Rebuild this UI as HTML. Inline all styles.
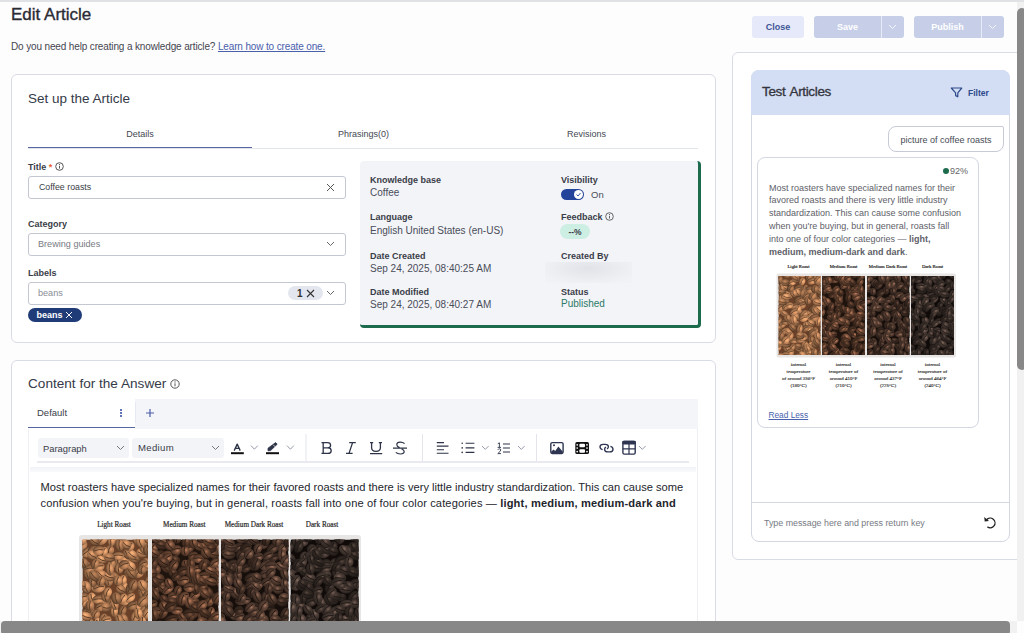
<!DOCTYPE html>
<html><head><meta charset="utf-8">
<style>
html,body{margin:0;padding:0;}
body{width:1024px;height:633px;overflow:hidden;position:relative;background:#fdfdfe;font-family:"Liberation Sans",sans-serif;color:#333;}
.a{position:absolute;}
.t{position:absolute;line-height:1;white-space:nowrap;}
.b{font-weight:bold;}
.lbl{font-size:9px;font-weight:bold;color:#3a3d48;}
.val{font-size:10px;color:#4a4d58;}
.rc{font-size:9px;color:#5e6068;}
.box{position:absolute;border:1px solid #c3c7d1;border-radius:3px;background:#fff;box-sizing:border-box;}
svg{position:absolute;overflow:visible;}
</style></head><body>
<svg width="0" height="0" style="position:absolute"><defs><clipPath id="cl100"><rect x="82.4" y="539.5" width="65.6" height="84.0"/></clipPath><radialGradient id="g100_0" cx="40%" cy="35%" r="70%"><stop offset="0" stop-color="#c3875b"/><stop offset="0.3" stop-color="#a6734e"/><stop offset="0.75" stop-color="#735036"/><stop offset="1" stop-color="#412d1e"/></radialGradient><radialGradient id="g100_1" cx="40%" cy="35%" r="70%"><stop offset="0" stop-color="#da9766"/><stop offset="0.3" stop-color="#b98057"/><stop offset="0.75" stop-color="#81593c"/><stop offset="1" stop-color="#483222"/></radialGradient><radialGradient id="g100_2" cx="40%" cy="35%" r="70%"><stop offset="0" stop-color="#f0a771"/><stop offset="0.3" stop-color="#cd8e60"/><stop offset="0.75" stop-color="#8e6343"/><stop offset="1" stop-color="#503725"/></radialGradient><radialGradient id="g100_3" cx="40%" cy="35%" r="70%"><stop offset="0" stop-color="#ffb77c"/><stop offset="0.3" stop-color="#e09c69"/><stop offset="0.75" stop-color="#9c6c49"/><stop offset="1" stop-color="#573d29"/></radialGradient><clipPath id="cl101"><rect x="152.0" y="539.5" width="66.5" height="84.0"/></clipPath><radialGradient id="g101_0" cx="40%" cy="35%" r="70%"><stop offset="0" stop-color="#81563f"/><stop offset="0.3" stop-color="#523728"/><stop offset="0.75" stop-color="#39261c"/><stop offset="1" stop-color="#20150f"/></radialGradient><radialGradient id="g101_1" cx="40%" cy="35%" r="70%"><stop offset="0" stop-color="#976449"/><stop offset="0.3" stop-color="#60402f"/><stop offset="0.75" stop-color="#432c20"/><stop offset="1" stop-color="#251912"/></radialGradient><radialGradient id="g101_2" cx="40%" cy="35%" r="70%"><stop offset="0" stop-color="#ac7354"/><stop offset="0.3" stop-color="#6e4935"/><stop offset="0.75" stop-color="#4c3325"/><stop offset="1" stop-color="#2b1c15"/></radialGradient><radialGradient id="g101_3" cx="40%" cy="35%" r="70%"><stop offset="0" stop-color="#c2815f"/><stop offset="0.3" stop-color="#7c523c"/><stop offset="0.75" stop-color="#56392a"/><stop offset="1" stop-color="#302017"/></radialGradient><clipPath id="cl102"><rect x="221.0" y="539.5" width="67.5" height="84.0"/></clipPath><radialGradient id="g102_0" cx="40%" cy="35%" r="70%"><stop offset="0" stop-color="#6d4f3f"/><stop offset="0.3" stop-color="#422f26"/><stop offset="0.75" stop-color="#2e211a"/><stop offset="1" stop-color="#19120f"/></radialGradient><radialGradient id="g102_1" cx="40%" cy="35%" r="70%"><stop offset="0" stop-color="#7f5c4a"/><stop offset="0.3" stop-color="#4d372d"/><stop offset="0.75" stop-color="#35261f"/><stop offset="1" stop-color="#1e1511"/></radialGradient><radialGradient id="g102_2" cx="40%" cy="35%" r="70%"><stop offset="0" stop-color="#916955"/><stop offset="0.3" stop-color="#583f33"/><stop offset="0.75" stop-color="#3d2c23"/><stop offset="1" stop-color="#221814"/></radialGradient><radialGradient id="g102_3" cx="40%" cy="35%" r="70%"><stop offset="0" stop-color="#a4765f"/><stop offset="0.3" stop-color="#634739"/><stop offset="0.75" stop-color="#453128"/><stop offset="1" stop-color="#261c16"/></radialGradient><clipPath id="cl103"><rect x="290.5" y="539.5" width="68.0" height="84.0"/></clipPath><radialGradient id="g103_0" cx="40%" cy="35%" r="70%"><stop offset="0" stop-color="#58473f"/><stop offset="0.3" stop-color="#352b26"/><stop offset="0.75" stop-color="#251e1a"/><stop offset="1" stop-color="#14100f"/></radialGradient><radialGradient id="g103_1" cx="40%" cy="35%" r="70%"><stop offset="0" stop-color="#66534a"/><stop offset="0.3" stop-color="#3e322d"/><stop offset="0.75" stop-color="#2b231f"/><stop offset="1" stop-color="#181311"/></radialGradient><radialGradient id="g103_2" cx="40%" cy="35%" r="70%"><stop offset="0" stop-color="#755f55"/><stop offset="0.3" stop-color="#473933"/><stop offset="0.75" stop-color="#312823"/><stop offset="1" stop-color="#1b1614"/></radialGradient><radialGradient id="g103_3" cx="40%" cy="35%" r="70%"><stop offset="0" stop-color="#846b5f"/><stop offset="0.3" stop-color="#504039"/><stop offset="0.75" stop-color="#372d28"/><stop offset="1" stop-color="#1f1916"/></radialGradient><clipPath id="cl200"><rect x="778.5" y="276.0" width="42.0" height="79.0"/></clipPath><radialGradient id="g200_0" cx="40%" cy="35%" r="70%"><stop offset="0" stop-color="#c3875b"/><stop offset="0.3" stop-color="#a6734e"/><stop offset="0.75" stop-color="#735036"/><stop offset="1" stop-color="#412d1e"/></radialGradient><radialGradient id="g200_1" cx="40%" cy="35%" r="70%"><stop offset="0" stop-color="#da9766"/><stop offset="0.3" stop-color="#b98057"/><stop offset="0.75" stop-color="#81593c"/><stop offset="1" stop-color="#483222"/></radialGradient><radialGradient id="g200_2" cx="40%" cy="35%" r="70%"><stop offset="0" stop-color="#f0a771"/><stop offset="0.3" stop-color="#cd8e60"/><stop offset="0.75" stop-color="#8e6343"/><stop offset="1" stop-color="#503725"/></radialGradient><radialGradient id="g200_3" cx="40%" cy="35%" r="70%"><stop offset="0" stop-color="#ffb77c"/><stop offset="0.3" stop-color="#e09c69"/><stop offset="0.75" stop-color="#9c6c49"/><stop offset="1" stop-color="#573d29"/></radialGradient><clipPath id="cl201"><rect x="822.0" y="276.0" width="43.0" height="79.0"/></clipPath><radialGradient id="g201_0" cx="40%" cy="35%" r="70%"><stop offset="0" stop-color="#81563f"/><stop offset="0.3" stop-color="#523728"/><stop offset="0.75" stop-color="#39261c"/><stop offset="1" stop-color="#20150f"/></radialGradient><radialGradient id="g201_1" cx="40%" cy="35%" r="70%"><stop offset="0" stop-color="#976449"/><stop offset="0.3" stop-color="#60402f"/><stop offset="0.75" stop-color="#432c20"/><stop offset="1" stop-color="#251912"/></radialGradient><radialGradient id="g201_2" cx="40%" cy="35%" r="70%"><stop offset="0" stop-color="#ac7354"/><stop offset="0.3" stop-color="#6e4935"/><stop offset="0.75" stop-color="#4c3325"/><stop offset="1" stop-color="#2b1c15"/></radialGradient><radialGradient id="g201_3" cx="40%" cy="35%" r="70%"><stop offset="0" stop-color="#c2815f"/><stop offset="0.3" stop-color="#7c523c"/><stop offset="0.75" stop-color="#56392a"/><stop offset="1" stop-color="#302017"/></radialGradient><clipPath id="cl202"><rect x="867.0" y="276.0" width="42.5" height="79.0"/></clipPath><radialGradient id="g202_0" cx="40%" cy="35%" r="70%"><stop offset="0" stop-color="#6d4f3f"/><stop offset="0.3" stop-color="#422f26"/><stop offset="0.75" stop-color="#2e211a"/><stop offset="1" stop-color="#19120f"/></radialGradient><radialGradient id="g202_1" cx="40%" cy="35%" r="70%"><stop offset="0" stop-color="#7f5c4a"/><stop offset="0.3" stop-color="#4d372d"/><stop offset="0.75" stop-color="#35261f"/><stop offset="1" stop-color="#1e1511"/></radialGradient><radialGradient id="g202_2" cx="40%" cy="35%" r="70%"><stop offset="0" stop-color="#916955"/><stop offset="0.3" stop-color="#583f33"/><stop offset="0.75" stop-color="#3d2c23"/><stop offset="1" stop-color="#221814"/></radialGradient><radialGradient id="g202_3" cx="40%" cy="35%" r="70%"><stop offset="0" stop-color="#a4765f"/><stop offset="0.3" stop-color="#634739"/><stop offset="0.75" stop-color="#453128"/><stop offset="1" stop-color="#261c16"/></radialGradient><clipPath id="cl203"><rect x="911.0" y="276.0" width="43.0" height="79.0"/></clipPath><radialGradient id="g203_0" cx="40%" cy="35%" r="70%"><stop offset="0" stop-color="#58473f"/><stop offset="0.3" stop-color="#352b26"/><stop offset="0.75" stop-color="#251e1a"/><stop offset="1" stop-color="#14100f"/></radialGradient><radialGradient id="g203_1" cx="40%" cy="35%" r="70%"><stop offset="0" stop-color="#66534a"/><stop offset="0.3" stop-color="#3e322d"/><stop offset="0.75" stop-color="#2b231f"/><stop offset="1" stop-color="#181311"/></radialGradient><radialGradient id="g203_2" cx="40%" cy="35%" r="70%"><stop offset="0" stop-color="#755f55"/><stop offset="0.3" stop-color="#473933"/><stop offset="0.75" stop-color="#312823"/><stop offset="1" stop-color="#1b1614"/></radialGradient><radialGradient id="g203_3" cx="40%" cy="35%" r="70%"><stop offset="0" stop-color="#846b5f"/><stop offset="0.3" stop-color="#504039"/><stop offset="0.75" stop-color="#372d28"/><stop offset="1" stop-color="#1f1916"/></radialGradient></defs></svg>
<!-- top bar -->
<div class="a" style="left:0;top:0;width:1024px;height:2px;background:#e1e2e6"></div>

<div class="t" style="left:11px;top:5.6px;font-size:17px;color:#2b2b35;-webkit-text-stroke:0.35px #2b2b35">Edit Article</div>
<div class="t" style="left:11px;top:41.5px;font-size:10px;letter-spacing:-0.14px;color:#46464f">Do you need help creating a knowledge article? <span style="color:#4a60ab;text-decoration:underline">Learn how to create one.</span></div>

<!-- buttons -->
<div class="a" style="left:752px;top:16px;width:52px;height:22px;background:#e5e9f9;border-radius:3px"></div>
<div class="t b" style="left:752px;top:22.8px;width:52px;text-align:center;font-size:9px;color:#3d5596">Close</div>
<div class="a" style="left:814px;top:16px;width:90px;height:22px;background:#c6cee8;border-radius:3px"></div>
<div class="a" style="left:881px;top:16px;width:1px;height:22px;background:#e8ecf8"></div>
<div class="t b" style="left:814px;top:22.8px;width:67px;text-align:center;font-size:9px;color:#fff">Save</div>
<svg style="left:888px;top:24px" width="9" height="6" viewBox="0 0 9 6"><path d="M1 1 L4.5 4.5 L8 1" fill="none" stroke="#f4f6fc" stroke-width="1"/></svg>
<div class="a" style="left:914px;top:16px;width:90px;height:22px;background:#c6cee8;border-radius:3px"></div>
<div class="a" style="left:981px;top:16px;width:1px;height:22px;background:#e8ecf8"></div>
<div class="t b" style="left:914px;top:22.8px;width:67px;text-align:center;font-size:9px;color:#fff">Publish</div>
<svg style="left:988px;top:24px" width="9" height="6" viewBox="0 0 9 6"><path d="M1 1 L4.5 4.5 L8 1" fill="none" stroke="#f4f6fc" stroke-width="1"/></svg>

<!-- CARD 1 -->
<div class="a" style="left:11px;top:74px;width:705px;height:269px;border:1px solid #d9dce5;border-radius:6px;box-sizing:border-box;background:#fff"></div>
<div class="t" style="left:28px;top:91.6px;font-size:13.5px;color:#353a48">Set up the Article</div>
<div class="t" style="left:28px;top:130px;width:224px;text-align:center;font-size:9px;color:#444851">Details</div>
<div class="t" style="left:252px;top:130px;width:223px;text-align:center;font-size:9px;color:#444851">Phrasings(0)</div>
<div class="t" style="left:475px;top:130px;width:223px;text-align:center;font-size:9px;color:#444851">Revisions</div>
<div class="a" style="left:28px;top:148px;width:670px;height:1px;background:#e3e5ec"></div>
<div class="a" style="left:28px;top:147px;width:224px;height:1.4px;background:#5566a0"></div>

<!-- form -->
<div class="t lbl" style="left:28px;top:163.4px">Title <span style="color:#e8622d">*</span></div>
<svg style="left:55px;top:162px" width="9" height="9" viewBox="0 0 9 9"><circle cx="4.5" cy="4.5" r="3.8" fill="none" stroke="#444" stroke-width="0.9"/><path d="M4.5 3.9V6.6" stroke="#444" stroke-width="0.9"/><circle cx="4.5" cy="2.6" r="0.55" fill="#444"/></svg>
<div class="box" style="left:28px;top:176px;width:318px;height:23px"></div>
<div class="t" style="left:39px;top:182.8px;font-size:8.8px;color:#3a3d46">Coffee roasts</div>
<svg style="left:326px;top:183px" width="9" height="9" viewBox="0 0 9 9"><path d="M1 1L8 8M8 1L1 8" stroke="#555" stroke-width="1"/></svg>

<div class="t lbl" style="left:28px;top:220.4px">Category</div>
<div class="box" style="left:28px;top:233px;width:318px;height:23px"></div>
<div class="t" style="left:38px;top:239.8px;font-size:9.1px;color:#777a84">Brewing guides</div>
<svg style="left:326px;top:241px" width="9" height="6" viewBox="0 0 9 6"><path d="M1 1 L4.5 4.5 L8 1" fill="none" stroke="#666" stroke-width="1"/></svg>

<div class="t lbl" style="left:28px;top:269.4px">Labels</div>
<div class="box" style="left:28px;top:282px;width:318px;height:23px"></div>
<div class="t" style="left:38px;top:288.8px;font-size:9.1px;color:#8a8d96">beans</div>
<div class="a" style="left:288px;top:286px;width:35px;height:14px;border-radius:7px;background:#e3e6ee"></div>
<div class="t b" style="left:297px;top:288.5px;font-size:10px;color:#333">1</div>
<svg style="left:306px;top:289px" width="9" height="9" viewBox="0 0 9 9"><path d="M1 1L8 8M8 1L1 8" stroke="#333" stroke-width="1.1"/></svg>
<svg style="left:326px;top:290px" width="9" height="6" viewBox="0 0 9 6"><path d="M1 1 L4.5 4.5 L8 1" fill="none" stroke="#666" stroke-width="1"/></svg>
<div class="a" style="left:28px;top:308px;width:54px;height:14px;border-radius:7px;background:#1f3b78"></div>
<div class="t b" style="left:36.5px;top:311.4px;font-size:9px;color:#fff">beans</div>
<svg style="left:65px;top:311px" width="8" height="8" viewBox="0 0 8 8"><path d="M1 1L7 7M7 1L1 7" stroke="#f4f6fc" stroke-width="1"/></svg>

<!-- info panel -->
<div class="a" style="left:360px;top:161px;width:341px;height:167px;background:#f3f4f8;border-right:3px solid #1d6b4d;border-bottom:3px solid #1d6b4d;border-radius:4px;box-sizing:border-box"></div>
<div class="t lbl" style="left:370px;top:176.1px">Knowledge base</div>
<div class="t val" style="left:370px;top:188.2px">Coffee</div>
<div class="t lbl" style="left:370px;top:213.1px">Language</div>
<div class="t val" style="left:370px;top:225.6px">English United States (en-US)</div>
<div class="t lbl" style="left:370px;top:252.1px">Date Created</div>
<div class="t val" style="left:370px;top:263.8px">Sep 24, 2025, 08:40:25 AM</div>
<div class="t lbl" style="left:370px;top:287.5px">Date Modified</div>
<div class="t val" style="left:370px;top:299.6px">Sep 24, 2025, 08:40:27 AM</div>

<div class="t lbl" style="left:561px;top:175.5px">Visibility</div>
<div class="a" style="left:561px;top:189px;width:23px;height:11px;border-radius:6px;background:#24439a"></div>
<div class="a" style="left:574px;top:190px;width:9px;height:9px;border-radius:5px;background:#fff"></div>
<svg style="left:575px;top:192px" width="7" height="5" viewBox="0 0 7 5"><path d="M1.5 2.5L3 4L5.5 1" fill="none" stroke="#24439a" stroke-width="0.9"/></svg>
<div class="t" style="left:591px;top:190px;font-size:9.5px;color:#4a4d58">On</div>
<div class="t lbl" style="left:561px;top:213.1px">Feedback</div>
<svg style="left:605px;top:212px" width="9" height="9" viewBox="0 0 9 9"><circle cx="4.5" cy="4.5" r="3.8" fill="none" stroke="#555" stroke-width="0.9"/><path d="M4.5 3.9V6.6" stroke="#555" stroke-width="0.9"/><circle cx="4.5" cy="2.6" r="0.55" fill="#555"/></svg>
<div class="a" style="left:560px;top:224px;width:30px;height:15px;border-radius:8px;background:#cdeee3"></div>
<div class="t b" style="left:560px;top:227.5px;width:30px;text-align:center;font-size:8.5px;color:#3a3d48">--%</div>
<div class="t lbl" style="left:561px;top:252.1px">Created By</div>
<div class="a" style="left:545px;top:261.5px;width:87px;height:21px;background:radial-gradient(ellipse 60% 80% at 50% 30%,#e1e3e8,#eceef2 70%,#f1f2f5)"></div>
<div class="t lbl" style="left:561px;top:287.5px">Status</div>
<div class="t val" style="left:561px;top:299.4px;color:#2a7a66">Published</div>

<!-- CARD 2 -->
<div class="a" style="left:11px;top:360px;width:705px;height:300px;border:1px solid #d9dce5;border-radius:6px;box-sizing:border-box;background:#fff"></div>
<div class="t" style="left:28px;top:377.4px;font-size:13.6px;color:#353a48">Content for the Answer</div>
<svg style="left:170px;top:379px" width="10" height="10" viewBox="0 0 10 10"><circle cx="5" cy="5" r="4.2" fill="none" stroke="#444" stroke-width="0.9"/><path d="M5 4.3V7.3" stroke="#444" stroke-width="0.9"/><circle cx="5" cy="2.9" r="0.6" fill="#444"/></svg>

<div class="a" style="left:28px;top:399px;width:670px;height:29.5px;background:#f4f5f9"></div>
<div class="a" style="left:28px;top:399px;width:107px;height:30px;background:#fff"></div>
<div class="a" style="left:28px;top:427px;width:107px;height:1.3px;background:#5566a0"></div>
<div class="t" style="left:37px;top:408px;font-size:9.5px;color:#3a3d48">Default</div>
<div class="a" style="left:119.8px;top:408.8px;width:1.8px;height:1.8px;background:#2f47a0;border-radius:1px"></div>
<div class="a" style="left:119.8px;top:412px;width:1.8px;height:1.8px;background:#2f47a0;border-radius:1px"></div>
<div class="a" style="left:119.8px;top:415.2px;width:1.8px;height:1.8px;background:#2f47a0;border-radius:1px"></div>
<div class="a" style="left:135px;top:402px;width:1px;height:21px;background:#e6e9f3"></div>
<svg style="left:145.7px;top:409px" width="8" height="8" viewBox="0 0 8 8"><path d="M4 0V8M0 4H8" stroke="#4b5ea8" stroke-width="1.2"/></svg>

<!-- editor -->
<div class="a" style="left:28px;top:429px;width:670px;height:260px;border-left:1px solid #eeeff2;border-right:1px solid #eeeff2;box-sizing:border-box"></div>
<div class="a" style="left:37px;top:461px;width:652px;height:1.6px;background:#e9eaef"></div>
<div class="a" style="left:30px;top:467px;width:666px;height:5px;background:linear-gradient(#f1f2f6,#f9fafc)"></div>

<div class="a" style="left:38px;top:438px;width:91px;height:20px;background:#f3f4f8;border-radius:3px"></div>
<div class="t" style="left:43px;top:443.6px;font-size:9.4px;color:#3a3d48">Paragraph</div>
<svg style="left:116px;top:445px" width="9" height="6" viewBox="0 0 9 6"><path d="M1 1 L4.5 4.5 L8 1" fill="none" stroke="#777" stroke-width="1"/></svg>
<div class="a" style="left:132px;top:438px;width:92px;height:20px;background:#f3f4f8;border-radius:3px"></div>
<div class="t" style="left:138px;top:443.4px;font-size:9.6px;letter-spacing:0.3px;color:#3a3d48">Medium</div>
<svg style="left:211px;top:445px" width="9" height="6" viewBox="0 0 9 6"><path d="M1 1 L4.5 4.5 L8 1" fill="none" stroke="#777" stroke-width="1"/></svg>
<svg style="left:0;top:0" width="1024" height="633">
<g fill="none" stroke-linecap="butt">
<!-- A -->
<path d="M234.2 450.6 L237.2 444.1 L240.2 450.6 M235.3 448.3 H239.1" stroke="#2e3447" stroke-width="1.35" stroke-linejoin="round"/>
<rect x="231" y="452.2" width="12.8" height="2" fill="#111" stroke="none"/>
<path d="M251 445.6 L254.4 449.2 L257.8 445.6" stroke="#8a90a0" stroke-width="0.9"/>
<!-- highlighter -->
<path d="M275.6 442.6 L277.2 444.2 L270.6 450.6 L268 450.8 L268 448.2 Z" fill="#2e3447" stroke="#2e3447" stroke-width="0.8" stroke-linejoin="round"/>
<path d="M273.2 444.8 L275.2 446.8" stroke="#fff" stroke-width="0.7"/>
<rect x="266" y="452.2" width="13" height="2" fill="#111" stroke="none"/>
<path d="M287 445.6 L290.4 449.2 L293.8 445.6" stroke="#8a90a0" stroke-width="0.9"/>
<!-- B -->
<path d="M321.5 442.6 H327.6 Q330.6 442.6 330.6 445.3 Q330.6 447.9 327.6 447.9 H323.2 M323.2 447.9 H328 Q331.2 447.9 331.2 450.7 Q331.2 453.4 328 453.4 H321.5 M323.2 442.6 V453.4" stroke="#2e3447" stroke-width="1.3"/>
<!-- I -->
<path d="M349.2 442.6 H355.8 M346 453.4 H352.6 M352.6 442.6 L349 453.4" stroke="#2e3447" stroke-width="1.3"/>
<!-- U -->
<path d="M370 442.6 H373.2 M378.8 442.6 H382 M371.6 442.6 V447.8 Q371.6 451.3 376 451.3 Q380.4 451.3 380.4 447.8 V442.6 M370 453.7 H382.2" stroke="#2e3447" stroke-width="1.3"/>
<!-- S -->
<path d="M404.6 443.6 Q403 442.2 400.2 442.2 Q396.8 442.2 396.8 444.8 Q396.8 446.6 399.6 447.6 M401.6 449 Q404.2 450 404.2 451.6 Q404.2 454 400.4 454 Q397.4 454 395.8 452.4 M393 448.2 H407" stroke="#2e3447" stroke-width="1.2"/>
<!-- separators -->
<rect x="305.5" y="434" width="1" height="27" fill="#e3e5eb" stroke="none"/>
<rect x="422" y="434" width="1" height="27" fill="#e3e5eb" stroke="none"/>
<rect x="536" y="434" width="1" height="27" fill="#e3e5eb" stroke="none"/>
<!-- align left -->
<path d="M436.8 442.6 H444 M436.8 446.1 H448.5 M436.8 449.7 H444 M436.8 453.3 H448.5" stroke="#2e3447" stroke-width="1.1"/>
<!-- bullets -->
<path d="M465.6 443.3 H474.4 M465.6 447.9 H474.4 M465.6 452.4 H474.4" stroke="#2e3447" stroke-width="1.1"/>
<circle cx="462.2" cy="443.3" r="0.8" fill="#2e3447" stroke="none"/><circle cx="462.2" cy="447.9" r="0.8" fill="#2e3447" stroke="none"/><circle cx="462.2" cy="452.4" r="0.8" fill="#2e3447" stroke="none"/>
<path d="M482 446 L485.3 449.4 L488.6 446" stroke="#8a90a0" stroke-width="0.9"/>
<!-- numbered -->
<path d="M503 444 H510 M503 448 H510 M503 452 H510" stroke="#2e3447" stroke-width="1.1"/>
<path d="M497.8 443.8 L499.4 442.8 V447.4 M497.6 447.4 H501 M497.8 449.8 Q498.4 448.8 499.4 448.8 Q500.8 448.8 500.8 450 Q500.8 451 497.8 453.6 H501" stroke="#2e3447" stroke-width="0.9"/>
<path d="M518 446 L521.3 449.4 L524.6 446" stroke="#8a90a0" stroke-width="0.9"/>
<!-- image -->
<rect x="550.8" y="442.6" width="12.3" height="10.9" rx="1.4" stroke="#2e3550" stroke-width="1.4"/>
<path d="M551.2 453.2 V451.8 L553.5 449.6 L555.2 451 L558.4 446.6 L563 452 V453.2 Z" fill="#2e3550" stroke="none"/>
<circle cx="554" cy="445.3" r="1" fill="#2e3550" stroke="none"/>
<!-- film -->
<rect x="575.3" y="442.1" width="13.7" height="11.9" rx="1.6" fill="#111" stroke="none"/>
<rect x="579.4" y="443.8" width="5.6" height="3.4" rx="1" fill="#fff" stroke="none"/>
<rect x="579.4" y="449.2" width="5.6" height="3.6" rx="1" fill="#fff" stroke="none"/>
<circle cx="577.2" cy="444.8" r="0.85" fill="#fff" stroke="none"/><circle cx="577.2" cy="448" r="0.85" fill="#fff" stroke="none"/><circle cx="577.2" cy="451.6" r="0.85" fill="#fff" stroke="none"/>
<circle cx="587" cy="444.8" r="0.85" fill="#fff" stroke="none"/><circle cx="587" cy="448" r="0.85" fill="#fff" stroke="none"/><circle cx="587" cy="451.6" r="0.85" fill="#fff" stroke="none"/>
<!-- link -->
<path d="M602.6 449.6 Q600 449.2 600 446.8 Q600 444.4 603.2 444.4 H605.2 Q608.4 444.4 608.4 446.8 Q608.4 448.2 607 449" stroke="#2e3550" stroke-width="1.35"/><path d="M610.4 446.4 Q613 446.9 613 449.2 Q613 451.9 609.8 451.9 H607.8 Q604.6 451.9 604.6 449.2 Q604.6 447.9 606 447.2" stroke="#2e3550" stroke-width="1.35"/>
<!-- table -->
<rect x="622.9" y="441.5" width="12.3" height="12.6" rx="1.4" stroke="#2e3550" stroke-width="1.4"/>
<rect x="622.2" y="440.8" width="13.7" height="3.6" rx="1.4" fill="#2e3550" stroke="none"/>
<path d="M629 444 V454 M622.9 448.8 H635.2" stroke="#2e3550" stroke-width="1.2"/>
<path d="M639 446 L642.3 449.4 L645.6 446" stroke="#8a90a0" stroke-width="0.9"/>
</g>
</svg>


<div class="t" style="left:40.6px;top:481.9px;font-size:11.12px;color:#23252c">Most roasters have specialized names for their favored roasts and there is very little industry standardization. This can cause some</div>
<div class="t" style="left:40.6px;top:497.8px;font-size:11.12px;letter-spacing:0.11px;color:#23252c">confusion when you're buying, but in general, roasts fall into one of four color categories — <b style="letter-spacing:0.16px">light, medium, medium-dark and</b></div>
<svg style="left:0;top:0" width="1024" height="633"><defs><clipPath id="c1"><rect x="79" y="535" width="282" height="86"/></clipPath></defs><g clip-path="url(#c1)"><rect x="79" y="535" width="282" height="120" fill="#e8e6e4" rx="3"/><g clip-path="url(#cl100)"><rect x="82.4" y="539.5" width="65.6" height="84.0" fill="#6a4028"/><g transform="translate(147.6 563.0) rotate(44)"><ellipse rx="5.8" ry="4.0" fill="url(#g100_0)"/><path d="M-4.6 0Q0 1.4 4.6 0" fill="none" stroke="#4c3524" stroke-width="0.81"/></g><g transform="translate(142.9 590.1) rotate(150)"><ellipse rx="5.9" ry="4.8" fill="url(#g100_1)"/><path d="M-4.8 0Q0 1.7 4.8 0" fill="none" stroke="#4c3524" stroke-width="0.81"/></g><g transform="translate(118.8 563.1) rotate(73)"><ellipse rx="6.5" ry="4.9" fill="url(#g100_0)"/><path d="M-5.2 0Q0 1.7 5.2 0" fill="none" stroke="#4c3524" stroke-width="0.81"/></g><g transform="translate(151.1 572.6) rotate(124)"><ellipse rx="5.9" ry="4.4" fill="url(#g100_0)"/><path d="M-4.7 0Q0 1.5 4.7 0" fill="none" stroke="#4c3524" stroke-width="0.81"/></g><g transform="translate(138.9 572.7) rotate(134)"><ellipse rx="5.8" ry="4.8" fill="url(#g100_2)"/><path d="M-4.6 0Q0 1.7 4.6 0" fill="none" stroke="#4c3524" stroke-width="0.81"/></g><g transform="translate(87.7 574.5) rotate(78)"><ellipse rx="5.4" ry="4.1" fill="url(#g100_0)"/><path d="M-4.3 0Q0 1.4 4.3 0" fill="none" stroke="#4c3524" stroke-width="0.81"/></g><g transform="translate(114.2 539.9) rotate(96)"><ellipse rx="6.5" ry="4.9" fill="url(#g100_0)"/><path d="M-5.2 0Q0 1.7 5.2 0" fill="none" stroke="#4c3524" stroke-width="0.81"/></g><g transform="translate(136.9 539.0) rotate(76)"><ellipse rx="6.3" ry="4.1" fill="url(#g100_3)"/><path d="M-5.0 0Q0 1.4 5.0 0" fill="none" stroke="#4c3524" stroke-width="0.81"/></g><g transform="translate(110.0 604.1) rotate(113)"><ellipse rx="5.8" ry="4.7" fill="url(#g100_0)"/><path d="M-4.6 0Q0 1.6 4.6 0" fill="none" stroke="#4c3524" stroke-width="0.81"/></g><g transform="translate(86.0 565.5) rotate(56)"><ellipse rx="5.7" ry="4.5" fill="url(#g100_0)"/><path d="M-4.6 0Q0 1.6 4.6 0" fill="none" stroke="#4c3524" stroke-width="0.81"/></g><g transform="translate(95.5 614.4) rotate(118)"><ellipse rx="5.0" ry="4.4" fill="url(#g100_1)"/><path d="M-4.0 0Q0 1.5 4.0 0" fill="none" stroke="#4c3524" stroke-width="0.81"/></g><g transform="translate(81.7 625.1) rotate(128)"><ellipse rx="5.8" ry="4.2" fill="url(#g100_3)"/><path d="M-4.6 0Q0 1.5 4.6 0" fill="none" stroke="#4c3524" stroke-width="0.81"/></g><g transform="translate(89.3 568.9) rotate(174)"><ellipse rx="5.8" ry="4.3" fill="url(#g100_1)"/><path d="M-4.6 0Q0 1.5 4.6 0" fill="none" stroke="#4c3524" stroke-width="0.81"/></g><g transform="translate(114.7 577.3) rotate(45)"><ellipse rx="6.3" ry="4.3" fill="url(#g100_0)"/><path d="M-5.0 0Q0 1.5 5.0 0" fill="none" stroke="#4c3524" stroke-width="0.81"/></g><g transform="translate(152.7 591.4) rotate(0)"><ellipse rx="5.7" ry="4.9" fill="url(#g100_3)"/><path d="M-4.5 0Q0 1.7 4.5 0" fill="none" stroke="#4c3524" stroke-width="0.81"/></g><g transform="translate(109.5 550.0) rotate(108)"><ellipse rx="4.9" ry="4.7" fill="url(#g100_1)"/><path d="M-3.9 0Q0 1.7 3.9 0" fill="none" stroke="#4c3524" stroke-width="0.81"/></g><g transform="translate(82.2 546.1) rotate(129)"><ellipse rx="6.3" ry="4.4" fill="url(#g100_1)"/><path d="M-5.0 0Q0 1.5 5.0 0" fill="none" stroke="#4c3524" stroke-width="0.81"/></g><g transform="translate(84.1 601.2) rotate(116)"><ellipse rx="5.7" ry="4.1" fill="url(#g100_3)"/><path d="M-4.6 0Q0 1.4 4.6 0" fill="none" stroke="#4c3524" stroke-width="0.81"/></g><g transform="translate(83.4 597.4) rotate(160)"><ellipse rx="4.9" ry="4.9" fill="url(#g100_1)"/><path d="M-3.9 0Q0 1.7 3.9 0" fill="none" stroke="#4c3524" stroke-width="0.81"/></g><g transform="translate(149.3 580.5) rotate(137)"><ellipse rx="5.1" ry="4.8" fill="url(#g100_1)"/><path d="M-4.1 0Q0 1.7 4.1 0" fill="none" stroke="#4c3524" stroke-width="0.81"/></g><g transform="translate(137.1 607.7) rotate(74)"><ellipse rx="6.3" ry="4.8" fill="url(#g100_2)"/><path d="M-5.1 0Q0 1.7 5.1 0" fill="none" stroke="#4c3524" stroke-width="0.81"/></g><g transform="translate(123.5 585.8) rotate(70)"><ellipse rx="5.8" ry="4.3" fill="url(#g100_3)"/><path d="M-4.6 0Q0 1.5 4.6 0" fill="none" stroke="#4c3524" stroke-width="0.81"/></g><g transform="translate(128.2 572.0) rotate(140)"><ellipse rx="5.1" ry="4.5" fill="url(#g100_0)"/><path d="M-4.1 0Q0 1.6 4.1 0" fill="none" stroke="#4c3524" stroke-width="0.81"/></g><g transform="translate(114.2 611.1) rotate(92)"><ellipse rx="5.8" ry="3.9" fill="url(#g100_3)"/><path d="M-4.6 0Q0 1.4 4.6 0" fill="none" stroke="#4c3524" stroke-width="0.81"/></g><g transform="translate(122.0 624.4) rotate(13)"><ellipse rx="5.5" ry="3.8" fill="url(#g100_3)"/><path d="M-4.4 0Q0 1.3 4.4 0" fill="none" stroke="#4c3524" stroke-width="0.81"/></g><g transform="translate(96.3 588.4) rotate(29)"><ellipse rx="5.3" ry="4.4" fill="url(#g100_3)"/><path d="M-4.3 0Q0 1.5 4.3 0" fill="none" stroke="#4c3524" stroke-width="0.81"/></g><g transform="translate(101.2 601.6) rotate(66)"><ellipse rx="6.5" ry="4.7" fill="url(#g100_2)"/><path d="M-5.2 0Q0 1.6 5.2 0" fill="none" stroke="#4c3524" stroke-width="0.81"/></g><g transform="translate(147.9 537.9) rotate(76)"><ellipse rx="5.5" ry="4.1" fill="url(#g100_3)"/><path d="M-4.4 0Q0 1.4 4.4 0" fill="none" stroke="#4c3524" stroke-width="0.81"/></g><g transform="translate(125.6 561.2) rotate(6)"><ellipse rx="4.9" ry="4.9" fill="url(#g100_2)"/><path d="M-3.9 0Q0 1.7 3.9 0" fill="none" stroke="#4c3524" stroke-width="0.81"/></g><g transform="translate(135.7 616.1) rotate(121)"><ellipse rx="6.2" ry="4.6" fill="url(#g100_3)"/><path d="M-5.0 0Q0 1.6 5.0 0" fill="none" stroke="#4c3524" stroke-width="0.81"/></g><g transform="translate(143.8 610.8) rotate(127)"><ellipse rx="5.3" ry="4.0" fill="url(#g100_2)"/><path d="M-4.3 0Q0 1.4 4.3 0" fill="none" stroke="#4c3524" stroke-width="0.81"/></g><g transform="translate(102.0 559.5) rotate(22)"><ellipse rx="5.4" ry="3.9" fill="url(#g100_3)"/><path d="M-4.3 0Q0 1.4 4.3 0" fill="none" stroke="#4c3524" stroke-width="0.81"/></g><g transform="translate(131.4 573.4) rotate(49)"><ellipse rx="6.4" ry="4.6" fill="url(#g100_0)"/><path d="M-5.1 0Q0 1.6 5.1 0" fill="none" stroke="#4c3524" stroke-width="0.81"/></g><g transform="translate(126.1 600.5) rotate(147)"><ellipse rx="6.1" ry="4.4" fill="url(#g100_3)"/><path d="M-4.9 0Q0 1.5 4.9 0" fill="none" stroke="#4c3524" stroke-width="0.81"/></g><g transform="translate(99.2 587.6) rotate(165)"><ellipse rx="6.3" ry="4.8" fill="url(#g100_2)"/><path d="M-5.0 0Q0 1.7 5.0 0" fill="none" stroke="#4c3524" stroke-width="0.81"/></g><g transform="translate(102.0 575.0) rotate(36)"><ellipse rx="5.9" ry="4.6" fill="url(#g100_2)"/><path d="M-4.7 0Q0 1.6 4.7 0" fill="none" stroke="#4c3524" stroke-width="0.81"/></g><g transform="translate(108.7 580.1) rotate(93)"><ellipse rx="6.2" ry="4.5" fill="url(#g100_2)"/><path d="M-4.9 0Q0 1.6 4.9 0" fill="none" stroke="#4c3524" stroke-width="0.81"/></g><g transform="translate(127.5 554.2) rotate(56)"><ellipse rx="5.4" ry="4.2" fill="url(#g100_0)"/><path d="M-4.3 0Q0 1.5 4.3 0" fill="none" stroke="#4c3524" stroke-width="0.81"/></g><g transform="translate(111.6 564.1) rotate(80)"><ellipse rx="5.2" ry="4.2" fill="url(#g100_1)"/><path d="M-4.1 0Q0 1.5 4.1 0" fill="none" stroke="#4c3524" stroke-width="0.81"/></g><g transform="translate(92.2 597.8) rotate(71)"><ellipse rx="5.3" ry="4.2" fill="url(#g100_3)"/><path d="M-4.2 0Q0 1.5 4.2 0" fill="none" stroke="#4c3524" stroke-width="0.81"/></g><g transform="translate(120.9 589.6) rotate(31)"><ellipse rx="5.1" ry="4.2" fill="url(#g100_1)"/><path d="M-4.1 0Q0 1.5 4.1 0" fill="none" stroke="#4c3524" stroke-width="0.81"/></g><g transform="translate(118.1 555.7) rotate(180)"><ellipse rx="6.0" ry="4.1" fill="url(#g100_2)"/><path d="M-4.8 0Q0 1.4 4.8 0" fill="none" stroke="#4c3524" stroke-width="0.81"/></g><g transform="translate(98.5 599.5) rotate(177)"><ellipse rx="6.3" ry="4.4" fill="url(#g100_2)"/><path d="M-5.1 0Q0 1.5 5.1 0" fill="none" stroke="#4c3524" stroke-width="0.81"/></g><g transform="translate(130.0 597.8) rotate(142)"><ellipse rx="5.9" ry="4.2" fill="url(#g100_3)"/><path d="M-4.7 0Q0 1.5 4.7 0" fill="none" stroke="#4c3524" stroke-width="0.81"/></g><g transform="translate(130.8 566.0) rotate(51)"><ellipse rx="5.9" ry="4.4" fill="url(#g100_3)"/><path d="M-4.7 0Q0 1.5 4.7 0" fill="none" stroke="#4c3524" stroke-width="0.81"/></g><g transform="translate(111.3 540.4) rotate(95)"><ellipse rx="6.1" ry="3.9" fill="url(#g100_3)"/><path d="M-4.9 0Q0 1.3 4.9 0" fill="none" stroke="#4c3524" stroke-width="0.81"/></g><g transform="translate(142.6 585.6) rotate(59)"><ellipse rx="6.1" ry="4.9" fill="url(#g100_2)"/><path d="M-4.9 0Q0 1.7 4.9 0" fill="none" stroke="#4c3524" stroke-width="0.81"/></g><g transform="translate(134.3 558.7) rotate(21)"><ellipse rx="5.5" ry="4.2" fill="url(#g100_1)"/><path d="M-4.4 0Q0 1.5 4.4 0" fill="none" stroke="#4c3524" stroke-width="0.81"/></g><g transform="translate(100.9 622.1) rotate(21)"><ellipse rx="6.4" ry="4.0" fill="url(#g100_3)"/><path d="M-5.1 0Q0 1.4 5.1 0" fill="none" stroke="#4c3524" stroke-width="0.81"/></g><g transform="translate(122.8 580.2) rotate(101)"><ellipse rx="5.2" ry="4.0" fill="url(#g100_3)"/><path d="M-4.1 0Q0 1.4 4.1 0" fill="none" stroke="#4c3524" stroke-width="0.81"/></g><g transform="translate(119.9 624.8) rotate(55)"><ellipse rx="5.7" ry="4.5" fill="url(#g100_3)"/><path d="M-4.5 0Q0 1.6 4.5 0" fill="none" stroke="#4c3524" stroke-width="0.81"/></g><g transform="translate(143.2 621.0) rotate(80)"><ellipse rx="5.1" ry="4.4" fill="url(#g100_2)"/><path d="M-4.0 0Q0 1.5 4.0 0" fill="none" stroke="#4c3524" stroke-width="0.81"/></g><g transform="translate(109.4 557.5) rotate(8)"><ellipse rx="5.8" ry="4.5" fill="url(#g100_1)"/><path d="M-4.7 0Q0 1.6 4.7 0" fill="none" stroke="#4c3524" stroke-width="0.81"/></g><g transform="translate(117.8 580.5) rotate(103)"><ellipse rx="5.0" ry="4.7" fill="url(#g100_2)"/><path d="M-4.0 0Q0 1.6 4.0 0" fill="none" stroke="#4c3524" stroke-width="0.81"/></g><g transform="translate(91.9 582.5) rotate(98)"><ellipse rx="4.9" ry="3.9" fill="url(#g100_0)"/><path d="M-3.9 0Q0 1.4 3.9 0" fill="none" stroke="#4c3524" stroke-width="0.81"/></g><g transform="translate(142.1 553.1) rotate(17)"><ellipse rx="5.8" ry="4.9" fill="url(#g100_2)"/><path d="M-4.6 0Q0 1.7 4.6 0" fill="none" stroke="#4c3524" stroke-width="0.81"/></g><g transform="translate(87.5 552.4) rotate(154)"><ellipse rx="6.3" ry="4.6" fill="url(#g100_2)"/><path d="M-5.0 0Q0 1.6 5.0 0" fill="none" stroke="#4c3524" stroke-width="0.81"/></g><g transform="translate(105.5 597.0) rotate(82)"><ellipse rx="4.9" ry="4.2" fill="url(#g100_1)"/><path d="M-3.9 0Q0 1.5 3.9 0" fill="none" stroke="#4c3524" stroke-width="0.81"/></g><g transform="translate(143.9 547.7) rotate(75)"><ellipse rx="6.1" ry="4.6" fill="url(#g100_2)"/><path d="M-4.9 0Q0 1.6 4.9 0" fill="none" stroke="#4c3524" stroke-width="0.81"/></g><g transform="translate(147.8 549.6) rotate(90)"><ellipse rx="6.2" ry="4.7" fill="url(#g100_0)"/><path d="M-5.0 0Q0 1.6 5.0 0" fill="none" stroke="#4c3524" stroke-width="0.81"/></g><g transform="translate(150.1 617.5) rotate(82)"><ellipse rx="6.4" ry="4.8" fill="url(#g100_2)"/><path d="M-5.1 0Q0 1.7 5.1 0" fill="none" stroke="#4c3524" stroke-width="0.81"/></g><g transform="translate(150.6 622.3) rotate(100)"><ellipse rx="6.1" ry="4.3" fill="url(#g100_0)"/><path d="M-4.9 0Q0 1.5 4.9 0" fill="none" stroke="#4c3524" stroke-width="0.81"/></g><g transform="translate(84.3 563.0) rotate(70)"><ellipse rx="5.1" ry="4.0" fill="url(#g100_0)"/><path d="M-4.1 0Q0 1.4 4.1 0" fill="none" stroke="#4c3524" stroke-width="0.81"/></g><g transform="translate(100.4 606.8) rotate(162)"><ellipse rx="5.2" ry="4.3" fill="url(#g100_1)"/><path d="M-4.2 0Q0 1.5 4.2 0" fill="none" stroke="#4c3524" stroke-width="0.81"/></g><g transform="translate(122.5 610.7) rotate(113)"><ellipse rx="5.4" ry="3.9" fill="url(#g100_0)"/><path d="M-4.3 0Q0 1.4 4.3 0" fill="none" stroke="#4c3524" stroke-width="0.81"/></g><g transform="translate(109.4 576.6) rotate(18)"><ellipse rx="5.8" ry="4.7" fill="url(#g100_2)"/><path d="M-4.7 0Q0 1.6 4.7 0" fill="none" stroke="#4c3524" stroke-width="0.81"/></g><g transform="translate(86.0 612.7) rotate(158)"><ellipse rx="6.0" ry="4.7" fill="url(#g100_0)"/><path d="M-4.8 0Q0 1.6 4.8 0" fill="none" stroke="#4c3524" stroke-width="0.81"/></g><g transform="translate(140.4 542.1) rotate(72)"><ellipse rx="6.4" ry="4.6" fill="url(#g100_2)"/><path d="M-5.1 0Q0 1.6 5.1 0" fill="none" stroke="#4c3524" stroke-width="0.81"/></g><g transform="translate(86.0 587.0) rotate(72)"><ellipse rx="6.2" ry="4.8" fill="url(#g100_2)"/><path d="M-5.0 0Q0 1.7 5.0 0" fill="none" stroke="#4c3524" stroke-width="0.81"/></g><g transform="translate(123.8 618.9) rotate(54)"><ellipse rx="5.3" ry="4.2" fill="url(#g100_1)"/><path d="M-4.2 0Q0 1.5 4.2 0" fill="none" stroke="#4c3524" stroke-width="0.81"/></g><g transform="translate(81.8 539.9) rotate(99)"><ellipse rx="5.0" ry="4.8" fill="url(#g100_3)"/><path d="M-4.0 0Q0 1.7 4.0 0" fill="none" stroke="#4c3524" stroke-width="0.81"/></g><g transform="translate(147.9 567.4) rotate(1)"><ellipse rx="6.5" ry="4.2" fill="url(#g100_2)"/><path d="M-5.2 0Q0 1.5 5.2 0" fill="none" stroke="#4c3524" stroke-width="0.81"/></g><g transform="translate(89.3 624.0) rotate(95)"><ellipse rx="6.0" ry="4.6" fill="url(#g100_1)"/><path d="M-4.8 0Q0 1.6 4.8 0" fill="none" stroke="#4c3524" stroke-width="0.81"/></g><g transform="translate(130.6 587.8) rotate(121)"><ellipse rx="6.3" ry="4.3" fill="url(#g100_0)"/><path d="M-5.0 0Q0 1.5 5.0 0" fill="none" stroke="#4c3524" stroke-width="0.81"/></g><g transform="translate(122.1 543.2) rotate(160)"><ellipse rx="5.9" ry="4.2" fill="url(#g100_2)"/><path d="M-4.7 0Q0 1.5 4.7 0" fill="none" stroke="#4c3524" stroke-width="0.81"/></g><g transform="translate(133.0 585.2) rotate(113)"><ellipse rx="5.8" ry="4.6" fill="url(#g100_0)"/><path d="M-4.6 0Q0 1.6 4.6 0" fill="none" stroke="#4c3524" stroke-width="0.81"/></g><g transform="translate(147.6 613.3) rotate(132)"><ellipse rx="5.5" ry="4.6" fill="url(#g100_3)"/><path d="M-4.4 0Q0 1.6 4.4 0" fill="none" stroke="#4c3524" stroke-width="0.81"/></g><g transform="translate(107.6 592.3) rotate(113)"><ellipse rx="5.1" ry="4.3" fill="url(#g100_3)"/><path d="M-4.1 0Q0 1.5 4.1 0" fill="none" stroke="#4c3524" stroke-width="0.81"/></g><g transform="translate(114.6 603.8) rotate(77)"><ellipse rx="6.3" ry="4.0" fill="url(#g100_3)"/><path d="M-5.0 0Q0 1.4 5.0 0" fill="none" stroke="#4c3524" stroke-width="0.81"/></g><g transform="translate(102.6 539.7) rotate(136)"><ellipse rx="6.1" ry="4.4" fill="url(#g100_2)"/><path d="M-4.9 0Q0 1.5 4.9 0" fill="none" stroke="#4c3524" stroke-width="0.81"/></g><g transform="translate(119.3 620.1) rotate(67)"><ellipse rx="6.1" ry="3.9" fill="url(#g100_1)"/><path d="M-4.8 0Q0 1.4 4.8 0" fill="none" stroke="#4c3524" stroke-width="0.81"/></g><g transform="translate(137.1 626.1) rotate(171)"><ellipse rx="6.5" ry="3.9" fill="url(#g100_1)"/><path d="M-5.2 0Q0 1.4 5.2 0" fill="none" stroke="#4c3524" stroke-width="0.81"/></g><g transform="translate(106.5 607.4) rotate(5)"><ellipse rx="5.0" ry="4.8" fill="url(#g100_1)"/><path d="M-4.0 0Q0 1.7 4.0 0" fill="none" stroke="#4c3524" stroke-width="0.81"/></g><g transform="translate(143.1 563.7) rotate(153)"><ellipse rx="5.0" ry="4.3" fill="url(#g100_0)"/><path d="M-4.0 0Q0 1.5 4.0 0" fill="none" stroke="#4c3524" stroke-width="0.81"/></g><g transform="translate(132.2 605.7) rotate(159)"><ellipse rx="5.3" ry="4.2" fill="url(#g100_0)"/><path d="M-4.3 0Q0 1.5 4.3 0" fill="none" stroke="#4c3524" stroke-width="0.81"/></g><g transform="translate(152.7 553.2) rotate(31)"><ellipse rx="5.0" ry="4.2" fill="url(#g100_0)"/><path d="M-4.0 0Q0 1.5 4.0 0" fill="none" stroke="#4c3524" stroke-width="0.81"/></g><g transform="translate(122.8 598.9) rotate(119)"><ellipse rx="5.9" ry="4.1" fill="url(#g100_3)"/><path d="M-4.7 0Q0 1.4 4.7 0" fill="none" stroke="#4c3524" stroke-width="0.81"/></g><g transform="translate(119.1 568.7) rotate(96)"><ellipse rx="4.9" ry="4.3" fill="url(#g100_2)"/><path d="M-3.9 0Q0 1.5 3.9 0" fill="none" stroke="#4c3524" stroke-width="0.81"/></g><g transform="translate(86.2 616.4) rotate(19)"><ellipse rx="6.3" ry="4.0" fill="url(#g100_3)"/><path d="M-5.1 0Q0 1.4 5.1 0" fill="none" stroke="#4c3524" stroke-width="0.81"/></g><g transform="translate(93.6 550.4) rotate(153)"><ellipse rx="6.3" ry="4.9" fill="url(#g100_1)"/><path d="M-5.0 0Q0 1.7 5.0 0" fill="none" stroke="#4c3524" stroke-width="0.81"/></g><g transform="translate(81.3 585.3) rotate(17)"><ellipse rx="4.9" ry="4.5" fill="url(#g100_2)"/><path d="M-3.9 0Q0 1.6 3.9 0" fill="none" stroke="#4c3524" stroke-width="0.81"/></g><g transform="translate(89.6 607.0) rotate(79)"><ellipse rx="6.3" ry="4.5" fill="url(#g100_2)"/><path d="M-5.0 0Q0 1.6 5.0 0" fill="none" stroke="#4c3524" stroke-width="0.81"/></g><g transform="translate(103.3 619.6) rotate(106)"><ellipse rx="6.2" ry="4.1" fill="url(#g100_2)"/><path d="M-5.0 0Q0 1.4 5.0 0" fill="none" stroke="#4c3524" stroke-width="0.81"/></g><g transform="translate(92.3 555.2) rotate(32)"><ellipse rx="5.6" ry="4.7" fill="url(#g100_2)"/><path d="M-4.4 0Q0 1.7 4.4 0" fill="none" stroke="#4c3524" stroke-width="0.81"/></g><g transform="translate(106.2 620.1) rotate(163)"><ellipse rx="5.4" ry="4.6" fill="url(#g100_3)"/><path d="M-4.3 0Q0 1.6 4.3 0" fill="none" stroke="#4c3524" stroke-width="0.81"/></g><g transform="translate(90.1 605.6) rotate(92)"><ellipse rx="5.6" ry="4.2" fill="url(#g100_1)"/><path d="M-4.5 0Q0 1.5 4.5 0" fill="none" stroke="#4c3524" stroke-width="0.81"/></g><g transform="translate(116.2 598.3) rotate(76)"><ellipse rx="6.1" ry="4.9" fill="url(#g100_0)"/><path d="M-4.9 0Q0 1.7 4.9 0" fill="none" stroke="#4c3524" stroke-width="0.81"/></g><g transform="translate(142.0 569.7) rotate(98)"><ellipse rx="4.9" ry="4.5" fill="url(#g100_0)"/><path d="M-3.9 0Q0 1.6 3.9 0" fill="none" stroke="#4c3524" stroke-width="0.81"/></g><g transform="translate(103.8 551.6) rotate(112)"><ellipse rx="5.0" ry="3.9" fill="url(#g100_3)"/><path d="M-4.0 0Q0 1.4 4.0 0" fill="none" stroke="#4c3524" stroke-width="0.81"/></g><g transform="translate(98.7 550.4) rotate(172)"><ellipse rx="5.8" ry="4.7" fill="url(#g100_2)"/><path d="M-4.6 0Q0 1.6 4.6 0" fill="none" stroke="#4c3524" stroke-width="0.81"/></g><g transform="translate(105.7 627.0) rotate(117)"><ellipse rx="6.0" ry="4.4" fill="url(#g100_3)"/><path d="M-4.8 0Q0 1.5 4.8 0" fill="none" stroke="#4c3524" stroke-width="0.81"/></g><g transform="translate(132.1 554.8) rotate(37)"><ellipse rx="5.8" ry="4.5" fill="url(#g100_3)"/><path d="M-4.6 0Q0 1.6 4.6 0" fill="none" stroke="#4c3524" stroke-width="0.81"/></g><g transform="translate(143.4 596.3) rotate(69)"><ellipse rx="6.3" ry="3.9" fill="url(#g100_1)"/><path d="M-5.1 0Q0 1.4 5.1 0" fill="none" stroke="#4c3524" stroke-width="0.81"/></g><g transform="translate(100.7 581.1) rotate(108)"><ellipse rx="5.3" ry="4.2" fill="url(#g100_1)"/><path d="M-4.2 0Q0 1.5 4.2 0" fill="none" stroke="#4c3524" stroke-width="0.81"/></g><g transform="translate(149.3 602.9) rotate(113)"><ellipse rx="6.3" ry="4.8" fill="url(#g100_1)"/><path d="M-5.1 0Q0 1.7 5.1 0" fill="none" stroke="#4c3524" stroke-width="0.81"/></g><g transform="translate(138.4 613.8) rotate(81)"><ellipse rx="5.4" ry="4.3" fill="url(#g100_3)"/><path d="M-4.4 0Q0 1.5 4.4 0" fill="none" stroke="#4c3524" stroke-width="0.81"/></g><g transform="translate(109.9 569.3) rotate(85)"><ellipse rx="6.4" ry="4.0" fill="url(#g100_2)"/><path d="M-5.1 0Q0 1.4 5.1 0" fill="none" stroke="#4c3524" stroke-width="0.81"/></g><g transform="translate(119.6 544.8) rotate(87)"><ellipse rx="6.3" ry="4.7" fill="url(#g100_1)"/><path d="M-5.1 0Q0 1.6 5.1 0" fill="none" stroke="#4c3524" stroke-width="0.81"/></g><g transform="translate(98.8 566.9) rotate(163)"><ellipse rx="5.9" ry="4.4" fill="url(#g100_2)"/><path d="M-4.7 0Q0 1.6 4.7 0" fill="none" stroke="#4c3524" stroke-width="0.81"/></g><g transform="translate(147.6 595.4) rotate(119)"><ellipse rx="5.8" ry="4.6" fill="url(#g100_0)"/><path d="M-4.6 0Q0 1.6 4.6 0" fill="none" stroke="#4c3524" stroke-width="0.81"/></g><g transform="translate(130.0 546.5) rotate(121)"><ellipse rx="5.1" ry="4.3" fill="url(#g100_2)"/><path d="M-4.1 0Q0 1.5 4.1 0" fill="none" stroke="#4c3524" stroke-width="0.81"/></g><g transform="translate(124.2 564.8) rotate(159)"><ellipse rx="5.7" ry="4.5" fill="url(#g100_1)"/><path d="M-4.5 0Q0 1.6 4.5 0" fill="none" stroke="#4c3524" stroke-width="0.81"/></g><g transform="translate(94.2 576.0) rotate(47)"><ellipse rx="6.5" ry="4.5" fill="url(#g100_0)"/><path d="M-5.2 0Q0 1.6 5.2 0" fill="none" stroke="#4c3524" stroke-width="0.81"/></g><g transform="translate(95.0 563.9) rotate(107)"><ellipse rx="5.3" ry="3.9" fill="url(#g100_1)"/><path d="M-4.2 0Q0 1.4 4.2 0" fill="none" stroke="#4c3524" stroke-width="0.81"/></g><g transform="translate(126.5 544.6) rotate(32)"><ellipse rx="5.1" ry="4.4" fill="url(#g100_2)"/><path d="M-4.1 0Q0 1.6 4.1 0" fill="none" stroke="#4c3524" stroke-width="0.81"/></g><g transform="translate(94.6 541.6) rotate(32)"><ellipse rx="5.1" ry="4.1" fill="url(#g100_0)"/><path d="M-4.1 0Q0 1.5 4.1 0" fill="none" stroke="#4c3524" stroke-width="0.81"/></g><g transform="translate(142.4 601.3) rotate(133)"><ellipse rx="6.4" ry="4.8" fill="url(#g100_1)"/><path d="M-5.1 0Q0 1.7 5.1 0" fill="none" stroke="#4c3524" stroke-width="0.81"/></g></g><g clip-path="url(#cl101)"><rect x="152.0" y="539.5" width="66.5" height="84.0" fill="#1e130d"/><g transform="translate(156.3 569.9) rotate(95)"><ellipse rx="5.3" ry="4.6" fill="url(#g101_2)"/><path d="M-4.3 0Q0 1.6 4.3 0" fill="none" stroke="#281b13" stroke-width="0.81"/></g><g transform="translate(218.6 618.8) rotate(122)"><ellipse rx="5.8" ry="4.5" fill="url(#g101_1)"/><path d="M-4.6 0Q0 1.6 4.6 0" fill="none" stroke="#281b13" stroke-width="0.81"/></g><g transform="translate(218.3 600.8) rotate(16)"><ellipse rx="5.8" ry="4.6" fill="url(#g101_1)"/><path d="M-4.7 0Q0 1.6 4.7 0" fill="none" stroke="#281b13" stroke-width="0.81"/></g><g transform="translate(161.2 585.3) rotate(86)"><ellipse rx="5.0" ry="4.0" fill="url(#g101_1)"/><path d="M-4.0 0Q0 1.4 4.0 0" fill="none" stroke="#281b13" stroke-width="0.81"/></g><g transform="translate(214.1 598.7) rotate(33)"><ellipse rx="5.7" ry="4.9" fill="url(#g101_1)"/><path d="M-4.6 0Q0 1.7 4.6 0" fill="none" stroke="#281b13" stroke-width="0.81"/></g><g transform="translate(222.4 588.8) rotate(143)"><ellipse rx="5.2" ry="4.3" fill="url(#g101_1)"/><path d="M-4.1 0Q0 1.5 4.1 0" fill="none" stroke="#281b13" stroke-width="0.81"/></g><g transform="translate(155.5 588.3) rotate(103)"><ellipse rx="5.5" ry="4.8" fill="url(#g101_1)"/><path d="M-4.4 0Q0 1.7 4.4 0" fill="none" stroke="#281b13" stroke-width="0.81"/></g><g transform="translate(155.3 594.6) rotate(58)"><ellipse rx="6.0" ry="3.8" fill="url(#g101_1)"/><path d="M-4.8 0Q0 1.3 4.8 0" fill="none" stroke="#281b13" stroke-width="0.81"/></g><g transform="translate(152.8 548.2) rotate(114)"><ellipse rx="5.3" ry="4.9" fill="url(#g101_3)"/><path d="M-4.3 0Q0 1.7 4.3 0" fill="none" stroke="#281b13" stroke-width="0.81"/></g><g transform="translate(217.5 571.3) rotate(58)"><ellipse rx="5.3" ry="4.8" fill="url(#g101_2)"/><path d="M-4.2 0Q0 1.7 4.2 0" fill="none" stroke="#281b13" stroke-width="0.81"/></g><g transform="translate(209.2 601.3) rotate(125)"><ellipse rx="5.5" ry="4.8" fill="url(#g101_2)"/><path d="M-4.4 0Q0 1.7 4.4 0" fill="none" stroke="#281b13" stroke-width="0.81"/></g><g transform="translate(167.0 554.7) rotate(172)"><ellipse rx="5.3" ry="4.2" fill="url(#g101_3)"/><path d="M-4.2 0Q0 1.5 4.2 0" fill="none" stroke="#281b13" stroke-width="0.81"/></g><g transform="translate(171.5 618.7) rotate(165)"><ellipse rx="6.6" ry="4.0" fill="url(#g101_0)"/><path d="M-5.3 0Q0 1.4 5.3 0" fill="none" stroke="#281b13" stroke-width="0.81"/></g><g transform="translate(152.3 604.2) rotate(148)"><ellipse rx="5.5" ry="4.4" fill="url(#g101_1)"/><path d="M-4.4 0Q0 1.5 4.4 0" fill="none" stroke="#281b13" stroke-width="0.81"/></g><g transform="translate(202.4 586.0) rotate(167)"><ellipse rx="5.3" ry="4.3" fill="url(#g101_1)"/><path d="M-4.3 0Q0 1.5 4.3 0" fill="none" stroke="#281b13" stroke-width="0.81"/></g><g transform="translate(184.0 595.6) rotate(162)"><ellipse rx="5.1" ry="3.9" fill="url(#g101_3)"/><path d="M-4.1 0Q0 1.4 4.1 0" fill="none" stroke="#281b13" stroke-width="0.81"/></g><g transform="translate(163.6 589.5) rotate(32)"><ellipse rx="6.4" ry="3.8" fill="url(#g101_1)"/><path d="M-5.1 0Q0 1.3 5.1 0" fill="none" stroke="#281b13" stroke-width="0.81"/></g><g transform="translate(223.6 610.7) rotate(11)"><ellipse rx="5.8" ry="4.7" fill="url(#g101_2)"/><path d="M-4.6 0Q0 1.6 4.6 0" fill="none" stroke="#281b13" stroke-width="0.81"/></g><g transform="translate(217.9 559.0) rotate(37)"><ellipse rx="5.9" ry="4.6" fill="url(#g101_2)"/><path d="M-4.8 0Q0 1.6 4.8 0" fill="none" stroke="#281b13" stroke-width="0.81"/></g><g transform="translate(193.9 601.4) rotate(10)"><ellipse rx="6.2" ry="4.0" fill="url(#g101_2)"/><path d="M-5.0 0Q0 1.4 5.0 0" fill="none" stroke="#281b13" stroke-width="0.81"/></g><g transform="translate(195.3 594.6) rotate(143)"><ellipse rx="6.6" ry="4.4" fill="url(#g101_3)"/><path d="M-5.3 0Q0 1.5 5.3 0" fill="none" stroke="#281b13" stroke-width="0.81"/></g><g transform="translate(208.9 592.6) rotate(65)"><ellipse rx="6.1" ry="4.1" fill="url(#g101_0)"/><path d="M-4.9 0Q0 1.4 4.9 0" fill="none" stroke="#281b13" stroke-width="0.81"/></g><g transform="translate(176.4 550.9) rotate(114)"><ellipse rx="5.7" ry="4.7" fill="url(#g101_1)"/><path d="M-4.6 0Q0 1.6 4.6 0" fill="none" stroke="#281b13" stroke-width="0.81"/></g><g transform="translate(165.9 543.2) rotate(12)"><ellipse rx="5.4" ry="4.3" fill="url(#g101_3)"/><path d="M-4.3 0Q0 1.5 4.3 0" fill="none" stroke="#281b13" stroke-width="0.81"/></g><g transform="translate(216.9 546.9) rotate(125)"><ellipse rx="5.5" ry="4.9" fill="url(#g101_2)"/><path d="M-4.4 0Q0 1.7 4.4 0" fill="none" stroke="#281b13" stroke-width="0.81"/></g><g transform="translate(186.1 565.2) rotate(66)"><ellipse rx="5.7" ry="4.7" fill="url(#g101_2)"/><path d="M-4.6 0Q0 1.7 4.6 0" fill="none" stroke="#281b13" stroke-width="0.81"/></g><g transform="translate(167.9 589.5) rotate(143)"><ellipse rx="6.6" ry="3.9" fill="url(#g101_3)"/><path d="M-5.2 0Q0 1.4 5.2 0" fill="none" stroke="#281b13" stroke-width="0.81"/></g><g transform="translate(198.6 624.0) rotate(144)"><ellipse rx="5.5" ry="4.1" fill="url(#g101_1)"/><path d="M-4.4 0Q0 1.4 4.4 0" fill="none" stroke="#281b13" stroke-width="0.81"/></g><g transform="translate(203.6 575.7) rotate(173)"><ellipse rx="6.3" ry="4.1" fill="url(#g101_2)"/><path d="M-5.1 0Q0 1.4 5.1 0" fill="none" stroke="#281b13" stroke-width="0.81"/></g><g transform="translate(159.5 578.6) rotate(18)"><ellipse rx="5.3" ry="4.8" fill="url(#g101_1)"/><path d="M-4.3 0Q0 1.7 4.3 0" fill="none" stroke="#281b13" stroke-width="0.81"/></g><g transform="translate(176.1 549.5) rotate(168)"><ellipse rx="5.5" ry="4.5" fill="url(#g101_3)"/><path d="M-4.4 0Q0 1.6 4.4 0" fill="none" stroke="#281b13" stroke-width="0.81"/></g><g transform="translate(202.4 617.4) rotate(67)"><ellipse rx="6.0" ry="4.5" fill="url(#g101_2)"/><path d="M-4.8 0Q0 1.6 4.8 0" fill="none" stroke="#281b13" stroke-width="0.81"/></g><g transform="translate(159.8 626.7) rotate(92)"><ellipse rx="6.2" ry="4.3" fill="url(#g101_1)"/><path d="M-4.9 0Q0 1.5 4.9 0" fill="none" stroke="#281b13" stroke-width="0.81"/></g><g transform="translate(165.3 567.8) rotate(56)"><ellipse rx="5.6" ry="3.9" fill="url(#g101_1)"/><path d="M-4.5 0Q0 1.4 4.5 0" fill="none" stroke="#281b13" stroke-width="0.81"/></g><g transform="translate(203.0 546.7) rotate(31)"><ellipse rx="5.3" ry="4.2" fill="url(#g101_2)"/><path d="M-4.2 0Q0 1.5 4.2 0" fill="none" stroke="#281b13" stroke-width="0.81"/></g><g transform="translate(175.5 560.1) rotate(27)"><ellipse rx="5.0" ry="4.4" fill="url(#g101_0)"/><path d="M-4.0 0Q0 1.6 4.0 0" fill="none" stroke="#281b13" stroke-width="0.81"/></g><g transform="translate(153.2 624.6) rotate(6)"><ellipse rx="6.2" ry="4.1" fill="url(#g101_0)"/><path d="M-4.9 0Q0 1.4 4.9 0" fill="none" stroke="#281b13" stroke-width="0.81"/></g><g transform="translate(182.0 581.5) rotate(15)"><ellipse rx="5.4" ry="4.5" fill="url(#g101_2)"/><path d="M-4.3 0Q0 1.6 4.3 0" fill="none" stroke="#281b13" stroke-width="0.81"/></g><g transform="translate(196.0 569.5) rotate(161)"><ellipse rx="6.2" ry="4.3" fill="url(#g101_3)"/><path d="M-5.0 0Q0 1.5 5.0 0" fill="none" stroke="#281b13" stroke-width="0.81"/></g><g transform="translate(195.2 588.9) rotate(75)"><ellipse rx="6.1" ry="4.2" fill="url(#g101_0)"/><path d="M-4.9 0Q0 1.5 4.9 0" fill="none" stroke="#281b13" stroke-width="0.81"/></g><g transform="translate(159.5 614.0) rotate(139)"><ellipse rx="5.3" ry="4.4" fill="url(#g101_0)"/><path d="M-4.3 0Q0 1.6 4.3 0" fill="none" stroke="#281b13" stroke-width="0.81"/></g><g transform="translate(201.1 581.1) rotate(41)"><ellipse rx="5.6" ry="4.0" fill="url(#g101_1)"/><path d="M-4.5 0Q0 1.4 4.5 0" fill="none" stroke="#281b13" stroke-width="0.81"/></g><g transform="translate(214.5 573.4) rotate(29)"><ellipse rx="5.1" ry="4.4" fill="url(#g101_2)"/><path d="M-4.1 0Q0 1.5 4.1 0" fill="none" stroke="#281b13" stroke-width="0.81"/></g><g transform="translate(172.7 596.0) rotate(164)"><ellipse rx="5.2" ry="4.3" fill="url(#g101_3)"/><path d="M-4.2 0Q0 1.5 4.2 0" fill="none" stroke="#281b13" stroke-width="0.81"/></g><g transform="translate(200.7 538.1) rotate(51)"><ellipse rx="5.0" ry="4.0" fill="url(#g101_1)"/><path d="M-4.0 0Q0 1.4 4.0 0" fill="none" stroke="#281b13" stroke-width="0.81"/></g><g transform="translate(177.7 590.4) rotate(115)"><ellipse rx="5.0" ry="4.0" fill="url(#g101_2)"/><path d="M-4.0 0Q0 1.4 4.0 0" fill="none" stroke="#281b13" stroke-width="0.81"/></g><g transform="translate(209.8 623.8) rotate(127)"><ellipse rx="5.0" ry="4.9" fill="url(#g101_2)"/><path d="M-4.0 0Q0 1.7 4.0 0" fill="none" stroke="#281b13" stroke-width="0.81"/></g><g transform="translate(172.9 602.1) rotate(10)"><ellipse rx="6.6" ry="4.6" fill="url(#g101_0)"/><path d="M-5.2 0Q0 1.6 5.2 0" fill="none" stroke="#281b13" stroke-width="0.81"/></g><g transform="translate(192.4 579.7) rotate(95)"><ellipse rx="6.0" ry="4.3" fill="url(#g101_0)"/><path d="M-4.8 0Q0 1.5 4.8 0" fill="none" stroke="#281b13" stroke-width="0.81"/></g><g transform="translate(220.6 556.8) rotate(35)"><ellipse rx="6.4" ry="4.1" fill="url(#g101_0)"/><path d="M-5.1 0Q0 1.4 5.1 0" fill="none" stroke="#281b13" stroke-width="0.81"/></g><g transform="translate(198.5 546.5) rotate(32)"><ellipse rx="6.1" ry="4.0" fill="url(#g101_2)"/><path d="M-4.9 0Q0 1.4 4.9 0" fill="none" stroke="#281b13" stroke-width="0.81"/></g><g transform="translate(158.8 555.6) rotate(138)"><ellipse rx="6.3" ry="4.8" fill="url(#g101_0)"/><path d="M-5.0 0Q0 1.7 5.0 0" fill="none" stroke="#281b13" stroke-width="0.81"/></g><g transform="translate(190.7 563.8) rotate(83)"><ellipse rx="5.6" ry="4.4" fill="url(#g101_1)"/><path d="M-4.5 0Q0 1.5 4.5 0" fill="none" stroke="#281b13" stroke-width="0.81"/></g><g transform="translate(183.8 622.8) rotate(102)"><ellipse rx="6.1" ry="4.1" fill="url(#g101_3)"/><path d="M-4.8 0Q0 1.4 4.8 0" fill="none" stroke="#281b13" stroke-width="0.81"/></g><g transform="translate(163.6 613.0) rotate(121)"><ellipse rx="6.1" ry="4.0" fill="url(#g101_1)"/><path d="M-4.9 0Q0 1.4 4.9 0" fill="none" stroke="#281b13" stroke-width="0.81"/></g><g transform="translate(161.7 545.2) rotate(10)"><ellipse rx="6.5" ry="4.6" fill="url(#g101_0)"/><path d="M-5.2 0Q0 1.6 5.2 0" fill="none" stroke="#281b13" stroke-width="0.81"/></g><g transform="translate(164.0 599.4) rotate(43)"><ellipse rx="5.1" ry="4.1" fill="url(#g101_0)"/><path d="M-4.1 0Q0 1.4 4.1 0" fill="none" stroke="#281b13" stroke-width="0.81"/></g><g transform="translate(219.6 540.0) rotate(110)"><ellipse rx="5.1" ry="4.5" fill="url(#g101_1)"/><path d="M-4.1 0Q0 1.6 4.1 0" fill="none" stroke="#281b13" stroke-width="0.81"/></g><g transform="translate(213.4 554.0) rotate(20)"><ellipse rx="5.7" ry="4.5" fill="url(#g101_2)"/><path d="M-4.6 0Q0 1.6 4.6 0" fill="none" stroke="#281b13" stroke-width="0.81"/></g><g transform="translate(154.5 582.4) rotate(53)"><ellipse rx="6.2" ry="4.1" fill="url(#g101_0)"/><path d="M-5.0 0Q0 1.4 5.0 0" fill="none" stroke="#281b13" stroke-width="0.81"/></g><g transform="translate(154.3 553.1) rotate(33)"><ellipse rx="5.9" ry="4.3" fill="url(#g101_2)"/><path d="M-4.7 0Q0 1.5 4.7 0" fill="none" stroke="#281b13" stroke-width="0.81"/></g><g transform="translate(192.9 614.1) rotate(152)"><ellipse rx="5.9" ry="4.7" fill="url(#g101_0)"/><path d="M-4.7 0Q0 1.7 4.7 0" fill="none" stroke="#281b13" stroke-width="0.81"/></g><g transform="translate(210.6 570.5) rotate(25)"><ellipse rx="6.1" ry="3.9" fill="url(#g101_3)"/><path d="M-4.9 0Q0 1.4 4.9 0" fill="none" stroke="#281b13" stroke-width="0.81"/></g><g transform="translate(152.7 563.8) rotate(114)"><ellipse rx="6.5" ry="4.8" fill="url(#g101_0)"/><path d="M-5.2 0Q0 1.7 5.2 0" fill="none" stroke="#281b13" stroke-width="0.81"/></g><g transform="translate(211.0 613.2) rotate(100)"><ellipse rx="6.4" ry="4.0" fill="url(#g101_3)"/><path d="M-5.1 0Q0 1.4 5.1 0" fill="none" stroke="#281b13" stroke-width="0.81"/></g><g transform="translate(214.6 563.2) rotate(145)"><ellipse rx="5.6" ry="4.1" fill="url(#g101_3)"/><path d="M-4.5 0Q0 1.4 4.5 0" fill="none" stroke="#281b13" stroke-width="0.81"/></g><g transform="translate(169.1 583.5) rotate(62)"><ellipse rx="5.5" ry="4.0" fill="url(#g101_3)"/><path d="M-4.4 0Q0 1.4 4.4 0" fill="none" stroke="#281b13" stroke-width="0.81"/></g><g transform="translate(218.9 576.3) rotate(43)"><ellipse rx="5.9" ry="4.6" fill="url(#g101_1)"/><path d="M-4.7 0Q0 1.6 4.7 0" fill="none" stroke="#281b13" stroke-width="0.81"/></g><g transform="translate(193.0 555.5) rotate(170)"><ellipse rx="5.2" ry="4.3" fill="url(#g101_2)"/><path d="M-4.2 0Q0 1.5 4.2 0" fill="none" stroke="#281b13" stroke-width="0.81"/></g><g transform="translate(188.7 548.4) rotate(147)"><ellipse rx="6.0" ry="4.4" fill="url(#g101_1)"/><path d="M-4.8 0Q0 1.6 4.8 0" fill="none" stroke="#281b13" stroke-width="0.81"/></g><g transform="translate(196.6 577.7) rotate(80)"><ellipse rx="6.3" ry="3.9" fill="url(#g101_2)"/><path d="M-5.0 0Q0 1.4 5.0 0" fill="none" stroke="#281b13" stroke-width="0.81"/></g><g transform="translate(221.8 583.4) rotate(20)"><ellipse rx="5.8" ry="4.4" fill="url(#g101_3)"/><path d="M-4.7 0Q0 1.6 4.7 0" fill="none" stroke="#281b13" stroke-width="0.81"/></g><g transform="translate(182.7 617.9) rotate(46)"><ellipse rx="6.6" ry="4.2" fill="url(#g101_1)"/><path d="M-5.2 0Q0 1.5 5.2 0" fill="none" stroke="#281b13" stroke-width="0.81"/></g><g transform="translate(191.0 616.5) rotate(123)"><ellipse rx="5.6" ry="4.1" fill="url(#g101_0)"/><path d="M-4.5 0Q0 1.4 4.5 0" fill="none" stroke="#281b13" stroke-width="0.81"/></g><g transform="translate(154.7 538.1) rotate(42)"><ellipse rx="6.5" ry="4.0" fill="url(#g101_3)"/><path d="M-5.2 0Q0 1.4 5.2 0" fill="none" stroke="#281b13" stroke-width="0.81"/></g><g transform="translate(167.0 558.3) rotate(140)"><ellipse rx="6.2" ry="4.4" fill="url(#g101_3)"/><path d="M-5.0 0Q0 1.5 5.0 0" fill="none" stroke="#281b13" stroke-width="0.81"/></g><g transform="translate(155.8 610.8) rotate(178)"><ellipse rx="5.2" ry="4.6" fill="url(#g101_2)"/><path d="M-4.2 0Q0 1.6 4.2 0" fill="none" stroke="#281b13" stroke-width="0.81"/></g><g transform="translate(152.2 573.1) rotate(6)"><ellipse rx="5.3" ry="4.7" fill="url(#g101_2)"/><path d="M-4.3 0Q0 1.6 4.3 0" fill="none" stroke="#281b13" stroke-width="0.81"/></g><g transform="translate(217.3 597.5) rotate(128)"><ellipse rx="6.5" ry="4.3" fill="url(#g101_2)"/><path d="M-5.2 0Q0 1.5 5.2 0" fill="none" stroke="#281b13" stroke-width="0.81"/></g><g transform="translate(190.2 571.8) rotate(83)"><ellipse rx="6.6" ry="4.8" fill="url(#g101_2)"/><path d="M-5.3 0Q0 1.7 5.3 0" fill="none" stroke="#281b13" stroke-width="0.81"/></g><g transform="translate(193.5 543.5) rotate(71)"><ellipse rx="5.1" ry="4.7" fill="url(#g101_2)"/><path d="M-4.1 0Q0 1.7 4.1 0" fill="none" stroke="#281b13" stroke-width="0.81"/></g><g transform="translate(211.3 581.8) rotate(19)"><ellipse rx="6.5" ry="3.9" fill="url(#g101_2)"/><path d="M-5.2 0Q0 1.4 5.2 0" fill="none" stroke="#281b13" stroke-width="0.81"/></g><g transform="translate(188.9 613.1) rotate(176)"><ellipse rx="6.1" ry="4.5" fill="url(#g101_0)"/><path d="M-4.9 0Q0 1.6 4.9 0" fill="none" stroke="#281b13" stroke-width="0.81"/></g><g transform="translate(170.5 541.3) rotate(44)"><ellipse rx="5.2" ry="4.4" fill="url(#g101_0)"/><path d="M-4.2 0Q0 1.5 4.2 0" fill="none" stroke="#281b13" stroke-width="0.81"/></g><g transform="translate(182.3 623.0) rotate(142)"><ellipse rx="5.5" ry="4.7" fill="url(#g101_3)"/><path d="M-4.4 0Q0 1.6 4.4 0" fill="none" stroke="#281b13" stroke-width="0.81"/></g><g transform="translate(184.9 551.2) rotate(84)"><ellipse rx="5.0" ry="4.4" fill="url(#g101_3)"/><path d="M-4.0 0Q0 1.5 4.0 0" fill="none" stroke="#281b13" stroke-width="0.81"/></g><g transform="translate(170.2 545.8) rotate(50)"><ellipse rx="5.1" ry="4.9" fill="url(#g101_3)"/><path d="M-4.1 0Q0 1.7 4.1 0" fill="none" stroke="#281b13" stroke-width="0.81"/></g><g transform="translate(173.6 565.7) rotate(125)"><ellipse rx="6.0" ry="4.5" fill="url(#g101_2)"/><path d="M-4.8 0Q0 1.6 4.8 0" fill="none" stroke="#281b13" stroke-width="0.81"/></g><g transform="translate(188.9 602.6) rotate(74)"><ellipse rx="6.1" ry="4.9" fill="url(#g101_3)"/><path d="M-4.9 0Q0 1.7 4.9 0" fill="none" stroke="#281b13" stroke-width="0.81"/></g><g transform="translate(176.7 610.3) rotate(177)"><ellipse rx="6.0" ry="4.1" fill="url(#g101_3)"/><path d="M-4.8 0Q0 1.4 4.8 0" fill="none" stroke="#281b13" stroke-width="0.81"/></g><g transform="translate(209.2 542.1) rotate(17)"><ellipse rx="5.8" ry="4.7" fill="url(#g101_2)"/><path d="M-4.6 0Q0 1.7 4.6 0" fill="none" stroke="#281b13" stroke-width="0.81"/></g><g transform="translate(215.9 615.8) rotate(156)"><ellipse rx="5.6" ry="4.2" fill="url(#g101_3)"/><path d="M-4.5 0Q0 1.5 4.5 0" fill="none" stroke="#281b13" stroke-width="0.81"/></g><g transform="translate(195.7 608.3) rotate(24)"><ellipse rx="6.1" ry="4.7" fill="url(#g101_0)"/><path d="M-4.9 0Q0 1.6 4.9 0" fill="none" stroke="#281b13" stroke-width="0.81"/></g><g transform="translate(184.0 580.2) rotate(171)"><ellipse rx="5.4" ry="4.5" fill="url(#g101_3)"/><path d="M-4.3 0Q0 1.6 4.3 0" fill="none" stroke="#281b13" stroke-width="0.81"/></g><g transform="translate(173.7 573.9) rotate(45)"><ellipse rx="6.2" ry="4.4" fill="url(#g101_0)"/><path d="M-4.9 0Q0 1.5 4.9 0" fill="none" stroke="#281b13" stroke-width="0.81"/></g><g transform="translate(204.8 593.7) rotate(42)"><ellipse rx="5.8" ry="4.4" fill="url(#g101_2)"/><path d="M-4.7 0Q0 1.5 4.7 0" fill="none" stroke="#281b13" stroke-width="0.81"/></g><g transform="translate(201.8 605.3) rotate(135)"><ellipse rx="6.0" ry="4.8" fill="url(#g101_3)"/><path d="M-4.8 0Q0 1.7 4.8 0" fill="none" stroke="#281b13" stroke-width="0.81"/></g><g transform="translate(163.8 606.5) rotate(58)"><ellipse rx="5.3" ry="4.8" fill="url(#g101_2)"/><path d="M-4.3 0Q0 1.7 4.3 0" fill="none" stroke="#281b13" stroke-width="0.81"/></g><g transform="translate(170.3 607.0) rotate(150)"><ellipse rx="6.1" ry="4.9" fill="url(#g101_0)"/><path d="M-4.9 0Q0 1.7 4.9 0" fill="none" stroke="#281b13" stroke-width="0.81"/></g><g transform="translate(180.7 600.7) rotate(68)"><ellipse rx="5.8" ry="4.4" fill="url(#g101_1)"/><path d="M-4.6 0Q0 1.5 4.6 0" fill="none" stroke="#281b13" stroke-width="0.81"/></g><g transform="translate(182.6 599.2) rotate(105)"><ellipse rx="5.6" ry="4.2" fill="url(#g101_3)"/><path d="M-4.5 0Q0 1.5 4.5 0" fill="none" stroke="#281b13" stroke-width="0.81"/></g><g transform="translate(198.2 558.5) rotate(180)"><ellipse rx="5.7" ry="4.4" fill="url(#g101_3)"/><path d="M-4.6 0Q0 1.5 4.6 0" fill="none" stroke="#281b13" stroke-width="0.81"/></g><g transform="translate(211.6 548.4) rotate(1)"><ellipse rx="5.0" ry="4.6" fill="url(#g101_0)"/><path d="M-4.0 0Q0 1.6 4.0 0" fill="none" stroke="#281b13" stroke-width="0.81"/></g><g transform="translate(176.0 576.3) rotate(141)"><ellipse rx="5.3" ry="4.1" fill="url(#g101_0)"/><path d="M-4.2 0Q0 1.4 4.2 0" fill="none" stroke="#281b13" stroke-width="0.81"/></g><g transform="translate(201.7 621.8) rotate(10)"><ellipse rx="4.9" ry="4.7" fill="url(#g101_2)"/><path d="M-3.9 0Q0 1.6 3.9 0" fill="none" stroke="#281b13" stroke-width="0.81"/></g><g transform="translate(173.8 626.0) rotate(106)"><ellipse rx="6.6" ry="4.1" fill="url(#g101_3)"/><path d="M-5.2 0Q0 1.4 5.2 0" fill="none" stroke="#281b13" stroke-width="0.81"/></g><g transform="translate(205.5 563.1) rotate(25)"><ellipse rx="5.0" ry="4.2" fill="url(#g101_0)"/><path d="M-4.0 0Q0 1.5 4.0 0" fill="none" stroke="#281b13" stroke-width="0.81"/></g><g transform="translate(189.1 587.4) rotate(177)"><ellipse rx="5.7" ry="4.8" fill="url(#g101_3)"/><path d="M-4.6 0Q0 1.7 4.6 0" fill="none" stroke="#281b13" stroke-width="0.81"/></g><g transform="translate(182.4 570.9) rotate(157)"><ellipse rx="5.7" ry="4.6" fill="url(#g101_0)"/><path d="M-4.6 0Q0 1.6 4.6 0" fill="none" stroke="#281b13" stroke-width="0.81"/></g><g transform="translate(163.8 562.5) rotate(31)"><ellipse rx="6.2" ry="4.9" fill="url(#g101_1)"/><path d="M-4.9 0Q0 1.7 4.9 0" fill="none" stroke="#281b13" stroke-width="0.81"/></g><g transform="translate(185.7 541.5) rotate(99)"><ellipse rx="5.8" ry="4.2" fill="url(#g101_1)"/><path d="M-4.7 0Q0 1.5 4.7 0" fill="none" stroke="#281b13" stroke-width="0.81"/></g><g transform="translate(153.9 614.6) rotate(76)"><ellipse rx="6.3" ry="4.7" fill="url(#g101_1)"/><path d="M-5.1 0Q0 1.6 5.1 0" fill="none" stroke="#281b13" stroke-width="0.81"/></g><g transform="translate(202.8 565.1) rotate(110)"><ellipse rx="5.2" ry="4.3" fill="url(#g101_1)"/><path d="M-4.2 0Q0 1.5 4.2 0" fill="none" stroke="#281b13" stroke-width="0.81"/></g><g transform="translate(205.7 553.2) rotate(57)"><ellipse rx="5.7" ry="4.8" fill="url(#g101_2)"/><path d="M-4.6 0Q0 1.7 4.6 0" fill="none" stroke="#281b13" stroke-width="0.81"/></g><g transform="translate(223.8 626.9) rotate(131)"><ellipse rx="5.8" ry="4.0" fill="url(#g101_2)"/><path d="M-4.7 0Q0 1.4 4.7 0" fill="none" stroke="#281b13" stroke-width="0.81"/></g><g transform="translate(176.9 538.3) rotate(93)"><ellipse rx="5.5" ry="4.5" fill="url(#g101_1)"/><path d="M-4.4 0Q0 1.6 4.4 0" fill="none" stroke="#281b13" stroke-width="0.81"/></g><g transform="translate(204.6 613.2) rotate(35)"><ellipse rx="6.5" ry="4.4" fill="url(#g101_0)"/><path d="M-5.2 0Q0 1.5 5.2 0" fill="none" stroke="#281b13" stroke-width="0.81"/></g></g><g clip-path="url(#cl102)"><rect x="221.0" y="539.5" width="67.5" height="84.0" fill="#150e0a"/><g transform="translate(249.3 540.7) rotate(150)"><ellipse rx="5.6" ry="4.9" fill="url(#g102_1)"/><path d="M-4.5 0Q0 1.7 4.5 0" fill="none" stroke="#201712" stroke-width="0.81"/></g><g transform="translate(263.9 619.3) rotate(26)"><ellipse rx="5.1" ry="4.4" fill="url(#g102_3)"/><path d="M-4.1 0Q0 1.6 4.1 0" fill="none" stroke="#201712" stroke-width="0.81"/></g><g transform="translate(232.3 564.1) rotate(161)"><ellipse rx="6.2" ry="4.4" fill="url(#g102_1)"/><path d="M-5.0 0Q0 1.5 5.0 0" fill="none" stroke="#201712" stroke-width="0.81"/></g><g transform="translate(294.2 627.5) rotate(147)"><ellipse rx="5.2" ry="4.6" fill="url(#g102_3)"/><path d="M-4.2 0Q0 1.6 4.2 0" fill="none" stroke="#201712" stroke-width="0.81"/></g><g transform="translate(253.4 540.4) rotate(36)"><ellipse rx="6.5" ry="4.0" fill="url(#g102_1)"/><path d="M-5.2 0Q0 1.4 5.2 0" fill="none" stroke="#201712" stroke-width="0.81"/></g><g transform="translate(254.8 565.3) rotate(135)"><ellipse rx="5.7" ry="4.2" fill="url(#g102_2)"/><path d="M-4.5 0Q0 1.5 4.5 0" fill="none" stroke="#201712" stroke-width="0.81"/></g><g transform="translate(269.0 606.8) rotate(13)"><ellipse rx="5.7" ry="4.0" fill="url(#g102_0)"/><path d="M-4.6 0Q0 1.4 4.6 0" fill="none" stroke="#201712" stroke-width="0.81"/></g><g transform="translate(282.2 548.9) rotate(122)"><ellipse rx="5.0" ry="4.9" fill="url(#g102_3)"/><path d="M-4.0 0Q0 1.7 4.0 0" fill="none" stroke="#201712" stroke-width="0.81"/></g><g transform="translate(250.0 585.2) rotate(149)"><ellipse rx="5.4" ry="4.5" fill="url(#g102_1)"/><path d="M-4.3 0Q0 1.6 4.3 0" fill="none" stroke="#201712" stroke-width="0.81"/></g><g transform="translate(266.0 596.0) rotate(115)"><ellipse rx="5.3" ry="4.5" fill="url(#g102_2)"/><path d="M-4.2 0Q0 1.6 4.2 0" fill="none" stroke="#201712" stroke-width="0.81"/></g><g transform="translate(293.2 618.1) rotate(119)"><ellipse rx="5.3" ry="4.4" fill="url(#g102_1)"/><path d="M-4.2 0Q0 1.5 4.2 0" fill="none" stroke="#201712" stroke-width="0.81"/></g><g transform="translate(220.4 541.0) rotate(17)"><ellipse rx="6.0" ry="4.5" fill="url(#g102_3)"/><path d="M-4.8 0Q0 1.6 4.8 0" fill="none" stroke="#201712" stroke-width="0.81"/></g><g transform="translate(273.4 613.7) rotate(124)"><ellipse rx="5.5" ry="4.5" fill="url(#g102_2)"/><path d="M-4.4 0Q0 1.6 4.4 0" fill="none" stroke="#201712" stroke-width="0.81"/></g><g transform="translate(266.4 573.3) rotate(167)"><ellipse rx="6.4" ry="4.8" fill="url(#g102_3)"/><path d="M-5.1 0Q0 1.7 5.1 0" fill="none" stroke="#201712" stroke-width="0.81"/></g><g transform="translate(292.3 567.6) rotate(19)"><ellipse rx="6.1" ry="4.3" fill="url(#g102_3)"/><path d="M-4.9 0Q0 1.5 4.9 0" fill="none" stroke="#201712" stroke-width="0.81"/></g><g transform="translate(288.7 562.5) rotate(150)"><ellipse rx="6.6" ry="4.4" fill="url(#g102_0)"/><path d="M-5.3 0Q0 1.5 5.3 0" fill="none" stroke="#201712" stroke-width="0.81"/></g><g transform="translate(263.4 544.3) rotate(169)"><ellipse rx="5.1" ry="4.7" fill="url(#g102_1)"/><path d="M-4.1 0Q0 1.6 4.1 0" fill="none" stroke="#201712" stroke-width="0.81"/></g><g transform="translate(250.8 577.5) rotate(160)"><ellipse rx="6.5" ry="4.5" fill="url(#g102_1)"/><path d="M-5.2 0Q0 1.6 5.2 0" fill="none" stroke="#201712" stroke-width="0.81"/></g><g transform="translate(258.4 585.4) rotate(135)"><ellipse rx="5.5" ry="4.0" fill="url(#g102_3)"/><path d="M-4.4 0Q0 1.4 4.4 0" fill="none" stroke="#201712" stroke-width="0.81"/></g><g transform="translate(285.0 597.6) rotate(8)"><ellipse rx="6.3" ry="4.7" fill="url(#g102_2)"/><path d="M-5.0 0Q0 1.6 5.0 0" fill="none" stroke="#201712" stroke-width="0.81"/></g><g transform="translate(284.3 583.8) rotate(82)"><ellipse rx="5.6" ry="4.1" fill="url(#g102_3)"/><path d="M-4.5 0Q0 1.4 4.5 0" fill="none" stroke="#201712" stroke-width="0.81"/></g><g transform="translate(288.9 589.6) rotate(51)"><ellipse rx="5.7" ry="4.3" fill="url(#g102_2)"/><path d="M-4.5 0Q0 1.5 4.5 0" fill="none" stroke="#201712" stroke-width="0.81"/></g><g transform="translate(223.0 608.1) rotate(34)"><ellipse rx="6.2" ry="4.7" fill="url(#g102_3)"/><path d="M-4.9 0Q0 1.6 4.9 0" fill="none" stroke="#201712" stroke-width="0.81"/></g><g transform="translate(257.8 548.4) rotate(116)"><ellipse rx="5.2" ry="4.3" fill="url(#g102_3)"/><path d="M-4.1 0Q0 1.5 4.1 0" fill="none" stroke="#201712" stroke-width="0.81"/></g><g transform="translate(281.2 538.3) rotate(54)"><ellipse rx="6.0" ry="4.7" fill="url(#g102_3)"/><path d="M-4.8 0Q0 1.6 4.8 0" fill="none" stroke="#201712" stroke-width="0.81"/></g><g transform="translate(281.8 555.1) rotate(90)"><ellipse rx="5.9" ry="4.6" fill="url(#g102_3)"/><path d="M-4.7 0Q0 1.6 4.7 0" fill="none" stroke="#201712" stroke-width="0.81"/></g><g transform="translate(271.0 602.1) rotate(38)"><ellipse rx="5.2" ry="4.9" fill="url(#g102_0)"/><path d="M-4.2 0Q0 1.7 4.2 0" fill="none" stroke="#201712" stroke-width="0.81"/></g><g transform="translate(237.9 547.4) rotate(149)"><ellipse rx="6.2" ry="4.4" fill="url(#g102_1)"/><path d="M-5.0 0Q0 1.5 5.0 0" fill="none" stroke="#201712" stroke-width="0.81"/></g><g transform="translate(241.1 601.1) rotate(176)"><ellipse rx="6.3" ry="4.1" fill="url(#g102_1)"/><path d="M-5.0 0Q0 1.4 5.0 0" fill="none" stroke="#201712" stroke-width="0.81"/></g><g transform="translate(241.0 553.7) rotate(129)"><ellipse rx="6.0" ry="4.6" fill="url(#g102_1)"/><path d="M-4.8 0Q0 1.6 4.8 0" fill="none" stroke="#201712" stroke-width="0.81"/></g><g transform="translate(290.8 613.5) rotate(113)"><ellipse rx="5.8" ry="4.3" fill="url(#g102_2)"/><path d="M-4.6 0Q0 1.5 4.6 0" fill="none" stroke="#201712" stroke-width="0.81"/></g><g transform="translate(234.3 626.7) rotate(148)"><ellipse rx="6.0" ry="4.4" fill="url(#g102_0)"/><path d="M-4.8 0Q0 1.5 4.8 0" fill="none" stroke="#201712" stroke-width="0.81"/></g><g transform="translate(262.8 622.2) rotate(1)"><ellipse rx="5.3" ry="4.0" fill="url(#g102_3)"/><path d="M-4.3 0Q0 1.4 4.3 0" fill="none" stroke="#201712" stroke-width="0.81"/></g><g transform="translate(224.6 548.0) rotate(95)"><ellipse rx="5.3" ry="4.5" fill="url(#g102_0)"/><path d="M-4.2 0Q0 1.6 4.2 0" fill="none" stroke="#201712" stroke-width="0.81"/></g><g transform="translate(281.5 566.9) rotate(31)"><ellipse rx="6.5" ry="4.6" fill="url(#g102_3)"/><path d="M-5.2 0Q0 1.6 5.2 0" fill="none" stroke="#201712" stroke-width="0.81"/></g><g transform="translate(243.0 622.6) rotate(151)"><ellipse rx="6.0" ry="4.1" fill="url(#g102_1)"/><path d="M-4.8 0Q0 1.4 4.8 0" fill="none" stroke="#201712" stroke-width="0.81"/></g><g transform="translate(294.1 596.6) rotate(180)"><ellipse rx="6.0" ry="4.8" fill="url(#g102_2)"/><path d="M-4.8 0Q0 1.7 4.8 0" fill="none" stroke="#201712" stroke-width="0.81"/></g><g transform="translate(228.5 605.0) rotate(27)"><ellipse rx="5.1" ry="4.2" fill="url(#g102_1)"/><path d="M-4.1 0Q0 1.5 4.1 0" fill="none" stroke="#201712" stroke-width="0.81"/></g><g transform="translate(255.7 586.6) rotate(41)"><ellipse rx="5.6" ry="4.6" fill="url(#g102_3)"/><path d="M-4.5 0Q0 1.6 4.5 0" fill="none" stroke="#201712" stroke-width="0.81"/></g><g transform="translate(272.5 548.5) rotate(145)"><ellipse rx="6.4" ry="4.7" fill="url(#g102_1)"/><path d="M-5.1 0Q0 1.6 5.1 0" fill="none" stroke="#201712" stroke-width="0.81"/></g><g transform="translate(276.6 541.8) rotate(104)"><ellipse rx="5.0" ry="4.6" fill="url(#g102_2)"/><path d="M-4.0 0Q0 1.6 4.0 0" fill="none" stroke="#201712" stroke-width="0.81"/></g><g transform="translate(245.8 600.2) rotate(172)"><ellipse rx="5.1" ry="4.0" fill="url(#g102_2)"/><path d="M-4.1 0Q0 1.4 4.1 0" fill="none" stroke="#201712" stroke-width="0.81"/></g><g transform="translate(290.1 546.5) rotate(40)"><ellipse rx="5.5" ry="4.7" fill="url(#g102_3)"/><path d="M-4.4 0Q0 1.6 4.4 0" fill="none" stroke="#201712" stroke-width="0.81"/></g><g transform="translate(266.3 582.0) rotate(150)"><ellipse rx="5.2" ry="4.5" fill="url(#g102_2)"/><path d="M-4.2 0Q0 1.6 4.2 0" fill="none" stroke="#201712" stroke-width="0.81"/></g><g transform="translate(285.1 560.4) rotate(127)"><ellipse rx="5.8" ry="4.3" fill="url(#g102_3)"/><path d="M-4.7 0Q0 1.5 4.7 0" fill="none" stroke="#201712" stroke-width="0.81"/></g><g transform="translate(245.7 568.1) rotate(158)"><ellipse rx="5.7" ry="4.3" fill="url(#g102_0)"/><path d="M-4.5 0Q0 1.5 4.5 0" fill="none" stroke="#201712" stroke-width="0.81"/></g><g transform="translate(258.1 556.9) rotate(162)"><ellipse rx="5.3" ry="4.3" fill="url(#g102_3)"/><path d="M-4.2 0Q0 1.5 4.2 0" fill="none" stroke="#201712" stroke-width="0.81"/></g><g transform="translate(271.8 586.7) rotate(36)"><ellipse rx="5.9" ry="4.5" fill="url(#g102_2)"/><path d="M-4.7 0Q0 1.6 4.7 0" fill="none" stroke="#201712" stroke-width="0.81"/></g><g transform="translate(237.7 575.0) rotate(74)"><ellipse rx="6.2" ry="4.3" fill="url(#g102_3)"/><path d="M-4.9 0Q0 1.5 4.9 0" fill="none" stroke="#201712" stroke-width="0.81"/></g><g transform="translate(251.9 592.9) rotate(67)"><ellipse rx="5.3" ry="4.3" fill="url(#g102_0)"/><path d="M-4.2 0Q0 1.5 4.2 0" fill="none" stroke="#201712" stroke-width="0.81"/></g><g transform="translate(219.7 617.0) rotate(172)"><ellipse rx="5.5" ry="4.4" fill="url(#g102_2)"/><path d="M-4.4 0Q0 1.6 4.4 0" fill="none" stroke="#201712" stroke-width="0.81"/></g><g transform="translate(222.3 562.9) rotate(23)"><ellipse rx="4.9" ry="4.3" fill="url(#g102_2)"/><path d="M-3.9 0Q0 1.5 3.9 0" fill="none" stroke="#201712" stroke-width="0.81"/></g><g transform="translate(235.0 593.2) rotate(57)"><ellipse rx="6.2" ry="4.9" fill="url(#g102_2)"/><path d="M-4.9 0Q0 1.7 4.9 0" fill="none" stroke="#201712" stroke-width="0.81"/></g><g transform="translate(226.3 596.1) rotate(105)"><ellipse rx="5.4" ry="4.1" fill="url(#g102_2)"/><path d="M-4.3 0Q0 1.4 4.3 0" fill="none" stroke="#201712" stroke-width="0.81"/></g><g transform="translate(250.2 627.2) rotate(115)"><ellipse rx="5.9" ry="4.3" fill="url(#g102_3)"/><path d="M-4.7 0Q0 1.5 4.7 0" fill="none" stroke="#201712" stroke-width="0.81"/></g><g transform="translate(234.2 616.4) rotate(21)"><ellipse rx="5.0" ry="3.8" fill="url(#g102_3)"/><path d="M-4.0 0Q0 1.3 4.0 0" fill="none" stroke="#201712" stroke-width="0.81"/></g><g transform="translate(239.5 616.8) rotate(164)"><ellipse rx="5.3" ry="4.8" fill="url(#g102_3)"/><path d="M-4.2 0Q0 1.7 4.2 0" fill="none" stroke="#201712" stroke-width="0.81"/></g><g transform="translate(221.2 573.0) rotate(166)"><ellipse rx="5.4" ry="4.9" fill="url(#g102_3)"/><path d="M-4.3 0Q0 1.7 4.3 0" fill="none" stroke="#201712" stroke-width="0.81"/></g><g transform="translate(237.9 567.6) rotate(90)"><ellipse rx="6.6" ry="4.4" fill="url(#g102_3)"/><path d="M-5.3 0Q0 1.5 5.3 0" fill="none" stroke="#201712" stroke-width="0.81"/></g><g transform="translate(284.4 574.4) rotate(71)"><ellipse rx="6.2" ry="3.9" fill="url(#g102_2)"/><path d="M-4.9 0Q0 1.4 4.9 0" fill="none" stroke="#201712" stroke-width="0.81"/></g><g transform="translate(226.2 551.9) rotate(160)"><ellipse rx="5.3" ry="4.3" fill="url(#g102_2)"/><path d="M-4.2 0Q0 1.5 4.2 0" fill="none" stroke="#201712" stroke-width="0.81"/></g><g transform="translate(270.5 563.7) rotate(112)"><ellipse rx="6.5" ry="4.2" fill="url(#g102_3)"/><path d="M-5.2 0Q0 1.5 5.2 0" fill="none" stroke="#201712" stroke-width="0.81"/></g><g transform="translate(268.7 558.9) rotate(146)"><ellipse rx="6.2" ry="4.8" fill="url(#g102_1)"/><path d="M-4.9 0Q0 1.7 4.9 0" fill="none" stroke="#201712" stroke-width="0.81"/></g><g transform="translate(221.5 621.3) rotate(55)"><ellipse rx="5.5" ry="4.7" fill="url(#g102_3)"/><path d="M-4.4 0Q0 1.7 4.4 0" fill="none" stroke="#201712" stroke-width="0.81"/></g><g transform="translate(254.6 620.9) rotate(166)"><ellipse rx="5.1" ry="4.7" fill="url(#g102_3)"/><path d="M-4.1 0Q0 1.6 4.1 0" fill="none" stroke="#201712" stroke-width="0.81"/></g><g transform="translate(284.7 613.6) rotate(117)"><ellipse rx="6.5" ry="4.0" fill="url(#g102_1)"/><path d="M-5.2 0Q0 1.4 5.2 0" fill="none" stroke="#201712" stroke-width="0.81"/></g><g transform="translate(229.3 554.8) rotate(2)"><ellipse rx="6.3" ry="4.7" fill="url(#g102_2)"/><path d="M-5.0 0Q0 1.6 5.0 0" fill="none" stroke="#201712" stroke-width="0.81"/></g><g transform="translate(283.6 620.1) rotate(146)"><ellipse rx="6.0" ry="4.2" fill="url(#g102_0)"/><path d="M-4.8 0Q0 1.5 4.8 0" fill="none" stroke="#201712" stroke-width="0.81"/></g><g transform="translate(278.4 589.8) rotate(2)"><ellipse rx="5.0" ry="4.3" fill="url(#g102_2)"/><path d="M-4.0 0Q0 1.5 4.0 0" fill="none" stroke="#201712" stroke-width="0.81"/></g><g transform="translate(253.5 611.5) rotate(153)"><ellipse rx="5.9" ry="4.7" fill="url(#g102_2)"/><path d="M-4.7 0Q0 1.6 4.7 0" fill="none" stroke="#201712" stroke-width="0.81"/></g><g transform="translate(256.6 577.6) rotate(34)"><ellipse rx="5.2" ry="4.9" fill="url(#g102_2)"/><path d="M-4.2 0Q0 1.7 4.2 0" fill="none" stroke="#201712" stroke-width="0.81"/></g><g transform="translate(293.4 555.5) rotate(176)"><ellipse rx="5.3" ry="4.4" fill="url(#g102_1)"/><path d="M-4.2 0Q0 1.6 4.2 0" fill="none" stroke="#201712" stroke-width="0.81"/></g><g transform="translate(273.5 557.3) rotate(159)"><ellipse rx="5.7" ry="4.1" fill="url(#g102_0)"/><path d="M-4.5 0Q0 1.4 4.5 0" fill="none" stroke="#201712" stroke-width="0.81"/></g><g transform="translate(267.8 555.2) rotate(154)"><ellipse rx="5.7" ry="3.8" fill="url(#g102_2)"/><path d="M-4.5 0Q0 1.3 4.5 0" fill="none" stroke="#201712" stroke-width="0.81"/></g><g transform="translate(266.2 540.3) rotate(105)"><ellipse rx="6.2" ry="4.1" fill="url(#g102_0)"/><path d="M-5.0 0Q0 1.4 5.0 0" fill="none" stroke="#201712" stroke-width="0.81"/></g><g transform="translate(260.4 615.3) rotate(124)"><ellipse rx="5.2" ry="4.3" fill="url(#g102_3)"/><path d="M-4.1 0Q0 1.5 4.1 0" fill="none" stroke="#201712" stroke-width="0.81"/></g><g transform="translate(254.4 606.5) rotate(178)"><ellipse rx="5.2" ry="4.8" fill="url(#g102_0)"/><path d="M-4.1 0Q0 1.7 4.1 0" fill="none" stroke="#201712" stroke-width="0.81"/></g><g transform="translate(264.5 565.8) rotate(147)"><ellipse rx="5.1" ry="4.5" fill="url(#g102_3)"/><path d="M-4.1 0Q0 1.6 4.1 0" fill="none" stroke="#201712" stroke-width="0.81"/></g><g transform="translate(219.9 604.6) rotate(102)"><ellipse rx="6.4" ry="4.6" fill="url(#g102_0)"/><path d="M-5.1 0Q0 1.6 5.1 0" fill="none" stroke="#201712" stroke-width="0.81"/></g><g transform="translate(231.2 569.3) rotate(38)"><ellipse rx="5.5" ry="4.5" fill="url(#g102_0)"/><path d="M-4.4 0Q0 1.6 4.4 0" fill="none" stroke="#201712" stroke-width="0.81"/></g><g transform="translate(228.6 611.5) rotate(53)"><ellipse rx="6.3" ry="4.9" fill="url(#g102_1)"/><path d="M-5.1 0Q0 1.7 5.1 0" fill="none" stroke="#201712" stroke-width="0.81"/></g><g transform="translate(247.5 619.4) rotate(134)"><ellipse rx="5.9" ry="4.5" fill="url(#g102_1)"/><path d="M-4.7 0Q0 1.6 4.7 0" fill="none" stroke="#201712" stroke-width="0.81"/></g><g transform="translate(230.0 576.9) rotate(49)"><ellipse rx="5.8" ry="4.0" fill="url(#g102_0)"/><path d="M-4.7 0Q0 1.4 4.7 0" fill="none" stroke="#201712" stroke-width="0.81"/></g><g transform="translate(240.9 561.4) rotate(132)"><ellipse rx="5.6" ry="4.2" fill="url(#g102_2)"/><path d="M-4.5 0Q0 1.5 4.5 0" fill="none" stroke="#201712" stroke-width="0.81"/></g><g transform="translate(276.3 580.6) rotate(28)"><ellipse rx="5.5" ry="4.8" fill="url(#g102_3)"/><path d="M-4.4 0Q0 1.7 4.4 0" fill="none" stroke="#201712" stroke-width="0.81"/></g><g transform="translate(220.7 592.3) rotate(139)"><ellipse rx="5.6" ry="4.2" fill="url(#g102_0)"/><path d="M-4.5 0Q0 1.5 4.5 0" fill="none" stroke="#201712" stroke-width="0.81"/></g><g transform="translate(282.0 602.2) rotate(10)"><ellipse rx="5.8" ry="4.5" fill="url(#g102_0)"/><path d="M-4.6 0Q0 1.6 4.6 0" fill="none" stroke="#201712" stroke-width="0.81"/></g><g transform="translate(226.3 582.0) rotate(58)"><ellipse rx="6.5" ry="4.5" fill="url(#g102_2)"/><path d="M-5.2 0Q0 1.6 5.2 0" fill="none" stroke="#201712" stroke-width="0.81"/></g><g transform="translate(231.1 547.2) rotate(7)"><ellipse rx="5.9" ry="4.8" fill="url(#g102_3)"/><path d="M-4.7 0Q0 1.7 4.7 0" fill="none" stroke="#201712" stroke-width="0.81"/></g><g transform="translate(263.2 605.9) rotate(124)"><ellipse rx="6.1" ry="4.9" fill="url(#g102_3)"/><path d="M-4.9 0Q0 1.7 4.9 0" fill="none" stroke="#201712" stroke-width="0.81"/></g><g transform="translate(275.6 619.4) rotate(8)"><ellipse rx="5.7" ry="4.1" fill="url(#g102_2)"/><path d="M-4.5 0Q0 1.4 4.5 0" fill="none" stroke="#201712" stroke-width="0.81"/></g><g transform="translate(245.7 548.0) rotate(157)"><ellipse rx="6.2" ry="4.6" fill="url(#g102_0)"/><path d="M-4.9 0Q0 1.6 4.9 0" fill="none" stroke="#201712" stroke-width="0.81"/></g><g transform="translate(293.2 578.5) rotate(167)"><ellipse rx="5.6" ry="4.7" fill="url(#g102_2)"/><path d="M-4.5 0Q0 1.6 4.5 0" fill="none" stroke="#201712" stroke-width="0.81"/></g><g transform="translate(270.8 565.8) rotate(174)"><ellipse rx="6.4" ry="4.7" fill="url(#g102_3)"/><path d="M-5.1 0Q0 1.6 5.1 0" fill="none" stroke="#201712" stroke-width="0.81"/></g><g transform="translate(252.0 561.4) rotate(125)"><ellipse rx="6.0" ry="4.3" fill="url(#g102_0)"/><path d="M-4.8 0Q0 1.5 4.8 0" fill="none" stroke="#201712" stroke-width="0.81"/></g><g transform="translate(251.3 592.4) rotate(106)"><ellipse rx="5.7" ry="4.8" fill="url(#g102_0)"/><path d="M-4.5 0Q0 1.7 4.5 0" fill="none" stroke="#201712" stroke-width="0.81"/></g><g transform="translate(287.8 542.4) rotate(104)"><ellipse rx="5.2" ry="3.9" fill="url(#g102_0)"/><path d="M-4.2 0Q0 1.4 4.2 0" fill="none" stroke="#201712" stroke-width="0.81"/></g><g transform="translate(228.8 588.9) rotate(24)"><ellipse rx="5.7" ry="3.9" fill="url(#g102_3)"/><path d="M-4.6 0Q0 1.3 4.6 0" fill="none" stroke="#201712" stroke-width="0.81"/></g><g transform="translate(226.5 566.2) rotate(62)"><ellipse rx="5.0" ry="3.9" fill="url(#g102_0)"/><path d="M-4.0 0Q0 1.4 4.0 0" fill="none" stroke="#201712" stroke-width="0.81"/></g><g transform="translate(227.8 580.6) rotate(68)"><ellipse rx="6.0" ry="4.8" fill="url(#g102_3)"/><path d="M-4.8 0Q0 1.7 4.8 0" fill="none" stroke="#201712" stroke-width="0.81"/></g><g transform="translate(240.8 539.4) rotate(23)"><ellipse rx="5.0" ry="4.0" fill="url(#g102_3)"/><path d="M-4.0 0Q0 1.4 4.0 0" fill="none" stroke="#201712" stroke-width="0.81"/></g><g transform="translate(268.4 588.9) rotate(97)"><ellipse rx="5.9" ry="4.2" fill="url(#g102_1)"/><path d="M-4.7 0Q0 1.5 4.7 0" fill="none" stroke="#201712" stroke-width="0.81"/></g><g transform="translate(229.0 541.7) rotate(30)"><ellipse rx="6.5" ry="3.9" fill="url(#g102_3)"/><path d="M-5.2 0Q0 1.4 5.2 0" fill="none" stroke="#201712" stroke-width="0.81"/></g><g transform="translate(240.8 589.1) rotate(114)"><ellipse rx="5.9" ry="4.7" fill="url(#g102_0)"/><path d="M-4.8 0Q0 1.6 4.8 0" fill="none" stroke="#201712" stroke-width="0.81"/></g><g transform="translate(293.4 579.1) rotate(122)"><ellipse rx="5.8" ry="4.1" fill="url(#g102_1)"/><path d="M-4.6 0Q0 1.4 4.6 0" fill="none" stroke="#201712" stroke-width="0.81"/></g><g transform="translate(275.1 626.4) rotate(68)"><ellipse rx="6.3" ry="4.2" fill="url(#g102_0)"/><path d="M-5.1 0Q0 1.5 5.1 0" fill="none" stroke="#201712" stroke-width="0.81"/></g><g transform="translate(249.9 607.3) rotate(137)"><ellipse rx="5.9" ry="4.1" fill="url(#g102_3)"/><path d="M-4.7 0Q0 1.4 4.7 0" fill="none" stroke="#201712" stroke-width="0.81"/></g><g transform="translate(248.9 553.8) rotate(128)"><ellipse rx="5.4" ry="4.7" fill="url(#g102_3)"/><path d="M-4.3 0Q0 1.6 4.3 0" fill="none" stroke="#201712" stroke-width="0.81"/></g><g transform="translate(294.1 601.4) rotate(88)"><ellipse rx="5.8" ry="4.3" fill="url(#g102_2)"/><path d="M-4.7 0Q0 1.5 4.7 0" fill="none" stroke="#201712" stroke-width="0.81"/></g><g transform="translate(241.9 598.0) rotate(122)"><ellipse rx="4.9" ry="4.1" fill="url(#g102_2)"/><path d="M-4.0 0Q0 1.4 4.0 0" fill="none" stroke="#201712" stroke-width="0.81"/></g><g transform="translate(284.6 625.5) rotate(88)"><ellipse rx="6.3" ry="4.8" fill="url(#g102_2)"/><path d="M-5.1 0Q0 1.7 5.1 0" fill="none" stroke="#201712" stroke-width="0.81"/></g><g transform="translate(256.1 564.3) rotate(107)"><ellipse rx="6.5" ry="4.6" fill="url(#g102_1)"/><path d="M-5.2 0Q0 1.6 5.2 0" fill="none" stroke="#201712" stroke-width="0.81"/></g><g transform="translate(272.0 599.0) rotate(58)"><ellipse rx="6.2" ry="4.4" fill="url(#g102_2)"/><path d="M-5.0 0Q0 1.5 5.0 0" fill="none" stroke="#201712" stroke-width="0.81"/></g><g transform="translate(238.8 610.1) rotate(165)"><ellipse rx="4.9" ry="4.5" fill="url(#g102_0)"/><path d="M-3.9 0Q0 1.6 3.9 0" fill="none" stroke="#201712" stroke-width="0.81"/></g><g transform="translate(270.6 572.9) rotate(136)"><ellipse rx="6.0" ry="4.3" fill="url(#g102_2)"/><path d="M-4.8 0Q0 1.5 4.8 0" fill="none" stroke="#201712" stroke-width="0.81"/></g><g transform="translate(256.9 596.6) rotate(66)"><ellipse rx="6.6" ry="4.4" fill="url(#g102_2)"/><path d="M-5.3 0Q0 1.6 5.3 0" fill="none" stroke="#201712" stroke-width="0.81"/></g><g transform="translate(237.8 583.2) rotate(64)"><ellipse rx="5.4" ry="4.4" fill="url(#g102_3)"/><path d="M-4.3 0Q0 1.5 4.3 0" fill="none" stroke="#201712" stroke-width="0.81"/></g></g><g clip-path="url(#cl103)"><rect x="290.5" y="539.5" width="68.0" height="84.0" fill="#100b09"/><g transform="translate(329.4 587.5) rotate(121)"><ellipse rx="5.9" ry="4.7" fill="url(#g103_0)"/><path d="M-4.7 0Q0 1.6 4.7 0" fill="none" stroke="#1a1512" stroke-width="0.81"/></g><g transform="translate(323.9 553.6) rotate(170)"><ellipse rx="6.3" ry="4.7" fill="url(#g103_1)"/><path d="M-5.1 0Q0 1.6 5.1 0" fill="none" stroke="#1a1512" stroke-width="0.81"/></g><g transform="translate(336.1 572.2) rotate(88)"><ellipse rx="6.3" ry="4.3" fill="url(#g103_1)"/><path d="M-5.1 0Q0 1.5 5.1 0" fill="none" stroke="#1a1512" stroke-width="0.81"/></g><g transform="translate(355.7 618.3) rotate(73)"><ellipse rx="5.0" ry="4.7" fill="url(#g103_1)"/><path d="M-4.0 0Q0 1.6 4.0 0" fill="none" stroke="#1a1512" stroke-width="0.81"/></g><g transform="translate(311.2 618.2) rotate(7)"><ellipse rx="5.3" ry="4.8" fill="url(#g103_0)"/><path d="M-4.2 0Q0 1.7 4.2 0" fill="none" stroke="#1a1512" stroke-width="0.81"/></g><g transform="translate(355.1 583.5) rotate(163)"><ellipse rx="6.0" ry="4.8" fill="url(#g103_1)"/><path d="M-4.8 0Q0 1.7 4.8 0" fill="none" stroke="#1a1512" stroke-width="0.81"/></g><g transform="translate(301.3 619.4) rotate(77)"><ellipse rx="5.7" ry="4.9" fill="url(#g103_3)"/><path d="M-4.5 0Q0 1.7 4.5 0" fill="none" stroke="#1a1512" stroke-width="0.81"/></g><g transform="translate(358.7 545.7) rotate(78)"><ellipse rx="6.1" ry="4.9" fill="url(#g103_0)"/><path d="M-4.8 0Q0 1.7 4.8 0" fill="none" stroke="#1a1512" stroke-width="0.81"/></g><g transform="translate(357.5 554.1) rotate(107)"><ellipse rx="5.9" ry="4.4" fill="url(#g103_0)"/><path d="M-4.7 0Q0 1.5 4.7 0" fill="none" stroke="#1a1512" stroke-width="0.81"/></g><g transform="translate(293.1 569.1) rotate(162)"><ellipse rx="5.9" ry="4.8" fill="url(#g103_1)"/><path d="M-4.7 0Q0 1.7 4.7 0" fill="none" stroke="#1a1512" stroke-width="0.81"/></g><g transform="translate(304.1 557.0) rotate(109)"><ellipse rx="5.5" ry="4.5" fill="url(#g103_3)"/><path d="M-4.4 0Q0 1.6 4.4 0" fill="none" stroke="#1a1512" stroke-width="0.81"/></g><g transform="translate(354.5 555.6) rotate(29)"><ellipse rx="5.8" ry="4.8" fill="url(#g103_0)"/><path d="M-4.7 0Q0 1.7 4.7 0" fill="none" stroke="#1a1512" stroke-width="0.81"/></g><g transform="translate(317.8 590.4) rotate(164)"><ellipse rx="5.1" ry="4.6" fill="url(#g103_2)"/><path d="M-4.1 0Q0 1.6 4.1 0" fill="none" stroke="#1a1512" stroke-width="0.81"/></g><g transform="translate(353.0 547.0) rotate(63)"><ellipse rx="5.0" ry="4.5" fill="url(#g103_0)"/><path d="M-4.0 0Q0 1.6 4.0 0" fill="none" stroke="#1a1512" stroke-width="0.81"/></g><g transform="translate(295.9 585.8) rotate(166)"><ellipse rx="5.5" ry="4.9" fill="url(#g103_2)"/><path d="M-4.4 0Q0 1.7 4.4 0" fill="none" stroke="#1a1512" stroke-width="0.81"/></g><g transform="translate(301.0 585.8) rotate(32)"><ellipse rx="6.4" ry="4.9" fill="url(#g103_0)"/><path d="M-5.1 0Q0 1.7 5.1 0" fill="none" stroke="#1a1512" stroke-width="0.81"/></g><g transform="translate(348.6 562.2) rotate(92)"><ellipse rx="5.3" ry="4.9" fill="url(#g103_3)"/><path d="M-4.3 0Q0 1.7 4.3 0" fill="none" stroke="#1a1512" stroke-width="0.81"/></g><g transform="translate(345.0 570.6) rotate(19)"><ellipse rx="6.1" ry="4.8" fill="url(#g103_1)"/><path d="M-4.9 0Q0 1.7 4.9 0" fill="none" stroke="#1a1512" stroke-width="0.81"/></g><g transform="translate(289.8 547.4) rotate(107)"><ellipse rx="5.9" ry="4.0" fill="url(#g103_0)"/><path d="M-4.7 0Q0 1.4 4.7 0" fill="none" stroke="#1a1512" stroke-width="0.81"/></g><g transform="translate(314.5 614.7) rotate(67)"><ellipse rx="5.8" ry="4.5" fill="url(#g103_3)"/><path d="M-4.7 0Q0 1.6 4.7 0" fill="none" stroke="#1a1512" stroke-width="0.81"/></g><g transform="translate(354.6 536.9) rotate(46)"><ellipse rx="5.1" ry="4.9" fill="url(#g103_0)"/><path d="M-4.1 0Q0 1.7 4.1 0" fill="none" stroke="#1a1512" stroke-width="0.81"/></g><g transform="translate(314.5 623.9) rotate(108)"><ellipse rx="6.2" ry="4.5" fill="url(#g103_0)"/><path d="M-5.0 0Q0 1.6 5.0 0" fill="none" stroke="#1a1512" stroke-width="0.81"/></g><g transform="translate(333.2 546.3) rotate(98)"><ellipse rx="5.1" ry="4.4" fill="url(#g103_0)"/><path d="M-4.1 0Q0 1.5 4.1 0" fill="none" stroke="#1a1512" stroke-width="0.81"/></g><g transform="translate(328.9 598.0) rotate(170)"><ellipse rx="5.2" ry="4.9" fill="url(#g103_3)"/><path d="M-4.2 0Q0 1.7 4.2 0" fill="none" stroke="#1a1512" stroke-width="0.81"/></g><g transform="translate(353.3 596.3) rotate(131)"><ellipse rx="6.3" ry="4.4" fill="url(#g103_0)"/><path d="M-5.0 0Q0 1.5 5.0 0" fill="none" stroke="#1a1512" stroke-width="0.81"/></g><g transform="translate(325.4 574.0) rotate(16)"><ellipse rx="6.4" ry="4.4" fill="url(#g103_3)"/><path d="M-5.1 0Q0 1.5 5.1 0" fill="none" stroke="#1a1512" stroke-width="0.81"/></g><g transform="translate(299.5 604.0) rotate(168)"><ellipse rx="5.3" ry="4.5" fill="url(#g103_3)"/><path d="M-4.2 0Q0 1.6 4.2 0" fill="none" stroke="#1a1512" stroke-width="0.81"/></g><g transform="translate(334.7 562.9) rotate(174)"><ellipse rx="5.0" ry="4.8" fill="url(#g103_3)"/><path d="M-4.0 0Q0 1.7 4.0 0" fill="none" stroke="#1a1512" stroke-width="0.81"/></g><g transform="translate(361.0 584.8) rotate(133)"><ellipse rx="6.3" ry="4.7" fill="url(#g103_3)"/><path d="M-5.1 0Q0 1.6 5.1 0" fill="none" stroke="#1a1512" stroke-width="0.81"/></g><g transform="translate(309.8 555.7) rotate(116)"><ellipse rx="5.0" ry="4.8" fill="url(#g103_3)"/><path d="M-4.0 0Q0 1.7 4.0 0" fill="none" stroke="#1a1512" stroke-width="0.81"/></g><g transform="translate(327.2 549.5) rotate(27)"><ellipse rx="6.5" ry="4.6" fill="url(#g103_1)"/><path d="M-5.2 0Q0 1.6 5.2 0" fill="none" stroke="#1a1512" stroke-width="0.81"/></g><g transform="translate(308.2 580.5) rotate(20)"><ellipse rx="6.4" ry="4.4" fill="url(#g103_3)"/><path d="M-5.1 0Q0 1.5 5.1 0" fill="none" stroke="#1a1512" stroke-width="0.81"/></g><g transform="translate(325.7 542.9) rotate(38)"><ellipse rx="5.6" ry="4.8" fill="url(#g103_2)"/><path d="M-4.5 0Q0 1.7 4.5 0" fill="none" stroke="#1a1512" stroke-width="0.81"/></g><g transform="translate(359.3 602.2) rotate(105)"><ellipse rx="5.6" ry="4.2" fill="url(#g103_1)"/><path d="M-4.5 0Q0 1.5 4.5 0" fill="none" stroke="#1a1512" stroke-width="0.81"/></g><g transform="translate(318.9 537.6) rotate(103)"><ellipse rx="6.4" ry="4.3" fill="url(#g103_1)"/><path d="M-5.1 0Q0 1.5 5.1 0" fill="none" stroke="#1a1512" stroke-width="0.81"/></g><g transform="translate(321.5 576.5) rotate(161)"><ellipse rx="5.8" ry="4.8" fill="url(#g103_3)"/><path d="M-4.6 0Q0 1.7 4.6 0" fill="none" stroke="#1a1512" stroke-width="0.81"/></g><g transform="translate(302.8 541.8) rotate(173)"><ellipse rx="5.8" ry="4.8" fill="url(#g103_2)"/><path d="M-4.6 0Q0 1.7 4.6 0" fill="none" stroke="#1a1512" stroke-width="0.81"/></g><g transform="translate(295.5 580.7) rotate(120)"><ellipse rx="6.3" ry="4.7" fill="url(#g103_3)"/><path d="M-5.1 0Q0 1.6 5.1 0" fill="none" stroke="#1a1512" stroke-width="0.81"/></g><g transform="translate(290.8 621.5) rotate(162)"><ellipse rx="5.4" ry="4.9" fill="url(#g103_0)"/><path d="M-4.3 0Q0 1.7 4.3 0" fill="none" stroke="#1a1512" stroke-width="0.81"/></g><g transform="translate(333.8 611.4) rotate(136)"><ellipse rx="6.2" ry="4.2" fill="url(#g103_3)"/><path d="M-5.0 0Q0 1.5 5.0 0" fill="none" stroke="#1a1512" stroke-width="0.81"/></g><g transform="translate(355.6 603.9) rotate(2)"><ellipse rx="5.2" ry="4.6" fill="url(#g103_2)"/><path d="M-4.1 0Q0 1.6 4.1 0" fill="none" stroke="#1a1512" stroke-width="0.81"/></g><g transform="translate(308.2 609.9) rotate(49)"><ellipse rx="6.3" ry="4.0" fill="url(#g103_2)"/><path d="M-5.0 0Q0 1.4 5.0 0" fill="none" stroke="#1a1512" stroke-width="0.81"/></g><g transform="translate(363.9 589.4) rotate(145)"><ellipse rx="5.8" ry="4.1" fill="url(#g103_1)"/><path d="M-4.6 0Q0 1.4 4.6 0" fill="none" stroke="#1a1512" stroke-width="0.81"/></g><g transform="translate(333.4 599.9) rotate(37)"><ellipse rx="5.1" ry="4.8" fill="url(#g103_1)"/><path d="M-4.0 0Q0 1.7 4.0 0" fill="none" stroke="#1a1512" stroke-width="0.81"/></g><g transform="translate(290.2 574.2) rotate(52)"><ellipse rx="6.4" ry="3.9" fill="url(#g103_3)"/><path d="M-5.1 0Q0 1.4 5.1 0" fill="none" stroke="#1a1512" stroke-width="0.81"/></g><g transform="translate(349.2 586.1) rotate(41)"><ellipse rx="6.0" ry="4.5" fill="url(#g103_1)"/><path d="M-4.8 0Q0 1.6 4.8 0" fill="none" stroke="#1a1512" stroke-width="0.81"/></g><g transform="translate(360.1 573.7) rotate(5)"><ellipse rx="5.2" ry="4.0" fill="url(#g103_3)"/><path d="M-4.2 0Q0 1.4 4.2 0" fill="none" stroke="#1a1512" stroke-width="0.81"/></g><g transform="translate(317.5 549.2) rotate(118)"><ellipse rx="5.0" ry="4.5" fill="url(#g103_0)"/><path d="M-4.0 0Q0 1.6 4.0 0" fill="none" stroke="#1a1512" stroke-width="0.81"/></g><g transform="translate(346.8 551.4) rotate(95)"><ellipse rx="6.1" ry="4.5" fill="url(#g103_2)"/><path d="M-4.9 0Q0 1.6 4.9 0" fill="none" stroke="#1a1512" stroke-width="0.81"/></g><g transform="translate(308.4 587.4) rotate(44)"><ellipse rx="5.8" ry="4.8" fill="url(#g103_0)"/><path d="M-4.6 0Q0 1.7 4.6 0" fill="none" stroke="#1a1512" stroke-width="0.81"/></g><g transform="translate(359.2 571.1) rotate(85)"><ellipse rx="5.5" ry="4.1" fill="url(#g103_0)"/><path d="M-4.4 0Q0 1.4 4.4 0" fill="none" stroke="#1a1512" stroke-width="0.81"/></g><g transform="translate(303.5 571.9) rotate(49)"><ellipse rx="4.9" ry="3.9" fill="url(#g103_0)"/><path d="M-3.9 0Q0 1.4 3.9 0" fill="none" stroke="#1a1512" stroke-width="0.81"/></g><g transform="translate(338.0 537.5) rotate(66)"><ellipse rx="5.4" ry="4.6" fill="url(#g103_0)"/><path d="M-4.3 0Q0 1.6 4.3 0" fill="none" stroke="#1a1512" stroke-width="0.81"/></g><g transform="translate(310.8 621.0) rotate(158)"><ellipse rx="5.5" ry="4.3" fill="url(#g103_3)"/><path d="M-4.4 0Q0 1.5 4.4 0" fill="none" stroke="#1a1512" stroke-width="0.81"/></g><g transform="translate(358.5 537.5) rotate(160)"><ellipse rx="6.0" ry="4.1" fill="url(#g103_0)"/><path d="M-4.8 0Q0 1.4 4.8 0" fill="none" stroke="#1a1512" stroke-width="0.81"/></g><g transform="translate(296.3 539.9) rotate(102)"><ellipse rx="6.1" ry="4.7" fill="url(#g103_2)"/><path d="M-4.9 0Q0 1.7 4.9 0" fill="none" stroke="#1a1512" stroke-width="0.81"/></g><g transform="translate(301.6 563.1) rotate(132)"><ellipse rx="6.6" ry="4.7" fill="url(#g103_2)"/><path d="M-5.2 0Q0 1.7 5.2 0" fill="none" stroke="#1a1512" stroke-width="0.81"/></g><g transform="translate(310.5 577.8) rotate(28)"><ellipse rx="5.9" ry="4.3" fill="url(#g103_3)"/><path d="M-4.7 0Q0 1.5 4.7 0" fill="none" stroke="#1a1512" stroke-width="0.81"/></g><g transform="translate(327.3 581.0) rotate(48)"><ellipse rx="5.9" ry="4.3" fill="url(#g103_0)"/><path d="M-4.7 0Q0 1.5 4.7 0" fill="none" stroke="#1a1512" stroke-width="0.81"/></g><g transform="translate(340.6 609.5) rotate(17)"><ellipse rx="6.5" ry="4.3" fill="url(#g103_1)"/><path d="M-5.2 0Q0 1.5 5.2 0" fill="none" stroke="#1a1512" stroke-width="0.81"/></g><g transform="translate(354.6 622.6) rotate(81)"><ellipse rx="5.7" ry="4.9" fill="url(#g103_1)"/><path d="M-4.5 0Q0 1.7 4.5 0" fill="none" stroke="#1a1512" stroke-width="0.81"/></g><g transform="translate(321.4 602.9) rotate(61)"><ellipse rx="5.4" ry="4.5" fill="url(#g103_3)"/><path d="M-4.3 0Q0 1.6 4.3 0" fill="none" stroke="#1a1512" stroke-width="0.81"/></g><g transform="translate(295.4 598.2) rotate(24)"><ellipse rx="5.9" ry="4.7" fill="url(#g103_0)"/><path d="M-4.7 0Q0 1.7 4.7 0" fill="none" stroke="#1a1512" stroke-width="0.81"/></g><g transform="translate(326.2 609.0) rotate(132)"><ellipse rx="6.1" ry="4.7" fill="url(#g103_2)"/><path d="M-4.8 0Q0 1.6 4.8 0" fill="none" stroke="#1a1512" stroke-width="0.81"/></g><g transform="translate(290.5 557.6) rotate(42)"><ellipse rx="6.1" ry="3.8" fill="url(#g103_1)"/><path d="M-4.9 0Q0 1.3 4.9 0" fill="none" stroke="#1a1512" stroke-width="0.81"/></g><g transform="translate(340.0 577.9) rotate(4)"><ellipse rx="6.3" ry="4.8" fill="url(#g103_3)"/><path d="M-5.0 0Q0 1.7 5.0 0" fill="none" stroke="#1a1512" stroke-width="0.81"/></g><g transform="translate(325.8 563.4) rotate(175)"><ellipse rx="5.2" ry="4.6" fill="url(#g103_1)"/><path d="M-4.2 0Q0 1.6 4.2 0" fill="none" stroke="#1a1512" stroke-width="0.81"/></g><g transform="translate(327.0 623.2) rotate(128)"><ellipse rx="6.1" ry="4.7" fill="url(#g103_0)"/><path d="M-4.8 0Q0 1.6 4.8 0" fill="none" stroke="#1a1512" stroke-width="0.81"/></g><g transform="translate(307.4 537.2) rotate(40)"><ellipse rx="5.7" ry="4.2" fill="url(#g103_0)"/><path d="M-4.6 0Q0 1.5 4.6 0" fill="none" stroke="#1a1512" stroke-width="0.81"/></g><g transform="translate(362.4 599.6) rotate(3)"><ellipse rx="5.8" ry="4.3" fill="url(#g103_0)"/><path d="M-4.7 0Q0 1.5 4.7 0" fill="none" stroke="#1a1512" stroke-width="0.81"/></g><g transform="translate(340.4 538.3) rotate(109)"><ellipse rx="5.7" ry="4.6" fill="url(#g103_2)"/><path d="M-4.6 0Q0 1.6 4.6 0" fill="none" stroke="#1a1512" stroke-width="0.81"/></g><g transform="translate(299.2 627.0) rotate(18)"><ellipse rx="5.0" ry="3.8" fill="url(#g103_3)"/><path d="M-4.0 0Q0 1.3 4.0 0" fill="none" stroke="#1a1512" stroke-width="0.81"/></g><g transform="translate(311.4 548.8) rotate(141)"><ellipse rx="4.9" ry="4.6" fill="url(#g103_2)"/><path d="M-3.9 0Q0 1.6 3.9 0" fill="none" stroke="#1a1512" stroke-width="0.81"/></g><g transform="translate(325.3 568.6) rotate(170)"><ellipse rx="6.6" ry="3.9" fill="url(#g103_2)"/><path d="M-5.3 0Q0 1.4 5.3 0" fill="none" stroke="#1a1512" stroke-width="0.81"/></g><g transform="translate(345.8 589.6) rotate(8)"><ellipse rx="6.4" ry="4.1" fill="url(#g103_2)"/><path d="M-5.1 0Q0 1.5 5.1 0" fill="none" stroke="#1a1512" stroke-width="0.81"/></g><g transform="translate(303.0 598.3) rotate(100)"><ellipse rx="4.9" ry="4.0" fill="url(#g103_0)"/><path d="M-3.9 0Q0 1.4 3.9 0" fill="none" stroke="#1a1512" stroke-width="0.81"/></g><g transform="translate(340.8 584.1) rotate(177)"><ellipse rx="6.1" ry="4.9" fill="url(#g103_1)"/><path d="M-4.9 0Q0 1.7 4.9 0" fill="none" stroke="#1a1512" stroke-width="0.81"/></g><g transform="translate(346.1 618.9) rotate(0)"><ellipse rx="5.2" ry="4.0" fill="url(#g103_3)"/><path d="M-4.1 0Q0 1.4 4.1 0" fill="none" stroke="#1a1512" stroke-width="0.81"/></g><g transform="translate(341.3 597.4) rotate(0)"><ellipse rx="5.0" ry="4.0" fill="url(#g103_1)"/><path d="M-4.0 0Q0 1.4 4.0 0" fill="none" stroke="#1a1512" stroke-width="0.81"/></g><g transform="translate(298.1 611.2) rotate(102)"><ellipse rx="6.0" ry="4.6" fill="url(#g103_2)"/><path d="M-4.8 0Q0 1.6 4.8 0" fill="none" stroke="#1a1512" stroke-width="0.81"/></g><g transform="translate(344.2 550.3) rotate(47)"><ellipse rx="6.0" ry="4.5" fill="url(#g103_3)"/><path d="M-4.8 0Q0 1.6 4.8 0" fill="none" stroke="#1a1512" stroke-width="0.81"/></g><g transform="translate(364.0 616.7) rotate(97)"><ellipse rx="5.8" ry="4.8" fill="url(#g103_2)"/><path d="M-4.6 0Q0 1.7 4.6 0" fill="none" stroke="#1a1512" stroke-width="0.81"/></g><g transform="translate(311.2 559.7) rotate(72)"><ellipse rx="6.0" ry="4.1" fill="url(#g103_1)"/><path d="M-4.8 0Q0 1.4 4.8 0" fill="none" stroke="#1a1512" stroke-width="0.81"/></g><g transform="translate(363.5 561.5) rotate(139)"><ellipse rx="6.6" ry="4.7" fill="url(#g103_3)"/><path d="M-5.2 0Q0 1.7 5.2 0" fill="none" stroke="#1a1512" stroke-width="0.81"/></g><g transform="translate(359.1 613.5) rotate(63)"><ellipse rx="6.0" ry="4.5" fill="url(#g103_1)"/><path d="M-4.8 0Q0 1.6 4.8 0" fill="none" stroke="#1a1512" stroke-width="0.81"/></g><g transform="translate(296.0 600.5) rotate(90)"><ellipse rx="5.8" ry="4.3" fill="url(#g103_2)"/><path d="M-4.7 0Q0 1.5 4.7 0" fill="none" stroke="#1a1512" stroke-width="0.81"/></g><g transform="translate(340.3 560.8) rotate(152)"><ellipse rx="6.2" ry="4.9" fill="url(#g103_0)"/><path d="M-4.9 0Q0 1.7 4.9 0" fill="none" stroke="#1a1512" stroke-width="0.81"/></g><g transform="translate(335.7 596.0) rotate(17)"><ellipse rx="6.5" ry="4.4" fill="url(#g103_1)"/><path d="M-5.2 0Q0 1.5 5.2 0" fill="none" stroke="#1a1512" stroke-width="0.81"/></g><g transform="translate(317.2 568.0) rotate(12)"><ellipse rx="5.8" ry="4.4" fill="url(#g103_0)"/><path d="M-4.7 0Q0 1.5 4.7 0" fill="none" stroke="#1a1512" stroke-width="0.81"/></g><g transform="translate(311.1 601.7) rotate(163)"><ellipse rx="5.7" ry="4.8" fill="url(#g103_1)"/><path d="M-4.6 0Q0 1.7 4.6 0" fill="none" stroke="#1a1512" stroke-width="0.81"/></g><g transform="translate(328.7 600.1) rotate(62)"><ellipse rx="6.5" ry="4.1" fill="url(#g103_0)"/><path d="M-5.2 0Q0 1.4 5.2 0" fill="none" stroke="#1a1512" stroke-width="0.81"/></g><g transform="translate(318.3 581.5) rotate(133)"><ellipse rx="6.3" ry="4.0" fill="url(#g103_0)"/><path d="M-5.0 0Q0 1.4 5.0 0" fill="none" stroke="#1a1512" stroke-width="0.81"/></g><g transform="translate(333.2 551.4) rotate(20)"><ellipse rx="5.5" ry="4.8" fill="url(#g103_0)"/><path d="M-4.4 0Q0 1.7 4.4 0" fill="none" stroke="#1a1512" stroke-width="0.81"/></g><g transform="translate(331.4 592.7) rotate(137)"><ellipse rx="5.9" ry="4.6" fill="url(#g103_2)"/><path d="M-4.7 0Q0 1.6 4.7 0" fill="none" stroke="#1a1512" stroke-width="0.81"/></g><g transform="translate(352.4 571.6) rotate(35)"><ellipse rx="5.4" ry="4.8" fill="url(#g103_0)"/><path d="M-4.3 0Q0 1.7 4.3 0" fill="none" stroke="#1a1512" stroke-width="0.81"/></g><g transform="translate(318.5 561.9) rotate(31)"><ellipse rx="6.5" ry="4.1" fill="url(#g103_0)"/><path d="M-5.2 0Q0 1.4 5.2 0" fill="none" stroke="#1a1512" stroke-width="0.81"/></g><g transform="translate(302.8 583.9) rotate(35)"><ellipse rx="5.1" ry="4.4" fill="url(#g103_0)"/><path d="M-4.1 0Q0 1.5 4.1 0" fill="none" stroke="#1a1512" stroke-width="0.81"/></g><g transform="translate(361.9 622.1) rotate(67)"><ellipse rx="6.1" ry="4.1" fill="url(#g103_3)"/><path d="M-4.9 0Q0 1.4 4.9 0" fill="none" stroke="#1a1512" stroke-width="0.81"/></g><g transform="translate(316.6 554.1) rotate(58)"><ellipse rx="6.3" ry="4.5" fill="url(#g103_0)"/><path d="M-5.0 0Q0 1.6 5.0 0" fill="none" stroke="#1a1512" stroke-width="0.81"/></g><g transform="translate(292.5 618.3) rotate(125)"><ellipse rx="5.3" ry="4.0" fill="url(#g103_1)"/><path d="M-4.2 0Q0 1.4 4.2 0" fill="none" stroke="#1a1512" stroke-width="0.81"/></g><g transform="translate(298.7 546.6) rotate(114)"><ellipse rx="6.5" ry="4.5" fill="url(#g103_0)"/><path d="M-5.2 0Q0 1.6 5.2 0" fill="none" stroke="#1a1512" stroke-width="0.81"/></g><g transform="translate(336.5 567.0) rotate(117)"><ellipse rx="5.2" ry="4.6" fill="url(#g103_0)"/><path d="M-4.1 0Q0 1.6 4.1 0" fill="none" stroke="#1a1512" stroke-width="0.81"/></g><g transform="translate(337.4 581.6) rotate(164)"><ellipse rx="6.1" ry="4.4" fill="url(#g103_2)"/><path d="M-4.9 0Q0 1.6 4.9 0" fill="none" stroke="#1a1512" stroke-width="0.81"/></g><g transform="translate(338.8 618.2) rotate(87)"><ellipse rx="5.6" ry="4.4" fill="url(#g103_0)"/><path d="M-4.5 0Q0 1.5 4.5 0" fill="none" stroke="#1a1512" stroke-width="0.81"/></g><g transform="translate(328.5 616.6) rotate(169)"><ellipse rx="6.5" ry="4.8" fill="url(#g103_3)"/><path d="M-5.2 0Q0 1.7 5.2 0" fill="none" stroke="#1a1512" stroke-width="0.81"/></g><g transform="translate(317.6 598.1) rotate(83)"><ellipse rx="6.4" ry="4.9" fill="url(#g103_2)"/><path d="M-5.1 0Q0 1.7 5.1 0" fill="none" stroke="#1a1512" stroke-width="0.81"/></g><g transform="translate(319.7 608.6) rotate(145)"><ellipse rx="5.4" ry="3.9" fill="url(#g103_1)"/><path d="M-4.3 0Q0 1.4 4.3 0" fill="none" stroke="#1a1512" stroke-width="0.81"/></g><g transform="translate(345.9 603.4) rotate(173)"><ellipse rx="6.1" ry="3.9" fill="url(#g103_3)"/><path d="M-4.8 0Q0 1.4 4.8 0" fill="none" stroke="#1a1512" stroke-width="0.81"/></g><g transform="translate(349.1 611.4) rotate(102)"><ellipse rx="6.3" ry="4.5" fill="url(#g103_1)"/><path d="M-5.1 0Q0 1.6 5.1 0" fill="none" stroke="#1a1512" stroke-width="0.81"/></g><g transform="translate(331.5 622.5) rotate(117)"><ellipse rx="6.0" ry="3.9" fill="url(#g103_1)"/><path d="M-4.8 0Q0 1.4 4.8 0" fill="none" stroke="#1a1512" stroke-width="0.81"/></g><g transform="translate(307.7 594.4) rotate(10)"><ellipse rx="6.1" ry="4.6" fill="url(#g103_0)"/><path d="M-4.9 0Q0 1.6 4.9 0" fill="none" stroke="#1a1512" stroke-width="0.81"/></g><g transform="translate(299.1 567.4) rotate(167)"><ellipse rx="6.3" ry="4.6" fill="url(#g103_0)"/><path d="M-5.1 0Q0 1.6 5.1 0" fill="none" stroke="#1a1512" stroke-width="0.81"/></g><g transform="translate(291.7 608.1) rotate(98)"><ellipse rx="6.4" ry="4.7" fill="url(#g103_3)"/><path d="M-5.1 0Q0 1.6 5.1 0" fill="none" stroke="#1a1512" stroke-width="0.81"/></g><g transform="translate(346.5 625.8) rotate(28)"><ellipse rx="6.2" ry="4.6" fill="url(#g103_0)"/><path d="M-5.0 0Q0 1.6 5.0 0" fill="none" stroke="#1a1512" stroke-width="0.81"/></g><g transform="translate(296.4 564.6) rotate(116)"><ellipse rx="6.2" ry="3.9" fill="url(#g103_0)"/><path d="M-5.0 0Q0 1.4 5.0 0" fill="none" stroke="#1a1512" stroke-width="0.81"/></g><g transform="translate(353.1 572.8) rotate(21)"><ellipse rx="5.5" ry="4.2" fill="url(#g103_0)"/><path d="M-4.4 0Q0 1.5 4.4 0" fill="none" stroke="#1a1512" stroke-width="0.81"/></g><g transform="translate(310.2 569.2) rotate(78)"><ellipse rx="6.1" ry="4.2" fill="url(#g103_1)"/><path d="M-4.9 0Q0 1.5 4.9 0" fill="none" stroke="#1a1512" stroke-width="0.81"/></g></g></g><text x="114" y="527" text-anchor="middle" font-family="Liberation Serif" font-size="7.2" fill="#2a2a2a" stroke="#2a2a2a" stroke-width="0.2">Light Roast</text><text x="184.3" y="527" text-anchor="middle" font-family="Liberation Serif" font-size="7.2" fill="#2a2a2a" stroke="#2a2a2a" stroke-width="0.2">Medium Roast</text><text x="254" y="527" text-anchor="middle" font-family="Liberation Serif" font-size="7.2" fill="#2a2a2a" stroke="#2a2a2a" stroke-width="0.2">Medium Dark Roast</text><text x="322" y="527" text-anchor="middle" font-family="Liberation Serif" font-size="7.2" fill="#2a2a2a" stroke="#2a2a2a" stroke-width="0.2">Dark Roast</text></svg>

<!-- RIGHT PANEL -->
<div class="a" style="left:732.2px;top:52px;width:300px;height:507.5px;border:1px solid #d9dce5;border-radius:6px;box-sizing:border-box;background:#fff"></div>
<div class="a" style="left:750.5px;top:70px;width:259.5px;height:472px;border:1px solid #d3d7e2;border-radius:8px;box-sizing:border-box;background:#fff"></div>
<div class="a" style="left:751px;top:70px;width:259px;height:45px;border-radius:8px 8px 0 0;background:#d3ddf4"></div>
<div class="t" style="left:762px;top:84.9px;font-size:13.5px;letter-spacing:-0.35px;word-spacing:1.5px;-webkit-text-stroke:0.3px #33343c;color:#33343c">Test Articles</div>
<svg style="left:950px;top:87px" width="13" height="11" viewBox="0 0 13 11"><path d="M1.3 1H11.8L7.8 5.8V9.8L5.6 8.6V5.8Z" fill="none" stroke="#2d4a8a" stroke-width="1.2" stroke-linejoin="round"/></svg>
<div class="t b" style="left:968px;top:89.1px;font-size:8.5px;color:#2d4a8a">Filter</div>

<div class="a" style="left:888px;top:126px;width:116px;height:26px;border:1px solid #c7cbd6;border-radius:8px 2px 8px 8px;box-sizing:border-box"></div>
<div class="t" style="left:888px;top:135.8px;width:116px;text-align:center;font-size:9px;color:#484b55">picture of coffee roasts</div>

<div class="a" style="left:757px;top:157px;width:222px;height:271px;border:1px solid #d3d7e2;border-radius:8px;box-sizing:border-box"></div>
<div class="a" style="left:943px;top:168px;width:6px;height:6px;border-radius:3px;background:#1d6b4d"></div>
<div class="t" style="left:950px;top:167.3px;font-size:9px;color:#666">92%</div>
<div class="t rc" style="left:769px;top:183.5px">Most roasters have specialized names for their</div>
<div class="t rc" style="left:769px;top:196.4px">favored roasts and there is very little industry</div>
<div class="t rc" style="left:769px;top:209.3px">standardization. This can cause some confusion</div>
<div class="t rc" style="left:769px;top:222.2px">when you're buying, but in general, roasts fall</div>
<div class="t rc" style="left:769px;top:235.1px">into one of four color categories — <b>light,</b></div>
<div class="t rc" style="left:769px;top:248.0px"><b>medium, medium-dark and dark</b>.</div>

<svg style="left:0;top:0" width="1024" height="633"><rect x="776.5" y="273.5" width="179.5" height="84" fill="#e8e6e4" rx="2"/><g clip-path="url(#cl200)"><rect x="778.5" y="276.0" width="42.0" height="79.0" fill="#6a4028"/><g transform="translate(820.8 336.1) rotate(174)"><ellipse rx="4.2" ry="3.6" fill="url(#g200_2)"/><path d="M-3.4 0Q0 1.2 3.4 0" fill="none" stroke="#4c3524" stroke-width="0.59"/></g><g transform="translate(791.7 356.7) rotate(169)"><ellipse rx="4.0" ry="3.4" fill="url(#g200_1)"/><path d="M-3.2 0Q0 1.2 3.2 0" fill="none" stroke="#4c3524" stroke-width="0.59"/></g><g transform="translate(813.4 292.1) rotate(12)"><ellipse rx="4.6" ry="3.1" fill="url(#g200_0)"/><path d="M-3.7 0Q0 1.1 3.7 0" fill="none" stroke="#4c3524" stroke-width="0.59"/></g><g transform="translate(779.2 279.7) rotate(84)"><ellipse rx="4.5" ry="3.5" fill="url(#g200_0)"/><path d="M-3.6 0Q0 1.2 3.6 0" fill="none" stroke="#4c3524" stroke-width="0.59"/></g><g transform="translate(791.9 282.5) rotate(159)"><ellipse rx="4.4" ry="3.0" fill="url(#g200_3)"/><path d="M-3.5 0Q0 1.0 3.5 0" fill="none" stroke="#4c3524" stroke-width="0.59"/></g><g transform="translate(814.3 278.4) rotate(80)"><ellipse rx="3.8" ry="3.4" fill="url(#g200_0)"/><path d="M-3.0 0Q0 1.2 3.0 0" fill="none" stroke="#4c3524" stroke-width="0.59"/></g><g transform="translate(784.1 287.3) rotate(35)"><ellipse rx="4.7" ry="2.9" fill="url(#g200_2)"/><path d="M-3.8 0Q0 1.0 3.8 0" fill="none" stroke="#4c3524" stroke-width="0.59"/></g><g transform="translate(809.0 293.3) rotate(13)"><ellipse rx="4.8" ry="3.1" fill="url(#g200_0)"/><path d="M-3.8 0Q0 1.1 3.8 0" fill="none" stroke="#4c3524" stroke-width="0.59"/></g><g transform="translate(822.9 347.0) rotate(51)"><ellipse rx="4.3" ry="2.9" fill="url(#g200_2)"/><path d="M-3.4 0Q0 1.0 3.4 0" fill="none" stroke="#4c3524" stroke-width="0.59"/></g><g transform="translate(813.8 356.3) rotate(24)"><ellipse rx="4.7" ry="3.6" fill="url(#g200_3)"/><path d="M-3.8 0Q0 1.3 3.8 0" fill="none" stroke="#4c3524" stroke-width="0.59"/></g><g transform="translate(799.5 312.9) rotate(77)"><ellipse rx="3.9" ry="3.4" fill="url(#g200_1)"/><path d="M-3.1 0Q0 1.2 3.1 0" fill="none" stroke="#4c3524" stroke-width="0.59"/></g><g transform="translate(782.5 324.4) rotate(133)"><ellipse rx="4.2" ry="3.1" fill="url(#g200_2)"/><path d="M-3.4 0Q0 1.1 3.4 0" fill="none" stroke="#4c3524" stroke-width="0.59"/></g><g transform="translate(801.6 301.0) rotate(13)"><ellipse rx="4.6" ry="3.5" fill="url(#g200_3)"/><path d="M-3.7 0Q0 1.2 3.7 0" fill="none" stroke="#4c3524" stroke-width="0.59"/></g><g transform="translate(814.2 330.6) rotate(148)"><ellipse rx="3.9" ry="3.1" fill="url(#g200_2)"/><path d="M-3.1 0Q0 1.1 3.1 0" fill="none" stroke="#4c3524" stroke-width="0.59"/></g><g transform="translate(777.5 311.3) rotate(178)"><ellipse rx="4.4" ry="3.4" fill="url(#g200_1)"/><path d="M-3.5 0Q0 1.2 3.5 0" fill="none" stroke="#4c3524" stroke-width="0.59"/></g><g transform="translate(805.3 296.1) rotate(135)"><ellipse rx="4.2" ry="3.3" fill="url(#g200_0)"/><path d="M-3.4 0Q0 1.2 3.4 0" fill="none" stroke="#4c3524" stroke-width="0.59"/></g><g transform="translate(785.2 321.8) rotate(174)"><ellipse rx="4.2" ry="3.4" fill="url(#g200_0)"/><path d="M-3.4 0Q0 1.2 3.4 0" fill="none" stroke="#4c3524" stroke-width="0.59"/></g><g transform="translate(798.4 288.1) rotate(164)"><ellipse rx="4.8" ry="3.5" fill="url(#g200_0)"/><path d="M-3.8 0Q0 1.2 3.8 0" fill="none" stroke="#4c3524" stroke-width="0.59"/></g><g transform="translate(808.6 314.5) rotate(67)"><ellipse rx="4.0" ry="3.2" fill="url(#g200_1)"/><path d="M-3.2 0Q0 1.1 3.2 0" fill="none" stroke="#4c3524" stroke-width="0.59"/></g><g transform="translate(802.0 281.7) rotate(114)"><ellipse rx="4.0" ry="3.2" fill="url(#g200_3)"/><path d="M-3.2 0Q0 1.1 3.2 0" fill="none" stroke="#4c3524" stroke-width="0.59"/></g><g transform="translate(782.2 339.7) rotate(21)"><ellipse rx="4.4" ry="2.9" fill="url(#g200_0)"/><path d="M-3.5 0Q0 1.0 3.5 0" fill="none" stroke="#4c3524" stroke-width="0.59"/></g><g transform="translate(811.2 340.0) rotate(79)"><ellipse rx="4.0" ry="3.3" fill="url(#g200_0)"/><path d="M-3.2 0Q0 1.1 3.2 0" fill="none" stroke="#4c3524" stroke-width="0.59"/></g><g transform="translate(798.2 300.1) rotate(147)"><ellipse rx="4.5" ry="3.4" fill="url(#g200_0)"/><path d="M-3.6 0Q0 1.2 3.6 0" fill="none" stroke="#4c3524" stroke-width="0.59"/></g><g transform="translate(820.9 277.6) rotate(129)"><ellipse rx="4.3" ry="3.5" fill="url(#g200_2)"/><path d="M-3.5 0Q0 1.2 3.5 0" fill="none" stroke="#4c3524" stroke-width="0.59"/></g><g transform="translate(810.2 353.4) rotate(11)"><ellipse rx="4.3" ry="3.2" fill="url(#g200_2)"/><path d="M-3.4 0Q0 1.1 3.4 0" fill="none" stroke="#4c3524" stroke-width="0.59"/></g><g transform="translate(798.5 348.5) rotate(40)"><ellipse rx="4.5" ry="3.1" fill="url(#g200_2)"/><path d="M-3.6 0Q0 1.1 3.6 0" fill="none" stroke="#4c3524" stroke-width="0.59"/></g><g transform="translate(791.7 323.6) rotate(34)"><ellipse rx="4.7" ry="3.1" fill="url(#g200_0)"/><path d="M-3.7 0Q0 1.1 3.7 0" fill="none" stroke="#4c3524" stroke-width="0.59"/></g><g transform="translate(823.9 341.1) rotate(169)"><ellipse rx="4.2" ry="3.2" fill="url(#g200_0)"/><path d="M-3.4 0Q0 1.1 3.4 0" fill="none" stroke="#4c3524" stroke-width="0.59"/></g><g transform="translate(789.8 295.1) rotate(134)"><ellipse rx="3.8" ry="3.3" fill="url(#g200_2)"/><path d="M-3.0 0Q0 1.1 3.0 0" fill="none" stroke="#4c3524" stroke-width="0.59"/></g><g transform="translate(806.3 349.9) rotate(93)"><ellipse rx="4.6" ry="3.4" fill="url(#g200_2)"/><path d="M-3.7 0Q0 1.2 3.7 0" fill="none" stroke="#4c3524" stroke-width="0.59"/></g><g transform="translate(802.5 355.3) rotate(32)"><ellipse rx="4.4" ry="3.6" fill="url(#g200_2)"/><path d="M-3.5 0Q0 1.3 3.5 0" fill="none" stroke="#4c3524" stroke-width="0.59"/></g><g transform="translate(781.5 288.6) rotate(72)"><ellipse rx="4.1" ry="3.1" fill="url(#g200_1)"/><path d="M-3.3 0Q0 1.1 3.3 0" fill="none" stroke="#4c3524" stroke-width="0.59"/></g><g transform="translate(777.5 275.0) rotate(82)"><ellipse rx="3.9" ry="3.1" fill="url(#g200_0)"/><path d="M-3.1 0Q0 1.1 3.1 0" fill="none" stroke="#4c3524" stroke-width="0.59"/></g><g transform="translate(800.5 303.5) rotate(44)"><ellipse rx="4.1" ry="2.9" fill="url(#g200_0)"/><path d="M-3.2 0Q0 1.0 3.2 0" fill="none" stroke="#4c3524" stroke-width="0.59"/></g><g transform="translate(812.6 309.1) rotate(158)"><ellipse rx="4.4" ry="3.4" fill="url(#g200_0)"/><path d="M-3.5 0Q0 1.2 3.5 0" fill="none" stroke="#4c3524" stroke-width="0.59"/></g><g transform="translate(802.2 274.0) rotate(174)"><ellipse rx="4.2" ry="3.5" fill="url(#g200_2)"/><path d="M-3.4 0Q0 1.2 3.4 0" fill="none" stroke="#4c3524" stroke-width="0.59"/></g><g transform="translate(791.9 347.6) rotate(127)"><ellipse rx="4.2" ry="2.9" fill="url(#g200_1)"/><path d="M-3.4 0Q0 1.0 3.4 0" fill="none" stroke="#4c3524" stroke-width="0.59"/></g><g transform="translate(808.0 300.3) rotate(99)"><ellipse rx="4.2" ry="3.5" fill="url(#g200_1)"/><path d="M-3.3 0Q0 1.2 3.3 0" fill="none" stroke="#4c3524" stroke-width="0.59"/></g><g transform="translate(818.0 321.5) rotate(93)"><ellipse rx="4.7" ry="2.9" fill="url(#g200_3)"/><path d="M-3.7 0Q0 1.0 3.7 0" fill="none" stroke="#4c3524" stroke-width="0.59"/></g><g transform="translate(819.5 301.6) rotate(71)"><ellipse rx="4.6" ry="3.1" fill="url(#g200_1)"/><path d="M-3.6 0Q0 1.1 3.6 0" fill="none" stroke="#4c3524" stroke-width="0.59"/></g><g transform="translate(822.8 328.6) rotate(61)"><ellipse rx="3.6" ry="3.4" fill="url(#g200_0)"/><path d="M-2.9 0Q0 1.2 2.9 0" fill="none" stroke="#4c3524" stroke-width="0.59"/></g><g transform="translate(806.3 326.3) rotate(74)"><ellipse rx="4.8" ry="3.4" fill="url(#g200_2)"/><path d="M-3.8 0Q0 1.2 3.8 0" fill="none" stroke="#4c3524" stroke-width="0.59"/></g><g transform="translate(779.8 308.2) rotate(140)"><ellipse rx="4.3" ry="3.5" fill="url(#g200_1)"/><path d="M-3.5 0Q0 1.2 3.5 0" fill="none" stroke="#4c3524" stroke-width="0.59"/></g><g transform="translate(782.6 299.0) rotate(69)"><ellipse rx="4.5" ry="3.5" fill="url(#g200_3)"/><path d="M-3.6 0Q0 1.2 3.6 0" fill="none" stroke="#4c3524" stroke-width="0.59"/></g><g transform="translate(796.0 279.9) rotate(17)"><ellipse rx="3.8" ry="2.9" fill="url(#g200_1)"/><path d="M-3.0 0Q0 1.0 3.0 0" fill="none" stroke="#4c3524" stroke-width="0.59"/></g><g transform="translate(808.8 276.3) rotate(119)"><ellipse rx="4.4" ry="3.3" fill="url(#g200_1)"/><path d="M-3.5 0Q0 1.2 3.5 0" fill="none" stroke="#4c3524" stroke-width="0.59"/></g><g transform="translate(805.5 289.6) rotate(100)"><ellipse rx="4.6" ry="2.8" fill="url(#g200_2)"/><path d="M-3.7 0Q0 1.0 3.7 0" fill="none" stroke="#4c3524" stroke-width="0.59"/></g><g transform="translate(804.6 344.7) rotate(118)"><ellipse rx="3.7" ry="3.5" fill="url(#g200_2)"/><path d="M-2.9 0Q0 1.2 2.9 0" fill="none" stroke="#4c3524" stroke-width="0.59"/></g><g transform="translate(795.5 316.3) rotate(51)"><ellipse rx="4.7" ry="3.1" fill="url(#g200_2)"/><path d="M-3.7 0Q0 1.1 3.7 0" fill="none" stroke="#4c3524" stroke-width="0.59"/></g><g transform="translate(780.7 343.8) rotate(3)"><ellipse rx="4.3" ry="2.9" fill="url(#g200_3)"/><path d="M-3.5 0Q0 1.0 3.5 0" fill="none" stroke="#4c3524" stroke-width="0.59"/></g><g transform="translate(801.9 305.6) rotate(157)"><ellipse rx="4.0" ry="3.4" fill="url(#g200_1)"/><path d="M-3.2 0Q0 1.2 3.2 0" fill="none" stroke="#4c3524" stroke-width="0.59"/></g><g transform="translate(798.4 346.6) rotate(15)"><ellipse rx="3.7" ry="3.0" fill="url(#g200_0)"/><path d="M-2.9 0Q0 1.1 2.9 0" fill="none" stroke="#4c3524" stroke-width="0.59"/></g><g transform="translate(813.6 297.6) rotate(37)"><ellipse rx="4.7" ry="3.6" fill="url(#g200_0)"/><path d="M-3.8 0Q0 1.3 3.8 0" fill="none" stroke="#4c3524" stroke-width="0.59"/></g><g transform="translate(801.3 292.5) rotate(108)"><ellipse rx="4.9" ry="3.3" fill="url(#g200_0)"/><path d="M-3.9 0Q0 1.2 3.9 0" fill="none" stroke="#4c3524" stroke-width="0.59"/></g><g transform="translate(793.9 275.3) rotate(27)"><ellipse rx="4.1" ry="3.5" fill="url(#g200_2)"/><path d="M-3.3 0Q0 1.2 3.3 0" fill="none" stroke="#4c3524" stroke-width="0.59"/></g><g transform="translate(812.5 296.1) rotate(124)"><ellipse rx="4.7" ry="3.3" fill="url(#g200_1)"/><path d="M-3.8 0Q0 1.2 3.8 0" fill="none" stroke="#4c3524" stroke-width="0.59"/></g><g transform="translate(793.7 340.5) rotate(179)"><ellipse rx="4.1" ry="2.9" fill="url(#g200_1)"/><path d="M-3.3 0Q0 1.0 3.3 0" fill="none" stroke="#4c3524" stroke-width="0.59"/></g><g transform="translate(785.5 330.7) rotate(162)"><ellipse rx="4.5" ry="2.9" fill="url(#g200_3)"/><path d="M-3.6 0Q0 1.0 3.6 0" fill="none" stroke="#4c3524" stroke-width="0.59"/></g><g transform="translate(809.1 328.3) rotate(179)"><ellipse rx="4.2" ry="3.1" fill="url(#g200_3)"/><path d="M-3.3 0Q0 1.1 3.3 0" fill="none" stroke="#4c3524" stroke-width="0.59"/></g><g transform="translate(786.1 306.2) rotate(135)"><ellipse rx="4.7" ry="2.8" fill="url(#g200_2)"/><path d="M-3.8 0Q0 1.0 3.8 0" fill="none" stroke="#4c3524" stroke-width="0.59"/></g><g transform="translate(777.5 321.0) rotate(139)"><ellipse rx="4.8" ry="3.3" fill="url(#g200_1)"/><path d="M-3.8 0Q0 1.1 3.8 0" fill="none" stroke="#4c3524" stroke-width="0.59"/></g><g transform="translate(800.6 339.7) rotate(173)"><ellipse rx="4.8" ry="3.1" fill="url(#g200_1)"/><path d="M-3.9 0Q0 1.1 3.9 0" fill="none" stroke="#4c3524" stroke-width="0.59"/></g><g transform="translate(787.1 274.6) rotate(169)"><ellipse rx="4.1" ry="3.1" fill="url(#g200_0)"/><path d="M-3.2 0Q0 1.1 3.2 0" fill="none" stroke="#4c3524" stroke-width="0.59"/></g><g transform="translate(811.0 316.9) rotate(144)"><ellipse rx="4.8" ry="3.6" fill="url(#g200_3)"/><path d="M-3.9 0Q0 1.2 3.9 0" fill="none" stroke="#4c3524" stroke-width="0.59"/></g><g transform="translate(803.8 314.3) rotate(132)"><ellipse rx="4.8" ry="3.5" fill="url(#g200_2)"/><path d="M-3.8 0Q0 1.2 3.8 0" fill="none" stroke="#4c3524" stroke-width="0.59"/></g><g transform="translate(788.5 332.5) rotate(35)"><ellipse rx="4.0" ry="3.2" fill="url(#g200_2)"/><path d="M-3.2 0Q0 1.1 3.2 0" fill="none" stroke="#4c3524" stroke-width="0.59"/></g><g transform="translate(795.4 276.2) rotate(39)"><ellipse rx="4.5" ry="3.4" fill="url(#g200_3)"/><path d="M-3.6 0Q0 1.2 3.6 0" fill="none" stroke="#4c3524" stroke-width="0.59"/></g><g transform="translate(797.3 356.8) rotate(167)"><ellipse rx="4.7" ry="3.2" fill="url(#g200_2)"/><path d="M-3.8 0Q0 1.1 3.8 0" fill="none" stroke="#4c3524" stroke-width="0.59"/></g><g transform="translate(814.3 309.0) rotate(112)"><ellipse rx="4.3" ry="3.6" fill="url(#g200_0)"/><path d="M-3.5 0Q0 1.3 3.5 0" fill="none" stroke="#4c3524" stroke-width="0.59"/></g><g transform="translate(786.8 349.1) rotate(61)"><ellipse rx="4.1" ry="3.4" fill="url(#g200_1)"/><path d="M-3.3 0Q0 1.2 3.3 0" fill="none" stroke="#4c3524" stroke-width="0.59"/></g><g transform="translate(795.6 323.4) rotate(9)"><ellipse rx="4.1" ry="3.1" fill="url(#g200_1)"/><path d="M-3.3 0Q0 1.1 3.3 0" fill="none" stroke="#4c3524" stroke-width="0.59"/></g><g transform="translate(807.4 347.8) rotate(81)"><ellipse rx="4.1" ry="3.3" fill="url(#g200_3)"/><path d="M-3.2 0Q0 1.1 3.2 0" fill="none" stroke="#4c3524" stroke-width="0.59"/></g><g transform="translate(793.6 320.1) rotate(79)"><ellipse rx="4.5" ry="3.2" fill="url(#g200_3)"/><path d="M-3.6 0Q0 1.1 3.6 0" fill="none" stroke="#4c3524" stroke-width="0.59"/></g><g transform="translate(789.8 336.5) rotate(116)"><ellipse rx="4.7" ry="3.4" fill="url(#g200_2)"/><path d="M-3.8 0Q0 1.2 3.8 0" fill="none" stroke="#4c3524" stroke-width="0.59"/></g><g transform="translate(805.5 328.4) rotate(146)"><ellipse rx="4.0" ry="3.1" fill="url(#g200_0)"/><path d="M-3.2 0Q0 1.1 3.2 0" fill="none" stroke="#4c3524" stroke-width="0.59"/></g><g transform="translate(786.0 344.1) rotate(5)"><ellipse rx="4.5" ry="3.5" fill="url(#g200_1)"/><path d="M-3.6 0Q0 1.2 3.6 0" fill="none" stroke="#4c3524" stroke-width="0.59"/></g><g transform="translate(797.7 309.3) rotate(110)"><ellipse rx="4.2" ry="3.4" fill="url(#g200_3)"/><path d="M-3.3 0Q0 1.2 3.3 0" fill="none" stroke="#4c3524" stroke-width="0.59"/></g><g transform="translate(778.1 328.5) rotate(13)"><ellipse rx="3.9" ry="3.0" fill="url(#g200_2)"/><path d="M-3.1 0Q0 1.0 3.1 0" fill="none" stroke="#4c3524" stroke-width="0.59"/></g><g transform="translate(785.6 282.8) rotate(1)"><ellipse rx="4.1" ry="3.5" fill="url(#g200_0)"/><path d="M-3.3 0Q0 1.2 3.3 0" fill="none" stroke="#4c3524" stroke-width="0.59"/></g><g transform="translate(812.0 345.8) rotate(37)"><ellipse rx="4.1" ry="3.3" fill="url(#g200_3)"/><path d="M-3.3 0Q0 1.2 3.3 0" fill="none" stroke="#4c3524" stroke-width="0.59"/></g><g transform="translate(803.9 318.3) rotate(159)"><ellipse rx="4.8" ry="3.4" fill="url(#g200_3)"/><path d="M-3.9 0Q0 1.2 3.9 0" fill="none" stroke="#4c3524" stroke-width="0.59"/></g><g transform="translate(819.8 309.8) rotate(35)"><ellipse rx="4.7" ry="3.1" fill="url(#g200_3)"/><path d="M-3.8 0Q0 1.1 3.8 0" fill="none" stroke="#4c3524" stroke-width="0.59"/></g><g transform="translate(820.5 282.7) rotate(8)"><ellipse rx="4.7" ry="3.5" fill="url(#g200_2)"/><path d="M-3.8 0Q0 1.2 3.8 0" fill="none" stroke="#4c3524" stroke-width="0.59"/></g><g transform="translate(821.7 295.3) rotate(79)"><ellipse rx="4.8" ry="3.4" fill="url(#g200_0)"/><path d="M-3.8 0Q0 1.2 3.8 0" fill="none" stroke="#4c3524" stroke-width="0.59"/></g><g transform="translate(780.6 335.4) rotate(114)"><ellipse rx="4.2" ry="3.5" fill="url(#g200_0)"/><path d="M-3.4 0Q0 1.2 3.4 0" fill="none" stroke="#4c3524" stroke-width="0.59"/></g><g transform="translate(790.1 352.3) rotate(160)"><ellipse rx="3.8" ry="3.4" fill="url(#g200_2)"/><path d="M-3.0 0Q0 1.2 3.0 0" fill="none" stroke="#4c3524" stroke-width="0.59"/></g><g transform="translate(784.5 314.1) rotate(35)"><ellipse rx="4.8" ry="2.8" fill="url(#g200_1)"/><path d="M-3.9 0Q0 1.0 3.9 0" fill="none" stroke="#4c3524" stroke-width="0.59"/></g><g transform="translate(792.5 327.8) rotate(47)"><ellipse rx="4.1" ry="3.0" fill="url(#g200_0)"/><path d="M-3.3 0Q0 1.1 3.3 0" fill="none" stroke="#4c3524" stroke-width="0.59"/></g><g transform="translate(797.2 292.4) rotate(60)"><ellipse rx="4.0" ry="3.2" fill="url(#g200_2)"/><path d="M-3.2 0Q0 1.1 3.2 0" fill="none" stroke="#4c3524" stroke-width="0.59"/></g><g transform="translate(815.2 311.6) rotate(54)"><ellipse rx="4.7" ry="3.0" fill="url(#g200_1)"/><path d="M-3.8 0Q0 1.0 3.8 0" fill="none" stroke="#4c3524" stroke-width="0.59"/></g><g transform="translate(785.2 294.0) rotate(175)"><ellipse rx="4.5" ry="3.4" fill="url(#g200_3)"/><path d="M-3.6 0Q0 1.2 3.6 0" fill="none" stroke="#4c3524" stroke-width="0.59"/></g><g transform="translate(819.9 288.2) rotate(117)"><ellipse rx="3.7" ry="3.5" fill="url(#g200_0)"/><path d="M-2.9 0Q0 1.2 2.9 0" fill="none" stroke="#4c3524" stroke-width="0.59"/></g><g transform="translate(785.1 355.0) rotate(173)"><ellipse rx="4.5" ry="3.3" fill="url(#g200_2)"/><path d="M-3.6 0Q0 1.2 3.6 0" fill="none" stroke="#4c3524" stroke-width="0.59"/></g><g transform="translate(804.2 336.9) rotate(51)"><ellipse rx="4.2" ry="3.3" fill="url(#g200_1)"/><path d="M-3.4 0Q0 1.2 3.4 0" fill="none" stroke="#4c3524" stroke-width="0.59"/></g><g transform="translate(793.7 293.5) rotate(74)"><ellipse rx="3.7" ry="3.3" fill="url(#g200_2)"/><path d="M-2.9 0Q0 1.2 2.9 0" fill="none" stroke="#4c3524" stroke-width="0.59"/></g><g transform="translate(785.4 300.4) rotate(104)"><ellipse rx="4.3" ry="3.6" fill="url(#g200_0)"/><path d="M-3.4 0Q0 1.3 3.4 0" fill="none" stroke="#4c3524" stroke-width="0.59"/></g><g transform="translate(811.9 281.2) rotate(166)"><ellipse rx="4.6" ry="3.2" fill="url(#g200_2)"/><path d="M-3.7 0Q0 1.1 3.7 0" fill="none" stroke="#4c3524" stroke-width="0.59"/></g><g transform="translate(790.6 288.4) rotate(124)"><ellipse rx="3.8" ry="3.2" fill="url(#g200_0)"/><path d="M-3.0 0Q0 1.1 3.0 0" fill="none" stroke="#4c3524" stroke-width="0.59"/></g><g transform="translate(782.3 301.8) rotate(12)"><ellipse rx="4.4" ry="3.4" fill="url(#g200_1)"/><path d="M-3.5 0Q0 1.2 3.5 0" fill="none" stroke="#4c3524" stroke-width="0.59"/></g><g transform="translate(817.6 302.6) rotate(18)"><ellipse rx="4.8" ry="3.2" fill="url(#g200_2)"/><path d="M-3.9 0Q0 1.1 3.9 0" fill="none" stroke="#4c3524" stroke-width="0.59"/></g><g transform="translate(794.0 312.0) rotate(150)"><ellipse rx="4.6" ry="3.4" fill="url(#g200_2)"/><path d="M-3.7 0Q0 1.2 3.7 0" fill="none" stroke="#4c3524" stroke-width="0.59"/></g><g transform="translate(793.6 306.0) rotate(152)"><ellipse rx="4.3" ry="2.8" fill="url(#g200_0)"/><path d="M-3.4 0Q0 1.0 3.4 0" fill="none" stroke="#4c3524" stroke-width="0.59"/></g><g transform="translate(817.7 279.7) rotate(131)"><ellipse rx="4.6" ry="3.1" fill="url(#g200_2)"/><path d="M-3.7 0Q0 1.1 3.7 0" fill="none" stroke="#4c3524" stroke-width="0.59"/></g><g transform="translate(803.0 337.9) rotate(158)"><ellipse rx="4.0" ry="2.8" fill="url(#g200_2)"/><path d="M-3.2 0Q0 1.0 3.2 0" fill="none" stroke="#4c3524" stroke-width="0.59"/></g><g transform="translate(814.1 318.0) rotate(158)"><ellipse rx="4.8" ry="3.5" fill="url(#g200_1)"/><path d="M-3.8 0Q0 1.2 3.8 0" fill="none" stroke="#4c3524" stroke-width="0.59"/></g><g transform="translate(820.2 355.3) rotate(83)"><ellipse rx="4.3" ry="3.1" fill="url(#g200_0)"/><path d="M-3.4 0Q0 1.1 3.4 0" fill="none" stroke="#4c3524" stroke-width="0.59"/></g><g transform="translate(822.8 351.6) rotate(158)"><ellipse rx="4.9" ry="3.0" fill="url(#g200_2)"/><path d="M-3.9 0Q0 1.0 3.9 0" fill="none" stroke="#4c3524" stroke-width="0.59"/></g><g transform="translate(815.2 344.6) rotate(31)"><ellipse rx="4.1" ry="3.2" fill="url(#g200_0)"/><path d="M-3.3 0Q0 1.1 3.3 0" fill="none" stroke="#4c3524" stroke-width="0.59"/></g><g transform="translate(824.6 316.1) rotate(87)"><ellipse rx="4.0" ry="3.5" fill="url(#g200_3)"/><path d="M-3.2 0Q0 1.2 3.2 0" fill="none" stroke="#4c3524" stroke-width="0.59"/></g><g transform="translate(814.2 352.2) rotate(95)"><ellipse rx="3.8" ry="3.0" fill="url(#g200_1)"/><path d="M-3.1 0Q0 1.0 3.1 0" fill="none" stroke="#4c3524" stroke-width="0.59"/></g><g transform="translate(787.4 318.4) rotate(72)"><ellipse rx="3.8" ry="3.6" fill="url(#g200_1)"/><path d="M-3.0 0Q0 1.3 3.0 0" fill="none" stroke="#4c3524" stroke-width="0.59"/></g><g transform="translate(822.8 313.5) rotate(130)"><ellipse rx="4.2" ry="3.3" fill="url(#g200_0)"/><path d="M-3.3 0Q0 1.1 3.3 0" fill="none" stroke="#4c3524" stroke-width="0.59"/></g><g transform="translate(782.1 292.6) rotate(2)"><ellipse rx="4.1" ry="2.8" fill="url(#g200_0)"/><path d="M-3.3 0Q0 1.0 3.3 0" fill="none" stroke="#4c3524" stroke-width="0.59"/></g><g transform="translate(817.0 336.1) rotate(76)"><ellipse rx="4.2" ry="3.2" fill="url(#g200_2)"/><path d="M-3.4 0Q0 1.1 3.4 0" fill="none" stroke="#4c3524" stroke-width="0.59"/></g><g transform="translate(809.8 289.7) rotate(177)"><ellipse rx="4.2" ry="3.6" fill="url(#g200_1)"/><path d="M-3.3 0Q0 1.3 3.3 0" fill="none" stroke="#4c3524" stroke-width="0.59"/></g><g transform="translate(819.9 291.5) rotate(43)"><ellipse rx="4.6" ry="3.2" fill="url(#g200_0)"/><path d="M-3.7 0Q0 1.1 3.7 0" fill="none" stroke="#4c3524" stroke-width="0.59"/></g><g transform="translate(780.9 356.8) rotate(6)"><ellipse rx="4.0" ry="3.6" fill="url(#g200_1)"/><path d="M-3.2 0Q0 1.3 3.2 0" fill="none" stroke="#4c3524" stroke-width="0.59"/></g><g transform="translate(777.7 348.1) rotate(150)"><ellipse rx="3.8" ry="2.9" fill="url(#g200_2)"/><path d="M-3.1 0Q0 1.0 3.1 0" fill="none" stroke="#4c3524" stroke-width="0.59"/></g><g transform="translate(814.9 289.1) rotate(95)"><ellipse rx="4.0" ry="3.6" fill="url(#g200_0)"/><path d="M-3.2 0Q0 1.3 3.2 0" fill="none" stroke="#4c3524" stroke-width="0.59"/></g><g transform="translate(812.1 332.3) rotate(142)"><ellipse rx="4.8" ry="3.3" fill="url(#g200_0)"/><path d="M-3.9 0Q0 1.2 3.9 0" fill="none" stroke="#4c3524" stroke-width="0.59"/></g><g transform="translate(786.8 296.9) rotate(13)"><ellipse rx="4.4" ry="3.3" fill="url(#g200_3)"/><path d="M-3.5 0Q0 1.2 3.5 0" fill="none" stroke="#4c3524" stroke-width="0.59"/></g><g transform="translate(789.4 305.2) rotate(173)"><ellipse rx="3.7" ry="3.2" fill="url(#g200_3)"/><path d="M-2.9 0Q0 1.1 2.9 0" fill="none" stroke="#4c3524" stroke-width="0.59"/></g><g transform="translate(811.1 323.3) rotate(29)"><ellipse rx="3.7" ry="3.1" fill="url(#g200_2)"/><path d="M-3.0 0Q0 1.1 3.0 0" fill="none" stroke="#4c3524" stroke-width="0.59"/></g><g transform="translate(816.6 342.3) rotate(56)"><ellipse rx="4.6" ry="2.8" fill="url(#g200_0)"/><path d="M-3.7 0Q0 1.0 3.7 0" fill="none" stroke="#4c3524" stroke-width="0.59"/></g><g transform="translate(799.7 329.1) rotate(102)"><ellipse rx="4.7" ry="2.9" fill="url(#g200_2)"/><path d="M-3.8 0Q0 1.0 3.8 0" fill="none" stroke="#4c3524" stroke-width="0.59"/></g><g transform="translate(800.4 335.6) rotate(5)"><ellipse rx="4.0" ry="3.5" fill="url(#g200_1)"/><path d="M-3.2 0Q0 1.2 3.2 0" fill="none" stroke="#4c3524" stroke-width="0.59"/></g><g transform="translate(823.2 325.0) rotate(59)"><ellipse rx="4.7" ry="3.6" fill="url(#g200_1)"/><path d="M-3.8 0Q0 1.3 3.8 0" fill="none" stroke="#4c3524" stroke-width="0.59"/></g><g transform="translate(785.6 340.2) rotate(133)"><ellipse rx="4.2" ry="3.6" fill="url(#g200_3)"/><path d="M-3.4 0Q0 1.3 3.4 0" fill="none" stroke="#4c3524" stroke-width="0.59"/></g></g><g clip-path="url(#cl201)"><rect x="822.0" y="276.0" width="43.0" height="79.0" fill="#1e130d"/><g transform="translate(830.2 291.4) rotate(8)"><ellipse rx="4.8" ry="3.1" fill="url(#g201_2)"/><path d="M-3.8 0Q0 1.1 3.8 0" fill="none" stroke="#281b13" stroke-width="0.59"/></g><g transform="translate(823.6 291.0) rotate(97)"><ellipse rx="3.8" ry="3.1" fill="url(#g201_0)"/><path d="M-3.0 0Q0 1.1 3.0 0" fill="none" stroke="#281b13" stroke-width="0.59"/></g><g transform="translate(849.6 292.3) rotate(9)"><ellipse rx="3.9" ry="3.1" fill="url(#g201_3)"/><path d="M-3.1 0Q0 1.1 3.1 0" fill="none" stroke="#281b13" stroke-width="0.59"/></g><g transform="translate(844.2 336.6) rotate(144)"><ellipse rx="4.2" ry="2.8" fill="url(#g201_1)"/><path d="M-3.4 0Q0 1.0 3.4 0" fill="none" stroke="#281b13" stroke-width="0.59"/></g><g transform="translate(823.6 299.1) rotate(51)"><ellipse rx="3.8" ry="3.1" fill="url(#g201_1)"/><path d="M-3.0 0Q0 1.1 3.0 0" fill="none" stroke="#281b13" stroke-width="0.59"/></g><g transform="translate(827.8 348.1) rotate(68)"><ellipse rx="4.8" ry="3.0" fill="url(#g201_0)"/><path d="M-3.8 0Q0 1.0 3.8 0" fill="none" stroke="#281b13" stroke-width="0.59"/></g><g transform="translate(866.7 345.5) rotate(62)"><ellipse rx="4.0" ry="3.2" fill="url(#g201_2)"/><path d="M-3.2 0Q0 1.1 3.2 0" fill="none" stroke="#281b13" stroke-width="0.59"/></g><g transform="translate(869.0 300.1) rotate(107)"><ellipse rx="4.4" ry="3.1" fill="url(#g201_0)"/><path d="M-3.6 0Q0 1.1 3.6 0" fill="none" stroke="#281b13" stroke-width="0.59"/></g><g transform="translate(831.7 340.8) rotate(129)"><ellipse rx="4.7" ry="3.5" fill="url(#g201_2)"/><path d="M-3.8 0Q0 1.2 3.8 0" fill="none" stroke="#281b13" stroke-width="0.59"/></g><g transform="translate(855.2 335.7) rotate(19)"><ellipse rx="4.2" ry="2.9" fill="url(#g201_3)"/><path d="M-3.4 0Q0 1.0 3.4 0" fill="none" stroke="#281b13" stroke-width="0.59"/></g><g transform="translate(835.7 352.0) rotate(126)"><ellipse rx="4.5" ry="3.0" fill="url(#g201_3)"/><path d="M-3.6 0Q0 1.1 3.6 0" fill="none" stroke="#281b13" stroke-width="0.59"/></g><g transform="translate(838.0 302.5) rotate(108)"><ellipse rx="4.5" ry="3.4" fill="url(#g201_3)"/><path d="M-3.6 0Q0 1.2 3.6 0" fill="none" stroke="#281b13" stroke-width="0.59"/></g><g transform="translate(823.8 325.5) rotate(174)"><ellipse rx="4.1" ry="3.1" fill="url(#g201_3)"/><path d="M-3.3 0Q0 1.1 3.3 0" fill="none" stroke="#281b13" stroke-width="0.59"/></g><g transform="translate(852.2 313.5) rotate(58)"><ellipse rx="3.7" ry="3.5" fill="url(#g201_2)"/><path d="M-2.9 0Q0 1.2 2.9 0" fill="none" stroke="#281b13" stroke-width="0.59"/></g><g transform="translate(853.8 289.5) rotate(138)"><ellipse rx="3.7" ry="3.2" fill="url(#g201_3)"/><path d="M-2.9 0Q0 1.1 2.9 0" fill="none" stroke="#281b13" stroke-width="0.59"/></g><g transform="translate(867.4 340.8) rotate(135)"><ellipse rx="4.3" ry="2.9" fill="url(#g201_1)"/><path d="M-3.5 0Q0 1.0 3.5 0" fill="none" stroke="#281b13" stroke-width="0.59"/></g><g transform="translate(827.0 322.9) rotate(32)"><ellipse rx="4.2" ry="3.2" fill="url(#g201_1)"/><path d="M-3.4 0Q0 1.1 3.4 0" fill="none" stroke="#281b13" stroke-width="0.59"/></g><g transform="translate(833.7 334.2) rotate(8)"><ellipse rx="3.6" ry="3.0" fill="url(#g201_1)"/><path d="M-2.9 0Q0 1.1 2.9 0" fill="none" stroke="#281b13" stroke-width="0.59"/></g><g transform="translate(822.5 329.3) rotate(63)"><ellipse rx="3.8" ry="3.4" fill="url(#g201_0)"/><path d="M-3.1 0Q0 1.2 3.1 0" fill="none" stroke="#281b13" stroke-width="0.59"/></g><g transform="translate(825.8 338.8) rotate(9)"><ellipse rx="3.8" ry="3.1" fill="url(#g201_3)"/><path d="M-3.0 0Q0 1.1 3.0 0" fill="none" stroke="#281b13" stroke-width="0.59"/></g><g transform="translate(852.0 318.6) rotate(144)"><ellipse rx="3.9" ry="2.9" fill="url(#g201_1)"/><path d="M-3.2 0Q0 1.0 3.2 0" fill="none" stroke="#281b13" stroke-width="0.59"/></g><g transform="translate(830.5 312.4) rotate(39)"><ellipse rx="3.8" ry="3.6" fill="url(#g201_0)"/><path d="M-3.0 0Q0 1.2 3.0 0" fill="none" stroke="#281b13" stroke-width="0.59"/></g><g transform="translate(844.1 350.5) rotate(176)"><ellipse rx="4.2" ry="3.6" fill="url(#g201_3)"/><path d="M-3.4 0Q0 1.3 3.4 0" fill="none" stroke="#281b13" stroke-width="0.59"/></g><g transform="translate(851.9 282.5) rotate(43)"><ellipse rx="4.9" ry="3.3" fill="url(#g201_0)"/><path d="M-3.9 0Q0 1.1 3.9 0" fill="none" stroke="#281b13" stroke-width="0.59"/></g><g transform="translate(824.6 352.0) rotate(156)"><ellipse rx="3.8" ry="3.5" fill="url(#g201_3)"/><path d="M-3.0 0Q0 1.2 3.0 0" fill="none" stroke="#281b13" stroke-width="0.59"/></g><g transform="translate(834.9 322.5) rotate(157)"><ellipse rx="4.0" ry="3.6" fill="url(#g201_3)"/><path d="M-3.2 0Q0 1.3 3.2 0" fill="none" stroke="#281b13" stroke-width="0.59"/></g><g transform="translate(850.4 331.9) rotate(63)"><ellipse rx="4.4" ry="3.3" fill="url(#g201_1)"/><path d="M-3.5 0Q0 1.2 3.5 0" fill="none" stroke="#281b13" stroke-width="0.59"/></g><g transform="translate(847.6 288.2) rotate(99)"><ellipse rx="4.7" ry="3.0" fill="url(#g201_0)"/><path d="M-3.8 0Q0 1.0 3.8 0" fill="none" stroke="#281b13" stroke-width="0.59"/></g><g transform="translate(839.4 311.2) rotate(122)"><ellipse rx="3.7" ry="2.8" fill="url(#g201_1)"/><path d="M-2.9 0Q0 1.0 2.9 0" fill="none" stroke="#281b13" stroke-width="0.59"/></g><g transform="translate(857.7 286.6) rotate(171)"><ellipse rx="4.2" ry="2.9" fill="url(#g201_2)"/><path d="M-3.4 0Q0 1.0 3.4 0" fill="none" stroke="#281b13" stroke-width="0.59"/></g><g transform="translate(854.9 345.4) rotate(116)"><ellipse rx="4.0" ry="3.4" fill="url(#g201_0)"/><path d="M-3.2 0Q0 1.2 3.2 0" fill="none" stroke="#281b13" stroke-width="0.59"/></g><g transform="translate(856.8 302.0) rotate(119)"><ellipse rx="4.4" ry="3.2" fill="url(#g201_0)"/><path d="M-3.6 0Q0 1.1 3.6 0" fill="none" stroke="#281b13" stroke-width="0.59"/></g><g transform="translate(854.8 341.1) rotate(148)"><ellipse rx="4.5" ry="3.0" fill="url(#g201_0)"/><path d="M-3.6 0Q0 1.1 3.6 0" fill="none" stroke="#281b13" stroke-width="0.59"/></g><g transform="translate(825.1 333.1) rotate(68)"><ellipse rx="4.4" ry="3.4" fill="url(#g201_1)"/><path d="M-3.5 0Q0 1.2 3.5 0" fill="none" stroke="#281b13" stroke-width="0.59"/></g><g transform="translate(843.1 319.5) rotate(141)"><ellipse rx="3.6" ry="3.1" fill="url(#g201_2)"/><path d="M-2.9 0Q0 1.1 2.9 0" fill="none" stroke="#281b13" stroke-width="0.59"/></g><g transform="translate(860.8 276.4) rotate(139)"><ellipse rx="4.4" ry="3.6" fill="url(#g201_1)"/><path d="M-3.5 0Q0 1.3 3.5 0" fill="none" stroke="#281b13" stroke-width="0.59"/></g><g transform="translate(840.1 355.0) rotate(63)"><ellipse rx="4.7" ry="3.1" fill="url(#g201_2)"/><path d="M-3.8 0Q0 1.1 3.8 0" fill="none" stroke="#281b13" stroke-width="0.59"/></g><g transform="translate(824.5 286.0) rotate(36)"><ellipse rx="4.2" ry="3.4" fill="url(#g201_0)"/><path d="M-3.3 0Q0 1.2 3.3 0" fill="none" stroke="#281b13" stroke-width="0.59"/></g><g transform="translate(821.6 306.5) rotate(126)"><ellipse rx="3.9" ry="2.9" fill="url(#g201_2)"/><path d="M-3.1 0Q0 1.0 3.1 0" fill="none" stroke="#281b13" stroke-width="0.59"/></g><g transform="translate(828.9 328.2) rotate(127)"><ellipse rx="4.2" ry="3.5" fill="url(#g201_0)"/><path d="M-3.3 0Q0 1.2 3.3 0" fill="none" stroke="#281b13" stroke-width="0.59"/></g><g transform="translate(821.7 312.6) rotate(111)"><ellipse rx="4.5" ry="3.4" fill="url(#g201_2)"/><path d="M-3.6 0Q0 1.2 3.6 0" fill="none" stroke="#281b13" stroke-width="0.59"/></g><g transform="translate(820.9 320.7) rotate(53)"><ellipse rx="3.8" ry="3.6" fill="url(#g201_2)"/><path d="M-3.0 0Q0 1.2 3.0 0" fill="none" stroke="#281b13" stroke-width="0.59"/></g><g transform="translate(832.2 295.2) rotate(175)"><ellipse rx="4.1" ry="2.8" fill="url(#g201_0)"/><path d="M-3.3 0Q0 1.0 3.3 0" fill="none" stroke="#281b13" stroke-width="0.59"/></g><g transform="translate(856.2 351.6) rotate(99)"><ellipse rx="4.2" ry="3.1" fill="url(#g201_3)"/><path d="M-3.4 0Q0 1.1 3.4 0" fill="none" stroke="#281b13" stroke-width="0.59"/></g><g transform="translate(851.7 310.3) rotate(47)"><ellipse rx="3.8" ry="2.8" fill="url(#g201_0)"/><path d="M-3.0 0Q0 1.0 3.0 0" fill="none" stroke="#281b13" stroke-width="0.59"/></g><g transform="translate(843.4 282.7) rotate(10)"><ellipse rx="4.0" ry="3.0" fill="url(#g201_1)"/><path d="M-3.2 0Q0 1.0 3.2 0" fill="none" stroke="#281b13" stroke-width="0.59"/></g><g transform="translate(850.0 313.6) rotate(99)"><ellipse rx="4.6" ry="3.6" fill="url(#g201_3)"/><path d="M-3.7 0Q0 1.2 3.7 0" fill="none" stroke="#281b13" stroke-width="0.59"/></g><g transform="translate(839.2 296.1) rotate(60)"><ellipse rx="4.9" ry="3.1" fill="url(#g201_3)"/><path d="M-3.9 0Q0 1.1 3.9 0" fill="none" stroke="#281b13" stroke-width="0.59"/></g><g transform="translate(862.0 297.1) rotate(53)"><ellipse rx="4.3" ry="2.9" fill="url(#g201_0)"/><path d="M-3.5 0Q0 1.0 3.5 0" fill="none" stroke="#281b13" stroke-width="0.59"/></g><g transform="translate(821.7 304.5) rotate(34)"><ellipse rx="4.6" ry="3.2" fill="url(#g201_3)"/><path d="M-3.7 0Q0 1.1 3.7 0" fill="none" stroke="#281b13" stroke-width="0.59"/></g><g transform="translate(837.1 297.5) rotate(66)"><ellipse rx="4.5" ry="3.4" fill="url(#g201_2)"/><path d="M-3.6 0Q0 1.2 3.6 0" fill="none" stroke="#281b13" stroke-width="0.59"/></g><g transform="translate(848.3 316.5) rotate(15)"><ellipse rx="4.5" ry="3.1" fill="url(#g201_1)"/><path d="M-3.6 0Q0 1.1 3.6 0" fill="none" stroke="#281b13" stroke-width="0.59"/></g><g transform="translate(846.4 322.7) rotate(58)"><ellipse rx="3.7" ry="3.4" fill="url(#g201_2)"/><path d="M-3.0 0Q0 1.2 3.0 0" fill="none" stroke="#281b13" stroke-width="0.59"/></g><g transform="translate(860.5 289.7) rotate(95)"><ellipse rx="4.7" ry="3.1" fill="url(#g201_2)"/><path d="M-3.8 0Q0 1.1 3.8 0" fill="none" stroke="#281b13" stroke-width="0.59"/></g><g transform="translate(845.7 328.3) rotate(157)"><ellipse rx="3.9" ry="3.0" fill="url(#g201_2)"/><path d="M-3.1 0Q0 1.0 3.1 0" fill="none" stroke="#281b13" stroke-width="0.59"/></g><g transform="translate(866.3 348.9) rotate(66)"><ellipse rx="4.4" ry="3.1" fill="url(#g201_2)"/><path d="M-3.5 0Q0 1.1 3.5 0" fill="none" stroke="#281b13" stroke-width="0.59"/></g><g transform="translate(850.8 304.8) rotate(41)"><ellipse rx="3.8" ry="3.2" fill="url(#g201_0)"/><path d="M-3.1 0Q0 1.1 3.1 0" fill="none" stroke="#281b13" stroke-width="0.59"/></g><g transform="translate(846.9 337.7) rotate(36)"><ellipse rx="4.8" ry="3.4" fill="url(#g201_3)"/><path d="M-3.8 0Q0 1.2 3.8 0" fill="none" stroke="#281b13" stroke-width="0.59"/></g><g transform="translate(838.1 356.6) rotate(23)"><ellipse rx="3.9" ry="2.9" fill="url(#g201_0)"/><path d="M-3.1 0Q0 1.0 3.1 0" fill="none" stroke="#281b13" stroke-width="0.59"/></g><g transform="translate(863.9 317.2) rotate(121)"><ellipse rx="3.6" ry="2.9" fill="url(#g201_0)"/><path d="M-2.9 0Q0 1.0 2.9 0" fill="none" stroke="#281b13" stroke-width="0.59"/></g><g transform="translate(859.4 333.1) rotate(99)"><ellipse rx="4.8" ry="3.3" fill="url(#g201_0)"/><path d="M-3.8 0Q0 1.1 3.8 0" fill="none" stroke="#281b13" stroke-width="0.59"/></g><g transform="translate(846.2 351.0) rotate(17)"><ellipse rx="4.2" ry="2.8" fill="url(#g201_0)"/><path d="M-3.3 0Q0 1.0 3.3 0" fill="none" stroke="#281b13" stroke-width="0.59"/></g><g transform="translate(827.4 287.5) rotate(157)"><ellipse rx="3.8" ry="3.2" fill="url(#g201_3)"/><path d="M-3.0 0Q0 1.1 3.0 0" fill="none" stroke="#281b13" stroke-width="0.59"/></g><g transform="translate(846.7 310.5) rotate(85)"><ellipse rx="3.7" ry="3.1" fill="url(#g201_3)"/><path d="M-3.0 0Q0 1.1 3.0 0" fill="none" stroke="#281b13" stroke-width="0.59"/></g><g transform="translate(843.2 343.1) rotate(122)"><ellipse rx="3.7" ry="3.6" fill="url(#g201_3)"/><path d="M-2.9 0Q0 1.2 2.9 0" fill="none" stroke="#281b13" stroke-width="0.59"/></g><g transform="translate(844.1 285.4) rotate(141)"><ellipse rx="4.4" ry="3.0" fill="url(#g201_3)"/><path d="M-3.5 0Q0 1.1 3.5 0" fill="none" stroke="#281b13" stroke-width="0.59"/></g><g transform="translate(834.5 280.1) rotate(177)"><ellipse rx="4.2" ry="3.2" fill="url(#g201_1)"/><path d="M-3.3 0Q0 1.1 3.3 0" fill="none" stroke="#281b13" stroke-width="0.59"/></g><g transform="translate(859.3 303.8) rotate(116)"><ellipse rx="4.5" ry="3.0" fill="url(#g201_2)"/><path d="M-3.6 0Q0 1.1 3.6 0" fill="none" stroke="#281b13" stroke-width="0.59"/></g><g transform="translate(866.7 275.0) rotate(8)"><ellipse rx="4.4" ry="3.3" fill="url(#g201_3)"/><path d="M-3.5 0Q0 1.2 3.5 0" fill="none" stroke="#281b13" stroke-width="0.59"/></g><g transform="translate(860.6 308.7) rotate(35)"><ellipse rx="4.8" ry="2.9" fill="url(#g201_3)"/><path d="M-3.8 0Q0 1.0 3.8 0" fill="none" stroke="#281b13" stroke-width="0.59"/></g><g transform="translate(831.2 355.9) rotate(141)"><ellipse rx="4.8" ry="3.0" fill="url(#g201_0)"/><path d="M-3.8 0Q0 1.0 3.8 0" fill="none" stroke="#281b13" stroke-width="0.59"/></g><g transform="translate(853.8 354.3) rotate(65)"><ellipse rx="4.4" ry="2.9" fill="url(#g201_3)"/><path d="M-3.5 0Q0 1.0 3.5 0" fill="none" stroke="#281b13" stroke-width="0.59"/></g><g transform="translate(830.6 347.4) rotate(117)"><ellipse rx="3.7" ry="3.4" fill="url(#g201_0)"/><path d="M-2.9 0Q0 1.2 2.9 0" fill="none" stroke="#281b13" stroke-width="0.59"/></g><g transform="translate(864.6 329.6) rotate(91)"><ellipse rx="4.1" ry="3.0" fill="url(#g201_2)"/><path d="M-3.3 0Q0 1.1 3.3 0" fill="none" stroke="#281b13" stroke-width="0.59"/></g><g transform="translate(868.4 289.4) rotate(141)"><ellipse rx="4.1" ry="3.5" fill="url(#g201_2)"/><path d="M-3.3 0Q0 1.2 3.3 0" fill="none" stroke="#281b13" stroke-width="0.59"/></g><g transform="translate(844.2 340.9) rotate(124)"><ellipse rx="3.8" ry="3.3" fill="url(#g201_1)"/><path d="M-3.0 0Q0 1.1 3.0 0" fill="none" stroke="#281b13" stroke-width="0.59"/></g><g transform="translate(846.3 344.3) rotate(46)"><ellipse rx="3.7" ry="3.5" fill="url(#g201_0)"/><path d="M-3.0 0Q0 1.2 3.0 0" fill="none" stroke="#281b13" stroke-width="0.59"/></g><g transform="translate(836.9 291.5) rotate(154)"><ellipse rx="4.1" ry="3.4" fill="url(#g201_2)"/><path d="M-3.3 0Q0 1.2 3.3 0" fill="none" stroke="#281b13" stroke-width="0.59"/></g><g transform="translate(840.3 292.8) rotate(57)"><ellipse rx="3.9" ry="3.2" fill="url(#g201_0)"/><path d="M-3.2 0Q0 1.1 3.2 0" fill="none" stroke="#281b13" stroke-width="0.59"/></g><g transform="translate(826.9 275.4) rotate(16)"><ellipse rx="4.3" ry="3.2" fill="url(#g201_0)"/><path d="M-3.4 0Q0 1.1 3.4 0" fill="none" stroke="#281b13" stroke-width="0.59"/></g><g transform="translate(858.2 317.6) rotate(75)"><ellipse rx="4.5" ry="3.5" fill="url(#g201_2)"/><path d="M-3.6 0Q0 1.2 3.6 0" fill="none" stroke="#281b13" stroke-width="0.59"/></g><g transform="translate(837.2 277.5) rotate(90)"><ellipse rx="3.7" ry="3.4" fill="url(#g201_1)"/><path d="M-3.0 0Q0 1.2 3.0 0" fill="none" stroke="#281b13" stroke-width="0.59"/></g><g transform="translate(842.5 328.7) rotate(144)"><ellipse rx="4.0" ry="2.9" fill="url(#g201_2)"/><path d="M-3.2 0Q0 1.0 3.2 0" fill="none" stroke="#281b13" stroke-width="0.59"/></g><g transform="translate(859.9 282.0) rotate(122)"><ellipse rx="3.8" ry="3.5" fill="url(#g201_2)"/><path d="M-3.0 0Q0 1.2 3.0 0" fill="none" stroke="#281b13" stroke-width="0.59"/></g><g transform="translate(866.8 307.5) rotate(59)"><ellipse rx="3.7" ry="3.2" fill="url(#g201_1)"/><path d="M-3.0 0Q0 1.1 3.0 0" fill="none" stroke="#281b13" stroke-width="0.59"/></g><g transform="translate(847.0 358.1) rotate(62)"><ellipse rx="4.9" ry="3.2" fill="url(#g201_0)"/><path d="M-3.9 0Q0 1.1 3.9 0" fill="none" stroke="#281b13" stroke-width="0.59"/></g><g transform="translate(856.3 296.8) rotate(155)"><ellipse rx="4.5" ry="3.3" fill="url(#g201_3)"/><path d="M-3.6 0Q0 1.1 3.6 0" fill="none" stroke="#281b13" stroke-width="0.59"/></g><g transform="translate(866.4 315.7) rotate(87)"><ellipse rx="4.0" ry="3.0" fill="url(#g201_0)"/><path d="M-3.2 0Q0 1.0 3.2 0" fill="none" stroke="#281b13" stroke-width="0.59"/></g><g transform="translate(848.1 297.4) rotate(103)"><ellipse rx="4.7" ry="2.9" fill="url(#g201_0)"/><path d="M-3.8 0Q0 1.0 3.8 0" fill="none" stroke="#281b13" stroke-width="0.59"/></g><g transform="translate(861.0 338.3) rotate(173)"><ellipse rx="4.2" ry="3.2" fill="url(#g201_2)"/><path d="M-3.3 0Q0 1.1 3.3 0" fill="none" stroke="#281b13" stroke-width="0.59"/></g><g transform="translate(851.8 329.2) rotate(162)"><ellipse rx="4.4" ry="3.2" fill="url(#g201_0)"/><path d="M-3.5 0Q0 1.1 3.5 0" fill="none" stroke="#281b13" stroke-width="0.59"/></g><g transform="translate(838.5 309.0) rotate(157)"><ellipse rx="3.8" ry="2.9" fill="url(#g201_1)"/><path d="M-3.1 0Q0 1.0 3.1 0" fill="none" stroke="#281b13" stroke-width="0.59"/></g><g transform="translate(858.6 347.9) rotate(102)"><ellipse rx="4.7" ry="3.0" fill="url(#g201_1)"/><path d="M-3.7 0Q0 1.0 3.7 0" fill="none" stroke="#281b13" stroke-width="0.59"/></g><g transform="translate(824.6 280.2) rotate(180)"><ellipse rx="3.7" ry="2.8" fill="url(#g201_2)"/><path d="M-2.9 0Q0 1.0 2.9 0" fill="none" stroke="#281b13" stroke-width="0.59"/></g><g transform="translate(822.5 356.8) rotate(105)"><ellipse rx="3.7" ry="3.1" fill="url(#g201_1)"/><path d="M-3.0 0Q0 1.1 3.0 0" fill="none" stroke="#281b13" stroke-width="0.59"/></g><g transform="translate(827.5 302.0) rotate(59)"><ellipse rx="4.6" ry="3.6" fill="url(#g201_3)"/><path d="M-3.7 0Q0 1.3 3.7 0" fill="none" stroke="#281b13" stroke-width="0.59"/></g><g transform="translate(864.0 303.4) rotate(172)"><ellipse rx="4.9" ry="3.0" fill="url(#g201_1)"/><path d="M-3.9 0Q0 1.1 3.9 0" fill="none" stroke="#281b13" stroke-width="0.59"/></g><g transform="translate(839.3 300.3) rotate(66)"><ellipse rx="4.1" ry="3.4" fill="url(#g201_2)"/><path d="M-3.3 0Q0 1.2 3.3 0" fill="none" stroke="#281b13" stroke-width="0.59"/></g><g transform="translate(829.4 334.9) rotate(62)"><ellipse rx="4.0" ry="3.0" fill="url(#g201_3)"/><path d="M-3.2 0Q0 1.1 3.2 0" fill="none" stroke="#281b13" stroke-width="0.59"/></g><g transform="translate(854.8 292.7) rotate(175)"><ellipse rx="4.1" ry="3.3" fill="url(#g201_3)"/><path d="M-3.2 0Q0 1.2 3.2 0" fill="none" stroke="#281b13" stroke-width="0.59"/></g><g transform="translate(859.9 346.9) rotate(100)"><ellipse rx="3.7" ry="3.4" fill="url(#g201_0)"/><path d="M-3.0 0Q0 1.2 3.0 0" fill="none" stroke="#281b13" stroke-width="0.59"/></g><g transform="translate(821.1 275.6) rotate(21)"><ellipse rx="3.7" ry="3.0" fill="url(#g201_3)"/><path d="M-3.0 0Q0 1.1 3.0 0" fill="none" stroke="#281b13" stroke-width="0.59"/></g><g transform="translate(865.8 294.3) rotate(73)"><ellipse rx="4.5" ry="3.3" fill="url(#g201_1)"/><path d="M-3.6 0Q0 1.2 3.6 0" fill="none" stroke="#281b13" stroke-width="0.59"/></g><g transform="translate(845.5 282.2) rotate(44)"><ellipse rx="3.9" ry="3.6" fill="url(#g201_2)"/><path d="M-3.1 0Q0 1.2 3.1 0" fill="none" stroke="#281b13" stroke-width="0.59"/></g><g transform="translate(837.5 314.4) rotate(108)"><ellipse rx="4.7" ry="3.3" fill="url(#g201_0)"/><path d="M-3.8 0Q0 1.1 3.8 0" fill="none" stroke="#281b13" stroke-width="0.59"/></g><g transform="translate(830.8 318.0) rotate(26)"><ellipse rx="4.1" ry="2.9" fill="url(#g201_1)"/><path d="M-3.3 0Q0 1.0 3.3 0" fill="none" stroke="#281b13" stroke-width="0.59"/></g><g transform="translate(833.6 316.8) rotate(103)"><ellipse rx="4.1" ry="2.9" fill="url(#g201_2)"/><path d="M-3.3 0Q0 1.0 3.3 0" fill="none" stroke="#281b13" stroke-width="0.59"/></g><g transform="translate(867.5 333.7) rotate(68)"><ellipse rx="4.2" ry="2.8" fill="url(#g201_1)"/><path d="M-3.3 0Q0 1.0 3.3 0" fill="none" stroke="#281b13" stroke-width="0.59"/></g><g transform="translate(860.7 331.7) rotate(32)"><ellipse rx="4.8" ry="3.2" fill="url(#g201_3)"/><path d="M-3.8 0Q0 1.1 3.8 0" fill="none" stroke="#281b13" stroke-width="0.59"/></g><g transform="translate(861.4 325.3) rotate(49)"><ellipse rx="3.6" ry="3.1" fill="url(#g201_1)"/><path d="M-2.9 0Q0 1.1 2.9 0" fill="none" stroke="#281b13" stroke-width="0.59"/></g><g transform="translate(868.0 283.3) rotate(109)"><ellipse rx="4.2" ry="3.0" fill="url(#g201_3)"/><path d="M-3.4 0Q0 1.1 3.4 0" fill="none" stroke="#281b13" stroke-width="0.59"/></g><g transform="translate(867.6 323.6) rotate(105)"><ellipse rx="4.5" ry="3.4" fill="url(#g201_2)"/><path d="M-3.6 0Q0 1.2 3.6 0" fill="none" stroke="#281b13" stroke-width="0.59"/></g><g transform="translate(833.2 347.4) rotate(47)"><ellipse rx="3.9" ry="3.3" fill="url(#g201_3)"/><path d="M-3.1 0Q0 1.2 3.1 0" fill="none" stroke="#281b13" stroke-width="0.59"/></g><g transform="translate(856.2 322.9) rotate(114)"><ellipse rx="4.2" ry="3.6" fill="url(#g201_0)"/><path d="M-3.4 0Q0 1.3 3.4 0" fill="none" stroke="#281b13" stroke-width="0.59"/></g><g transform="translate(841.5 321.3) rotate(28)"><ellipse rx="4.3" ry="3.6" fill="url(#g201_3)"/><path d="M-3.4 0Q0 1.3 3.4 0" fill="none" stroke="#281b13" stroke-width="0.59"/></g><g transform="translate(842.5 308.9) rotate(74)"><ellipse rx="4.4" ry="3.2" fill="url(#g201_0)"/><path d="M-3.6 0Q0 1.1 3.6 0" fill="none" stroke="#281b13" stroke-width="0.59"/></g><g transform="translate(831.1 306.7) rotate(109)"><ellipse rx="4.5" ry="3.1" fill="url(#g201_1)"/><path d="M-3.6 0Q0 1.1 3.6 0" fill="none" stroke="#281b13" stroke-width="0.59"/></g><g transform="translate(860.7 314.5) rotate(9)"><ellipse rx="4.2" ry="3.0" fill="url(#g201_3)"/><path d="M-3.4 0Q0 1.1 3.4 0" fill="none" stroke="#281b13" stroke-width="0.59"/></g><g transform="translate(822.9 346.0) rotate(133)"><ellipse rx="4.3" ry="2.8" fill="url(#g201_2)"/><path d="M-3.5 0Q0 1.0 3.5 0" fill="none" stroke="#281b13" stroke-width="0.59"/></g><g transform="translate(862.3 357.9) rotate(0)"><ellipse rx="3.9" ry="3.2" fill="url(#g201_1)"/><path d="M-3.1 0Q0 1.1 3.1 0" fill="none" stroke="#281b13" stroke-width="0.59"/></g><g transform="translate(828.6 280.4) rotate(77)"><ellipse rx="3.9" ry="3.5" fill="url(#g201_3)"/><path d="M-3.1 0Q0 1.2 3.1 0" fill="none" stroke="#281b13" stroke-width="0.59"/></g><g transform="translate(841.8 277.9) rotate(127)"><ellipse rx="4.3" ry="3.1" fill="url(#g201_3)"/><path d="M-3.4 0Q0 1.1 3.4 0" fill="none" stroke="#281b13" stroke-width="0.59"/></g><g transform="translate(836.0 289.1) rotate(142)"><ellipse rx="3.7" ry="3.0" fill="url(#g201_3)"/><path d="M-3.0 0Q0 1.1 3.0 0" fill="none" stroke="#281b13" stroke-width="0.59"/></g><g transform="translate(865.8 354.4) rotate(45)"><ellipse rx="3.8" ry="3.5" fill="url(#g201_1)"/><path d="M-3.0 0Q0 1.2 3.0 0" fill="none" stroke="#281b13" stroke-width="0.59"/></g><g transform="translate(847.8 278.4) rotate(151)"><ellipse rx="3.7" ry="3.2" fill="url(#g201_3)"/><path d="M-3.0 0Q0 1.1 3.0 0" fill="none" stroke="#281b13" stroke-width="0.59"/></g><g transform="translate(854.9 274.6) rotate(138)"><ellipse rx="4.7" ry="3.1" fill="url(#g201_0)"/><path d="M-3.7 0Q0 1.1 3.7 0" fill="none" stroke="#281b13" stroke-width="0.59"/></g><g transform="translate(835.2 340.9) rotate(139)"><ellipse rx="3.6" ry="2.8" fill="url(#g201_3)"/><path d="M-2.9 0Q0 1.0 2.9 0" fill="none" stroke="#281b13" stroke-width="0.59"/></g><g transform="translate(835.1 326.9) rotate(23)"><ellipse rx="4.0" ry="3.3" fill="url(#g201_2)"/><path d="M-3.2 0Q0 1.2 3.2 0" fill="none" stroke="#281b13" stroke-width="0.59"/></g></g><g clip-path="url(#cl202)"><rect x="867.0" y="276.0" width="42.5" height="79.0" fill="#150e0a"/><g transform="translate(912.9 350.2) rotate(177)"><ellipse rx="4.0" ry="2.9" fill="url(#g202_0)"/><path d="M-3.2 0Q0 1.0 3.2 0" fill="none" stroke="#201712" stroke-width="0.59"/></g><g transform="translate(907.1 283.7) rotate(79)"><ellipse rx="4.2" ry="3.3" fill="url(#g202_0)"/><path d="M-3.3 0Q0 1.1 3.3 0" fill="none" stroke="#201712" stroke-width="0.59"/></g><g transform="translate(875.7 354.9) rotate(133)"><ellipse rx="4.2" ry="3.6" fill="url(#g202_0)"/><path d="M-3.3 0Q0 1.3 3.3 0" fill="none" stroke="#201712" stroke-width="0.59"/></g><g transform="translate(865.9 302.1) rotate(6)"><ellipse rx="4.1" ry="2.8" fill="url(#g202_3)"/><path d="M-3.3 0Q0 1.0 3.3 0" fill="none" stroke="#201712" stroke-width="0.59"/></g><g transform="translate(905.6 278.4) rotate(54)"><ellipse rx="4.4" ry="3.1" fill="url(#g202_3)"/><path d="M-3.5 0Q0 1.1 3.5 0" fill="none" stroke="#201712" stroke-width="0.59"/></g><g transform="translate(885.9 290.5) rotate(92)"><ellipse rx="4.2" ry="3.3" fill="url(#g202_0)"/><path d="M-3.3 0Q0 1.1 3.3 0" fill="none" stroke="#201712" stroke-width="0.59"/></g><g transform="translate(913.7 285.7) rotate(169)"><ellipse rx="4.2" ry="3.6" fill="url(#g202_2)"/><path d="M-3.3 0Q0 1.2 3.3 0" fill="none" stroke="#201712" stroke-width="0.59"/></g><g transform="translate(873.8 341.9) rotate(69)"><ellipse rx="3.8" ry="3.1" fill="url(#g202_2)"/><path d="M-3.1 0Q0 1.1 3.1 0" fill="none" stroke="#201712" stroke-width="0.59"/></g><g transform="translate(894.4 306.7) rotate(150)"><ellipse rx="4.7" ry="3.0" fill="url(#g202_3)"/><path d="M-3.8 0Q0 1.0 3.8 0" fill="none" stroke="#201712" stroke-width="0.59"/></g><g transform="translate(895.3 319.4) rotate(114)"><ellipse rx="4.8" ry="3.1" fill="url(#g202_3)"/><path d="M-3.8 0Q0 1.1 3.8 0" fill="none" stroke="#201712" stroke-width="0.59"/></g><g transform="translate(868.0 340.8) rotate(102)"><ellipse rx="4.5" ry="2.9" fill="url(#g202_0)"/><path d="M-3.6 0Q0 1.0 3.6 0" fill="none" stroke="#201712" stroke-width="0.59"/></g><g transform="translate(870.2 357.2) rotate(9)"><ellipse rx="4.0" ry="3.2" fill="url(#g202_1)"/><path d="M-3.2 0Q0 1.1 3.2 0" fill="none" stroke="#201712" stroke-width="0.59"/></g><g transform="translate(881.3 343.2) rotate(102)"><ellipse rx="4.1" ry="3.1" fill="url(#g202_1)"/><path d="M-3.2 0Q0 1.1 3.2 0" fill="none" stroke="#201712" stroke-width="0.59"/></g><g transform="translate(874.8 320.1) rotate(30)"><ellipse rx="4.6" ry="3.1" fill="url(#g202_2)"/><path d="M-3.7 0Q0 1.1 3.7 0" fill="none" stroke="#201712" stroke-width="0.59"/></g><g transform="translate(872.4 299.8) rotate(30)"><ellipse rx="3.9" ry="3.6" fill="url(#g202_3)"/><path d="M-3.1 0Q0 1.2 3.1 0" fill="none" stroke="#201712" stroke-width="0.59"/></g><g transform="translate(891.7 298.4) rotate(95)"><ellipse rx="4.2" ry="3.5" fill="url(#g202_3)"/><path d="M-3.3 0Q0 1.2 3.3 0" fill="none" stroke="#201712" stroke-width="0.59"/></g><g transform="translate(913.5 294.8) rotate(144)"><ellipse rx="4.1" ry="3.5" fill="url(#g202_2)"/><path d="M-3.3 0Q0 1.2 3.3 0" fill="none" stroke="#201712" stroke-width="0.59"/></g><g transform="translate(885.4 280.5) rotate(180)"><ellipse rx="4.6" ry="3.4" fill="url(#g202_0)"/><path d="M-3.7 0Q0 1.2 3.7 0" fill="none" stroke="#201712" stroke-width="0.59"/></g><g transform="translate(908.3 301.3) rotate(70)"><ellipse rx="4.3" ry="3.4" fill="url(#g202_2)"/><path d="M-3.4 0Q0 1.2 3.4 0" fill="none" stroke="#201712" stroke-width="0.59"/></g><g transform="translate(870.0 334.0) rotate(149)"><ellipse rx="3.7" ry="3.4" fill="url(#g202_0)"/><path d="M-3.0 0Q0 1.2 3.0 0" fill="none" stroke="#201712" stroke-width="0.59"/></g><g transform="translate(895.4 286.0) rotate(97)"><ellipse rx="4.5" ry="3.3" fill="url(#g202_3)"/><path d="M-3.6 0Q0 1.2 3.6 0" fill="none" stroke="#201712" stroke-width="0.59"/></g><g transform="translate(882.0 338.6) rotate(88)"><ellipse rx="4.4" ry="2.9" fill="url(#g202_3)"/><path d="M-3.5 0Q0 1.0 3.5 0" fill="none" stroke="#201712" stroke-width="0.59"/></g><g transform="translate(892.6 283.7) rotate(126)"><ellipse rx="4.9" ry="3.2" fill="url(#g202_3)"/><path d="M-3.9 0Q0 1.1 3.9 0" fill="none" stroke="#201712" stroke-width="0.59"/></g><g transform="translate(893.1 291.5) rotate(75)"><ellipse rx="3.7" ry="3.6" fill="url(#g202_1)"/><path d="M-3.0 0Q0 1.3 3.0 0" fill="none" stroke="#201712" stroke-width="0.59"/></g><g transform="translate(904.1 341.0) rotate(108)"><ellipse rx="4.7" ry="3.1" fill="url(#g202_2)"/><path d="M-3.8 0Q0 1.1 3.8 0" fill="none" stroke="#201712" stroke-width="0.59"/></g><g transform="translate(869.5 309.7) rotate(34)"><ellipse rx="4.5" ry="3.0" fill="url(#g202_1)"/><path d="M-3.6 0Q0 1.1 3.6 0" fill="none" stroke="#201712" stroke-width="0.59"/></g><g transform="translate(904.1 355.2) rotate(78)"><ellipse rx="3.9" ry="2.9" fill="url(#g202_1)"/><path d="M-3.1 0Q0 1.0 3.1 0" fill="none" stroke="#201712" stroke-width="0.59"/></g><g transform="translate(878.2 324.4) rotate(29)"><ellipse rx="4.4" ry="3.6" fill="url(#g202_3)"/><path d="M-3.6 0Q0 1.3 3.6 0" fill="none" stroke="#201712" stroke-width="0.59"/></g><g transform="translate(912.1 320.6) rotate(175)"><ellipse rx="3.7" ry="3.1" fill="url(#g202_1)"/><path d="M-3.0 0Q0 1.1 3.0 0" fill="none" stroke="#201712" stroke-width="0.59"/></g><g transform="translate(888.1 308.1) rotate(17)"><ellipse rx="4.6" ry="3.6" fill="url(#g202_2)"/><path d="M-3.7 0Q0 1.3 3.7 0" fill="none" stroke="#201712" stroke-width="0.59"/></g><g transform="translate(911.1 355.6) rotate(56)"><ellipse rx="4.9" ry="3.4" fill="url(#g202_1)"/><path d="M-3.9 0Q0 1.2 3.9 0" fill="none" stroke="#201712" stroke-width="0.59"/></g><g transform="translate(874.4 282.9) rotate(116)"><ellipse rx="3.8" ry="3.6" fill="url(#g202_2)"/><path d="M-3.1 0Q0 1.3 3.1 0" fill="none" stroke="#201712" stroke-width="0.59"/></g><g transform="translate(870.2 323.2) rotate(137)"><ellipse rx="4.4" ry="3.0" fill="url(#g202_0)"/><path d="M-3.5 0Q0 1.0 3.5 0" fill="none" stroke="#201712" stroke-width="0.59"/></g><g transform="translate(884.6 303.2) rotate(127)"><ellipse rx="4.8" ry="3.2" fill="url(#g202_1)"/><path d="M-3.8 0Q0 1.1 3.8 0" fill="none" stroke="#201712" stroke-width="0.59"/></g><g transform="translate(905.2 343.4) rotate(56)"><ellipse rx="4.3" ry="3.2" fill="url(#g202_0)"/><path d="M-3.5 0Q0 1.1 3.5 0" fill="none" stroke="#201712" stroke-width="0.59"/></g><g transform="translate(891.4 350.7) rotate(76)"><ellipse rx="4.5" ry="3.4" fill="url(#g202_3)"/><path d="M-3.6 0Q0 1.2 3.6 0" fill="none" stroke="#201712" stroke-width="0.59"/></g><g transform="translate(878.1 308.3) rotate(9)"><ellipse rx="4.6" ry="3.5" fill="url(#g202_3)"/><path d="M-3.7 0Q0 1.2 3.7 0" fill="none" stroke="#201712" stroke-width="0.59"/></g><g transform="translate(892.2 344.6) rotate(106)"><ellipse rx="4.6" ry="3.0" fill="url(#g202_3)"/><path d="M-3.7 0Q0 1.1 3.7 0" fill="none" stroke="#201712" stroke-width="0.59"/></g><g transform="translate(872.6 332.2) rotate(112)"><ellipse rx="4.0" ry="3.5" fill="url(#g202_2)"/><path d="M-3.2 0Q0 1.2 3.2 0" fill="none" stroke="#201712" stroke-width="0.59"/></g><g transform="translate(870.0 277.3) rotate(121)"><ellipse rx="4.6" ry="3.6" fill="url(#g202_2)"/><path d="M-3.7 0Q0 1.3 3.7 0" fill="none" stroke="#201712" stroke-width="0.59"/></g><g transform="translate(892.1 357.6) rotate(58)"><ellipse rx="4.5" ry="3.0" fill="url(#g202_1)"/><path d="M-3.6 0Q0 1.0 3.6 0" fill="none" stroke="#201712" stroke-width="0.59"/></g><g transform="translate(912.4 335.3) rotate(169)"><ellipse rx="4.5" ry="3.4" fill="url(#g202_0)"/><path d="M-3.6 0Q0 1.2 3.6 0" fill="none" stroke="#201712" stroke-width="0.59"/></g><g transform="translate(883.1 314.2) rotate(121)"><ellipse rx="3.7" ry="2.9" fill="url(#g202_0)"/><path d="M-2.9 0Q0 1.0 2.9 0" fill="none" stroke="#201712" stroke-width="0.59"/></g><g transform="translate(901.3 295.6) rotate(36)"><ellipse rx="4.4" ry="3.0" fill="url(#g202_2)"/><path d="M-3.5 0Q0 1.1 3.5 0" fill="none" stroke="#201712" stroke-width="0.59"/></g><g transform="translate(876.4 348.8) rotate(132)"><ellipse rx="3.9" ry="3.2" fill="url(#g202_0)"/><path d="M-3.1 0Q0 1.1 3.1 0" fill="none" stroke="#201712" stroke-width="0.59"/></g><g transform="translate(873.7 343.4) rotate(115)"><ellipse rx="3.9" ry="3.4" fill="url(#g202_1)"/><path d="M-3.1 0Q0 1.2 3.1 0" fill="none" stroke="#201712" stroke-width="0.59"/></g><g transform="translate(899.2 333.5) rotate(166)"><ellipse rx="4.6" ry="3.4" fill="url(#g202_3)"/><path d="M-3.7 0Q0 1.2 3.7 0" fill="none" stroke="#201712" stroke-width="0.59"/></g><g transform="translate(885.0 347.9) rotate(146)"><ellipse rx="4.7" ry="3.0" fill="url(#g202_0)"/><path d="M-3.7 0Q0 1.0 3.7 0" fill="none" stroke="#201712" stroke-width="0.59"/></g><g transform="translate(890.8 333.3) rotate(167)"><ellipse rx="3.9" ry="3.5" fill="url(#g202_1)"/><path d="M-3.1 0Q0 1.2 3.1 0" fill="none" stroke="#201712" stroke-width="0.59"/></g><g transform="translate(867.7 290.0) rotate(8)"><ellipse rx="3.9" ry="2.9" fill="url(#g202_2)"/><path d="M-3.1 0Q0 1.0 3.1 0" fill="none" stroke="#201712" stroke-width="0.59"/></g><g transform="translate(875.4 302.7) rotate(91)"><ellipse rx="4.7" ry="3.6" fill="url(#g202_3)"/><path d="M-3.8 0Q0 1.3 3.8 0" fill="none" stroke="#201712" stroke-width="0.59"/></g><g transform="translate(901.1 340.0) rotate(87)"><ellipse rx="4.1" ry="3.2" fill="url(#g202_2)"/><path d="M-3.3 0Q0 1.1 3.3 0" fill="none" stroke="#201712" stroke-width="0.59"/></g><g transform="translate(880.8 354.0) rotate(65)"><ellipse rx="3.7" ry="3.2" fill="url(#g202_0)"/><path d="M-3.0 0Q0 1.1 3.0 0" fill="none" stroke="#201712" stroke-width="0.59"/></g><g transform="translate(869.7 345.5) rotate(158)"><ellipse rx="3.8" ry="3.2" fill="url(#g202_3)"/><path d="M-3.0 0Q0 1.1 3.0 0" fill="none" stroke="#201712" stroke-width="0.59"/></g><g transform="translate(886.0 335.4) rotate(109)"><ellipse rx="4.6" ry="3.1" fill="url(#g202_3)"/><path d="M-3.6 0Q0 1.1 3.6 0" fill="none" stroke="#201712" stroke-width="0.59"/></g><g transform="translate(897.8 318.6) rotate(136)"><ellipse rx="4.1" ry="3.2" fill="url(#g202_0)"/><path d="M-3.3 0Q0 1.1 3.3 0" fill="none" stroke="#201712" stroke-width="0.59"/></g><g transform="translate(898.8 347.7) rotate(44)"><ellipse rx="4.8" ry="3.4" fill="url(#g202_0)"/><path d="M-3.9 0Q0 1.2 3.9 0" fill="none" stroke="#201712" stroke-width="0.59"/></g><g transform="translate(888.6 340.4) rotate(47)"><ellipse rx="4.8" ry="2.9" fill="url(#g202_3)"/><path d="M-3.8 0Q0 1.0 3.8 0" fill="none" stroke="#201712" stroke-width="0.59"/></g><g transform="translate(887.8 330.8) rotate(134)"><ellipse rx="4.2" ry="3.6" fill="url(#g202_3)"/><path d="M-3.4 0Q0 1.2 3.4 0" fill="none" stroke="#201712" stroke-width="0.59"/></g><g transform="translate(908.4 328.1) rotate(107)"><ellipse rx="4.2" ry="2.9" fill="url(#g202_2)"/><path d="M-3.4 0Q0 1.0 3.4 0" fill="none" stroke="#201712" stroke-width="0.59"/></g><g transform="translate(872.0 313.0) rotate(74)"><ellipse rx="4.1" ry="3.6" fill="url(#g202_1)"/><path d="M-3.3 0Q0 1.3 3.3 0" fill="none" stroke="#201712" stroke-width="0.59"/></g><g transform="translate(912.4 344.3) rotate(159)"><ellipse rx="4.0" ry="3.3" fill="url(#g202_1)"/><path d="M-3.2 0Q0 1.1 3.2 0" fill="none" stroke="#201712" stroke-width="0.59"/></g><g transform="translate(890.3 276.7) rotate(21)"><ellipse rx="4.4" ry="3.2" fill="url(#g202_2)"/><path d="M-3.5 0Q0 1.1 3.5 0" fill="none" stroke="#201712" stroke-width="0.59"/></g><g transform="translate(897.6 279.4) rotate(92)"><ellipse rx="4.6" ry="3.3" fill="url(#g202_2)"/><path d="M-3.7 0Q0 1.2 3.7 0" fill="none" stroke="#201712" stroke-width="0.59"/></g><g transform="translate(898.0 294.8) rotate(150)"><ellipse rx="3.7" ry="3.0" fill="url(#g202_2)"/><path d="M-3.0 0Q0 1.1 3.0 0" fill="none" stroke="#201712" stroke-width="0.59"/></g><g transform="translate(899.7 285.4) rotate(155)"><ellipse rx="4.4" ry="3.6" fill="url(#g202_2)"/><path d="M-3.5 0Q0 1.3 3.5 0" fill="none" stroke="#201712" stroke-width="0.59"/></g><g transform="translate(903.8 289.0) rotate(123)"><ellipse rx="4.3" ry="2.8" fill="url(#g202_0)"/><path d="M-3.4 0Q0 1.0 3.4 0" fill="none" stroke="#201712" stroke-width="0.59"/></g><g transform="translate(906.0 333.2) rotate(103)"><ellipse rx="4.3" ry="3.5" fill="url(#g202_1)"/><path d="M-3.5 0Q0 1.2 3.5 0" fill="none" stroke="#201712" stroke-width="0.59"/></g><g transform="translate(867.6 279.8) rotate(103)"><ellipse rx="4.7" ry="3.0" fill="url(#g202_3)"/><path d="M-3.7 0Q0 1.1 3.7 0" fill="none" stroke="#201712" stroke-width="0.59"/></g><g transform="translate(899.8 308.0) rotate(132)"><ellipse rx="4.9" ry="3.2" fill="url(#g202_0)"/><path d="M-3.9 0Q0 1.1 3.9 0" fill="none" stroke="#201712" stroke-width="0.59"/></g><g transform="translate(891.9 326.4) rotate(50)"><ellipse rx="4.3" ry="3.4" fill="url(#g202_2)"/><path d="M-3.5 0Q0 1.2 3.5 0" fill="none" stroke="#201712" stroke-width="0.59"/></g><g transform="translate(881.8 279.4) rotate(164)"><ellipse rx="4.5" ry="3.1" fill="url(#g202_0)"/><path d="M-3.6 0Q0 1.1 3.6 0" fill="none" stroke="#201712" stroke-width="0.59"/></g><g transform="translate(897.2 276.5) rotate(80)"><ellipse rx="4.6" ry="3.6" fill="url(#g202_3)"/><path d="M-3.7 0Q0 1.3 3.7 0" fill="none" stroke="#201712" stroke-width="0.59"/></g><g transform="translate(890.9 300.3) rotate(60)"><ellipse rx="4.0" ry="3.4" fill="url(#g202_0)"/><path d="M-3.2 0Q0 1.2 3.2 0" fill="none" stroke="#201712" stroke-width="0.59"/></g><g transform="translate(901.4 327.3) rotate(110)"><ellipse rx="3.9" ry="3.4" fill="url(#g202_3)"/><path d="M-3.1 0Q0 1.2 3.1 0" fill="none" stroke="#201712" stroke-width="0.59"/></g><g transform="translate(883.0 351.1) rotate(123)"><ellipse rx="4.2" ry="3.0" fill="url(#g202_2)"/><path d="M-3.3 0Q0 1.0 3.3 0" fill="none" stroke="#201712" stroke-width="0.59"/></g><g transform="translate(887.7 300.0) rotate(165)"><ellipse rx="4.0" ry="3.3" fill="url(#g202_1)"/><path d="M-3.2 0Q0 1.1 3.2 0" fill="none" stroke="#201712" stroke-width="0.59"/></g><g transform="translate(873.0 308.0) rotate(114)"><ellipse rx="4.6" ry="3.4" fill="url(#g202_2)"/><path d="M-3.6 0Q0 1.2 3.6 0" fill="none" stroke="#201712" stroke-width="0.59"/></g><g transform="translate(867.2 285.4) rotate(137)"><ellipse rx="3.9" ry="3.3" fill="url(#g202_3)"/><path d="M-3.1 0Q0 1.1 3.1 0" fill="none" stroke="#201712" stroke-width="0.59"/></g><g transform="translate(885.4 353.0) rotate(8)"><ellipse rx="4.3" ry="2.9" fill="url(#g202_3)"/><path d="M-3.5 0Q0 1.0 3.5 0" fill="none" stroke="#201712" stroke-width="0.59"/></g><g transform="translate(866.8 327.6) rotate(43)"><ellipse rx="4.3" ry="3.2" fill="url(#g202_1)"/><path d="M-3.5 0Q0 1.1 3.5 0" fill="none" stroke="#201712" stroke-width="0.59"/></g><g transform="translate(907.4 348.0) rotate(99)"><ellipse rx="4.1" ry="2.9" fill="url(#g202_3)"/><path d="M-3.3 0Q0 1.0 3.3 0" fill="none" stroke="#201712" stroke-width="0.59"/></g><g transform="translate(893.9 313.4) rotate(144)"><ellipse rx="4.1" ry="3.5" fill="url(#g202_0)"/><path d="M-3.2 0Q0 1.2 3.2 0" fill="none" stroke="#201712" stroke-width="0.59"/></g><g transform="translate(898.2 315.4) rotate(61)"><ellipse rx="4.4" ry="2.8" fill="url(#g202_3)"/><path d="M-3.5 0Q0 1.0 3.5 0" fill="none" stroke="#201712" stroke-width="0.59"/></g><g transform="translate(905.5 305.9) rotate(103)"><ellipse rx="4.1" ry="3.6" fill="url(#g202_1)"/><path d="M-3.3 0Q0 1.3 3.3 0" fill="none" stroke="#201712" stroke-width="0.59"/></g><g transform="translate(887.0 317.4) rotate(99)"><ellipse rx="4.2" ry="3.6" fill="url(#g202_2)"/><path d="M-3.4 0Q0 1.3 3.4 0" fill="none" stroke="#201712" stroke-width="0.59"/></g><g transform="translate(887.0 325.4) rotate(99)"><ellipse rx="4.0" ry="3.2" fill="url(#g202_0)"/><path d="M-3.2 0Q0 1.1 3.2 0" fill="none" stroke="#201712" stroke-width="0.59"/></g><g transform="translate(880.4 318.1) rotate(59)"><ellipse rx="4.1" ry="2.9" fill="url(#g202_2)"/><path d="M-3.3 0Q0 1.0 3.3 0" fill="none" stroke="#201712" stroke-width="0.59"/></g><g transform="translate(878.2 334.8) rotate(64)"><ellipse rx="4.8" ry="2.9" fill="url(#g202_0)"/><path d="M-3.9 0Q0 1.0 3.9 0" fill="none" stroke="#201712" stroke-width="0.59"/></g><g transform="translate(867.1 313.7) rotate(118)"><ellipse rx="3.8" ry="3.1" fill="url(#g202_1)"/><path d="M-3.0 0Q0 1.1 3.0 0" fill="none" stroke="#201712" stroke-width="0.59"/></g><g transform="translate(911.1 278.5) rotate(138)"><ellipse rx="4.7" ry="3.5" fill="url(#g202_2)"/><path d="M-3.8 0Q0 1.2 3.8 0" fill="none" stroke="#201712" stroke-width="0.59"/></g><g transform="translate(894.8 340.8) rotate(11)"><ellipse rx="3.9" ry="3.0" fill="url(#g202_0)"/><path d="M-3.1 0Q0 1.1 3.1 0" fill="none" stroke="#201712" stroke-width="0.59"/></g><g transform="translate(896.5 303.7) rotate(82)"><ellipse rx="4.1" ry="3.1" fill="url(#g202_0)"/><path d="M-3.3 0Q0 1.1 3.3 0" fill="none" stroke="#201712" stroke-width="0.59"/></g><g transform="translate(880.8 292.7) rotate(147)"><ellipse rx="4.8" ry="3.2" fill="url(#g202_0)"/><path d="M-3.8 0Q0 1.1 3.8 0" fill="none" stroke="#201712" stroke-width="0.59"/></g><g transform="translate(874.1 323.7) rotate(65)"><ellipse rx="4.9" ry="3.6" fill="url(#g202_2)"/><path d="M-3.9 0Q0 1.3 3.9 0" fill="none" stroke="#201712" stroke-width="0.59"/></g><g transform="translate(913.3 339.9) rotate(158)"><ellipse rx="3.6" ry="3.0" fill="url(#g202_1)"/><path d="M-2.9 0Q0 1.0 2.9 0" fill="none" stroke="#201712" stroke-width="0.59"/></g><g transform="translate(881.2 300.4) rotate(13)"><ellipse rx="4.8" ry="3.3" fill="url(#g202_3)"/><path d="M-3.9 0Q0 1.1 3.9 0" fill="none" stroke="#201712" stroke-width="0.59"/></g><g transform="translate(886.3 278.4) rotate(100)"><ellipse rx="4.6" ry="3.4" fill="url(#g202_2)"/><path d="M-3.7 0Q0 1.2 3.7 0" fill="none" stroke="#201712" stroke-width="0.59"/></g><g transform="translate(876.9 285.1) rotate(142)"><ellipse rx="3.9" ry="3.6" fill="url(#g202_1)"/><path d="M-3.1 0Q0 1.3 3.1 0" fill="none" stroke="#201712" stroke-width="0.59"/></g><g transform="translate(878.9 299.5) rotate(127)"><ellipse rx="4.1" ry="3.0" fill="url(#g202_3)"/><path d="M-3.3 0Q0 1.0 3.3 0" fill="none" stroke="#201712" stroke-width="0.59"/></g><g transform="translate(905.3 313.3) rotate(5)"><ellipse rx="4.3" ry="3.2" fill="url(#g202_0)"/><path d="M-3.5 0Q0 1.1 3.5 0" fill="none" stroke="#201712" stroke-width="0.59"/></g><g transform="translate(907.7 328.6) rotate(88)"><ellipse rx="4.9" ry="3.0" fill="url(#g202_0)"/><path d="M-3.9 0Q0 1.0 3.9 0" fill="none" stroke="#201712" stroke-width="0.59"/></g><g transform="translate(903.2 297.9) rotate(143)"><ellipse rx="4.1" ry="3.5" fill="url(#g202_3)"/><path d="M-3.3 0Q0 1.2 3.3 0" fill="none" stroke="#201712" stroke-width="0.59"/></g><g transform="translate(900.1 353.2) rotate(66)"><ellipse rx="4.5" ry="3.5" fill="url(#g202_0)"/><path d="M-3.6 0Q0 1.2 3.6 0" fill="none" stroke="#201712" stroke-width="0.59"/></g><g transform="translate(891.6 327.6) rotate(79)"><ellipse rx="3.7" ry="3.2" fill="url(#g202_1)"/><path d="M-3.0 0Q0 1.1 3.0 0" fill="none" stroke="#201712" stroke-width="0.59"/></g><g transform="translate(867.9 300.1) rotate(173)"><ellipse rx="4.2" ry="3.5" fill="url(#g202_3)"/><path d="M-3.3 0Q0 1.2 3.3 0" fill="none" stroke="#201712" stroke-width="0.59"/></g><g transform="translate(912.0 324.6) rotate(164)"><ellipse rx="4.0" ry="3.0" fill="url(#g202_1)"/><path d="M-3.2 0Q0 1.1 3.2 0" fill="none" stroke="#201712" stroke-width="0.59"/></g><g transform="translate(900.2 324.3) rotate(85)"><ellipse rx="4.2" ry="3.0" fill="url(#g202_2)"/><path d="M-3.3 0Q0 1.0 3.3 0" fill="none" stroke="#201712" stroke-width="0.59"/></g><g transform="translate(906.8 321.0) rotate(63)"><ellipse rx="4.5" ry="3.6" fill="url(#g202_1)"/><path d="M-3.6 0Q0 1.3 3.6 0" fill="none" stroke="#201712" stroke-width="0.59"/></g><g transform="translate(910.3 311.6) rotate(54)"><ellipse rx="4.5" ry="3.4" fill="url(#g202_0)"/><path d="M-3.6 0Q0 1.2 3.6 0" fill="none" stroke="#201712" stroke-width="0.59"/></g><g transform="translate(886.4 346.4) rotate(143)"><ellipse rx="3.9" ry="2.9" fill="url(#g202_2)"/><path d="M-3.2 0Q0 1.0 3.2 0" fill="none" stroke="#201712" stroke-width="0.59"/></g><g transform="translate(910.8 308.8) rotate(164)"><ellipse rx="3.7" ry="3.6" fill="url(#g202_0)"/><path d="M-3.0 0Q0 1.3 3.0 0" fill="none" stroke="#201712" stroke-width="0.59"/></g><g transform="translate(905.4 289.8) rotate(42)"><ellipse rx="3.8" ry="3.3" fill="url(#g202_0)"/><path d="M-3.1 0Q0 1.2 3.1 0" fill="none" stroke="#201712" stroke-width="0.59"/></g><g transform="translate(901.4 345.5) rotate(105)"><ellipse rx="4.4" ry="3.1" fill="url(#g202_2)"/><path d="M-3.5 0Q0 1.1 3.5 0" fill="none" stroke="#201712" stroke-width="0.59"/></g><g transform="translate(903.5 326.2) rotate(53)"><ellipse rx="4.3" ry="2.9" fill="url(#g202_1)"/><path d="M-3.4 0Q0 1.0 3.4 0" fill="none" stroke="#201712" stroke-width="0.59"/></g><g transform="translate(878.6 285.6) rotate(141)"><ellipse rx="4.8" ry="3.0" fill="url(#g202_0)"/><path d="M-3.8 0Q0 1.0 3.8 0" fill="none" stroke="#201712" stroke-width="0.59"/></g><g transform="translate(912.5 279.4) rotate(57)"><ellipse rx="4.3" ry="3.2" fill="url(#g202_2)"/><path d="M-3.4 0Q0 1.1 3.4 0" fill="none" stroke="#201712" stroke-width="0.59"/></g><g transform="translate(874.1 274.9) rotate(6)"><ellipse rx="3.8" ry="3.3" fill="url(#g202_2)"/><path d="M-3.1 0Q0 1.2 3.1 0" fill="none" stroke="#201712" stroke-width="0.59"/></g><g transform="translate(888.3 285.5) rotate(91)"><ellipse rx="4.0" ry="3.1" fill="url(#g202_3)"/><path d="M-3.2 0Q0 1.1 3.2 0" fill="none" stroke="#201712" stroke-width="0.59"/></g><g transform="translate(866.8 319.2) rotate(3)"><ellipse rx="4.3" ry="3.3" fill="url(#g202_2)"/><path d="M-3.5 0Q0 1.2 3.5 0" fill="none" stroke="#201712" stroke-width="0.59"/></g><g transform="translate(881.6 279.0) rotate(67)"><ellipse rx="4.4" ry="3.2" fill="url(#g202_3)"/><path d="M-3.5 0Q0 1.1 3.5 0" fill="none" stroke="#201712" stroke-width="0.59"/></g><g transform="translate(886.8 315.3) rotate(57)"><ellipse rx="4.2" ry="3.3" fill="url(#g202_3)"/><path d="M-3.4 0Q0 1.2 3.4 0" fill="none" stroke="#201712" stroke-width="0.59"/></g><g transform="translate(880.3 330.3) rotate(163)"><ellipse rx="3.8" ry="3.4" fill="url(#g202_0)"/><path d="M-3.1 0Q0 1.2 3.1 0" fill="none" stroke="#201712" stroke-width="0.59"/></g><g transform="translate(869.7 352.6) rotate(135)"><ellipse rx="4.1" ry="3.3" fill="url(#g202_1)"/><path d="M-3.3 0Q0 1.2 3.3 0" fill="none" stroke="#201712" stroke-width="0.59"/></g><g transform="translate(872.9 331.4) rotate(98)"><ellipse rx="4.7" ry="3.2" fill="url(#g202_3)"/><path d="M-3.8 0Q0 1.1 3.8 0" fill="none" stroke="#201712" stroke-width="0.59"/></g><g transform="translate(907.5 302.8) rotate(113)"><ellipse rx="4.4" ry="3.2" fill="url(#g202_0)"/><path d="M-3.5 0Q0 1.1 3.5 0" fill="none" stroke="#201712" stroke-width="0.59"/></g><g transform="translate(872.9 291.7) rotate(90)"><ellipse rx="3.8" ry="3.1" fill="url(#g202_2)"/><path d="M-3.1 0Q0 1.1 3.1 0" fill="none" stroke="#201712" stroke-width="0.59"/></g><g transform="translate(909.0 295.2) rotate(170)"><ellipse rx="4.4" ry="2.9" fill="url(#g202_3)"/><path d="M-3.5 0Q0 1.0 3.5 0" fill="none" stroke="#201712" stroke-width="0.59"/></g></g><g clip-path="url(#cl203)"><rect x="911.0" y="276.0" width="43.0" height="79.0" fill="#100b09"/><g transform="translate(911.2 291.2) rotate(25)"><ellipse rx="4.2" ry="3.6" fill="url(#g203_2)"/><path d="M-3.3 0Q0 1.3 3.3 0" fill="none" stroke="#1a1512" stroke-width="0.59"/></g><g transform="translate(918.9 303.8) rotate(83)"><ellipse rx="4.7" ry="3.6" fill="url(#g203_2)"/><path d="M-3.7 0Q0 1.3 3.7 0" fill="none" stroke="#1a1512" stroke-width="0.59"/></g><g transform="translate(935.6 288.3) rotate(115)"><ellipse rx="3.9" ry="3.5" fill="url(#g203_3)"/><path d="M-3.1 0Q0 1.2 3.1 0" fill="none" stroke="#1a1512" stroke-width="0.59"/></g><g transform="translate(919.5 307.8) rotate(24)"><ellipse rx="4.8" ry="3.6" fill="url(#g203_1)"/><path d="M-3.8 0Q0 1.3 3.8 0" fill="none" stroke="#1a1512" stroke-width="0.59"/></g><g transform="translate(943.4 300.6) rotate(56)"><ellipse rx="4.3" ry="3.0" fill="url(#g203_3)"/><path d="M-3.4 0Q0 1.0 3.4 0" fill="none" stroke="#1a1512" stroke-width="0.59"/></g><g transform="translate(934.5 299.4) rotate(135)"><ellipse rx="4.4" ry="2.9" fill="url(#g203_3)"/><path d="M-3.5 0Q0 1.0 3.5 0" fill="none" stroke="#1a1512" stroke-width="0.59"/></g><g transform="translate(911.9 328.4) rotate(107)"><ellipse rx="4.1" ry="2.9" fill="url(#g203_0)"/><path d="M-3.3 0Q0 1.0 3.3 0" fill="none" stroke="#1a1512" stroke-width="0.59"/></g><g transform="translate(911.6 324.1) rotate(106)"><ellipse rx="4.4" ry="3.1" fill="url(#g203_3)"/><path d="M-3.6 0Q0 1.1 3.6 0" fill="none" stroke="#1a1512" stroke-width="0.59"/></g><g transform="translate(954.2 316.9) rotate(32)"><ellipse rx="4.8" ry="3.2" fill="url(#g203_2)"/><path d="M-3.9 0Q0 1.1 3.9 0" fill="none" stroke="#1a1512" stroke-width="0.59"/></g><g transform="translate(949.7 346.6) rotate(155)"><ellipse rx="4.2" ry="3.5" fill="url(#g203_0)"/><path d="M-3.3 0Q0 1.2 3.3 0" fill="none" stroke="#1a1512" stroke-width="0.59"/></g><g transform="translate(947.8 303.1) rotate(96)"><ellipse rx="4.3" ry="3.4" fill="url(#g203_1)"/><path d="M-3.4 0Q0 1.2 3.4 0" fill="none" stroke="#1a1512" stroke-width="0.59"/></g><g transform="translate(931.0 328.9) rotate(88)"><ellipse rx="4.3" ry="2.9" fill="url(#g203_3)"/><path d="M-3.5 0Q0 1.0 3.5 0" fill="none" stroke="#1a1512" stroke-width="0.59"/></g><g transform="translate(911.2 314.8) rotate(44)"><ellipse rx="4.6" ry="3.5" fill="url(#g203_2)"/><path d="M-3.7 0Q0 1.2 3.7 0" fill="none" stroke="#1a1512" stroke-width="0.59"/></g><g transform="translate(957.0 354.8) rotate(65)"><ellipse rx="4.8" ry="3.1" fill="url(#g203_0)"/><path d="M-3.9 0Q0 1.1 3.9 0" fill="none" stroke="#1a1512" stroke-width="0.59"/></g><g transform="translate(934.4 350.0) rotate(151)"><ellipse rx="4.6" ry="2.9" fill="url(#g203_1)"/><path d="M-3.6 0Q0 1.0 3.6 0" fill="none" stroke="#1a1512" stroke-width="0.59"/></g><g transform="translate(938.1 337.7) rotate(128)"><ellipse rx="4.4" ry="3.5" fill="url(#g203_1)"/><path d="M-3.5 0Q0 1.2 3.5 0" fill="none" stroke="#1a1512" stroke-width="0.59"/></g><g transform="translate(936.7 330.3) rotate(169)"><ellipse rx="4.0" ry="3.2" fill="url(#g203_3)"/><path d="M-3.2 0Q0 1.1 3.2 0" fill="none" stroke="#1a1512" stroke-width="0.59"/></g><g transform="translate(948.3 352.6) rotate(149)"><ellipse rx="4.7" ry="3.3" fill="url(#g203_0)"/><path d="M-3.7 0Q0 1.1 3.7 0" fill="none" stroke="#1a1512" stroke-width="0.59"/></g><g transform="translate(926.7 297.0) rotate(12)"><ellipse rx="4.6" ry="2.8" fill="url(#g203_2)"/><path d="M-3.7 0Q0 1.0 3.7 0" fill="none" stroke="#1a1512" stroke-width="0.59"/></g><g transform="translate(948.0 340.1) rotate(35)"><ellipse rx="4.3" ry="3.0" fill="url(#g203_0)"/><path d="M-3.5 0Q0 1.1 3.5 0" fill="none" stroke="#1a1512" stroke-width="0.59"/></g><g transform="translate(938.6 321.1) rotate(168)"><ellipse rx="4.0" ry="3.2" fill="url(#g203_1)"/><path d="M-3.2 0Q0 1.1 3.2 0" fill="none" stroke="#1a1512" stroke-width="0.59"/></g><g transform="translate(937.9 312.1) rotate(62)"><ellipse rx="4.5" ry="3.0" fill="url(#g203_0)"/><path d="M-3.6 0Q0 1.0 3.6 0" fill="none" stroke="#1a1512" stroke-width="0.59"/></g><g transform="translate(928.6 282.3) rotate(77)"><ellipse rx="4.5" ry="3.6" fill="url(#g203_2)"/><path d="M-3.6 0Q0 1.3 3.6 0" fill="none" stroke="#1a1512" stroke-width="0.59"/></g><g transform="translate(933.7 343.7) rotate(38)"><ellipse rx="3.9" ry="3.1" fill="url(#g203_2)"/><path d="M-3.1 0Q0 1.1 3.1 0" fill="none" stroke="#1a1512" stroke-width="0.59"/></g><g transform="translate(935.8 280.1) rotate(60)"><ellipse rx="4.0" ry="3.5" fill="url(#g203_3)"/><path d="M-3.2 0Q0 1.2 3.2 0" fill="none" stroke="#1a1512" stroke-width="0.59"/></g><g transform="translate(948.7 282.3) rotate(28)"><ellipse rx="3.8" ry="3.5" fill="url(#g203_0)"/><path d="M-3.1 0Q0 1.2 3.1 0" fill="none" stroke="#1a1512" stroke-width="0.59"/></g><g transform="translate(910.3 278.3) rotate(109)"><ellipse rx="4.9" ry="3.3" fill="url(#g203_0)"/><path d="M-3.9 0Q0 1.1 3.9 0" fill="none" stroke="#1a1512" stroke-width="0.59"/></g><g transform="translate(910.4 310.3) rotate(48)"><ellipse rx="4.3" ry="2.9" fill="url(#g203_0)"/><path d="M-3.4 0Q0 1.0 3.4 0" fill="none" stroke="#1a1512" stroke-width="0.59"/></g><g transform="translate(924.5 286.2) rotate(101)"><ellipse rx="3.8" ry="3.5" fill="url(#g203_0)"/><path d="M-3.1 0Q0 1.2 3.1 0" fill="none" stroke="#1a1512" stroke-width="0.59"/></g><g transform="translate(945.7 352.4) rotate(110)"><ellipse rx="3.7" ry="3.5" fill="url(#g203_1)"/><path d="M-3.0 0Q0 1.2 3.0 0" fill="none" stroke="#1a1512" stroke-width="0.59"/></g><g transform="translate(920.6 348.0) rotate(126)"><ellipse rx="4.5" ry="3.5" fill="url(#g203_0)"/><path d="M-3.6 0Q0 1.2 3.6 0" fill="none" stroke="#1a1512" stroke-width="0.59"/></g><g transform="translate(924.5 334.3) rotate(52)"><ellipse rx="4.7" ry="3.4" fill="url(#g203_0)"/><path d="M-3.8 0Q0 1.2 3.8 0" fill="none" stroke="#1a1512" stroke-width="0.59"/></g><g transform="translate(920.9 342.9) rotate(18)"><ellipse rx="3.9" ry="3.6" fill="url(#g203_0)"/><path d="M-3.1 0Q0 1.2 3.1 0" fill="none" stroke="#1a1512" stroke-width="0.59"/></g><g transform="translate(938.3 278.0) rotate(52)"><ellipse rx="4.5" ry="3.2" fill="url(#g203_2)"/><path d="M-3.6 0Q0 1.1 3.6 0" fill="none" stroke="#1a1512" stroke-width="0.59"/></g><g transform="translate(943.2 295.0) rotate(104)"><ellipse rx="3.7" ry="3.2" fill="url(#g203_0)"/><path d="M-3.0 0Q0 1.1 3.0 0" fill="none" stroke="#1a1512" stroke-width="0.59"/></g><g transform="translate(913.0 316.6) rotate(52)"><ellipse rx="4.2" ry="3.5" fill="url(#g203_1)"/><path d="M-3.4 0Q0 1.2 3.4 0" fill="none" stroke="#1a1512" stroke-width="0.59"/></g><g transform="translate(920.2 292.4) rotate(145)"><ellipse rx="4.2" ry="3.2" fill="url(#g203_0)"/><path d="M-3.4 0Q0 1.1 3.4 0" fill="none" stroke="#1a1512" stroke-width="0.59"/></g><g transform="translate(933.6 353.3) rotate(162)"><ellipse rx="3.6" ry="3.6" fill="url(#g203_3)"/><path d="M-2.9 0Q0 1.3 2.9 0" fill="none" stroke="#1a1512" stroke-width="0.59"/></g><g transform="translate(951.7 322.2) rotate(44)"><ellipse rx="3.6" ry="3.2" fill="url(#g203_3)"/><path d="M-2.9 0Q0 1.1 2.9 0" fill="none" stroke="#1a1512" stroke-width="0.59"/></g><g transform="translate(917.9 353.3) rotate(86)"><ellipse rx="4.3" ry="3.4" fill="url(#g203_1)"/><path d="M-3.4 0Q0 1.2 3.4 0" fill="none" stroke="#1a1512" stroke-width="0.59"/></g><g transform="translate(957.6 297.4) rotate(42)"><ellipse rx="4.6" ry="2.8" fill="url(#g203_1)"/><path d="M-3.7 0Q0 1.0 3.7 0" fill="none" stroke="#1a1512" stroke-width="0.59"/></g><g transform="translate(922.3 290.7) rotate(7)"><ellipse rx="4.4" ry="3.6" fill="url(#g203_0)"/><path d="M-3.5 0Q0 1.3 3.5 0" fill="none" stroke="#1a1512" stroke-width="0.59"/></g><g transform="translate(915.2 338.3) rotate(140)"><ellipse rx="3.7" ry="3.3" fill="url(#g203_0)"/><path d="M-3.0 0Q0 1.2 3.0 0" fill="none" stroke="#1a1512" stroke-width="0.59"/></g><g transform="translate(924.8 356.1) rotate(172)"><ellipse rx="4.8" ry="3.1" fill="url(#g203_2)"/><path d="M-3.8 0Q0 1.1 3.8 0" fill="none" stroke="#1a1512" stroke-width="0.59"/></g><g transform="translate(920.5 285.9) rotate(177)"><ellipse rx="4.7" ry="3.1" fill="url(#g203_3)"/><path d="M-3.8 0Q0 1.1 3.8 0" fill="none" stroke="#1a1512" stroke-width="0.59"/></g><g transform="translate(919.1 297.0) rotate(12)"><ellipse rx="4.8" ry="2.9" fill="url(#g203_0)"/><path d="M-3.9 0Q0 1.0 3.9 0" fill="none" stroke="#1a1512" stroke-width="0.59"/></g><g transform="translate(937.3 345.8) rotate(135)"><ellipse rx="3.9" ry="3.5" fill="url(#g203_1)"/><path d="M-3.1 0Q0 1.2 3.1 0" fill="none" stroke="#1a1512" stroke-width="0.59"/></g><g transform="translate(923.5 329.9) rotate(174)"><ellipse rx="4.6" ry="3.2" fill="url(#g203_3)"/><path d="M-3.7 0Q0 1.1 3.7 0" fill="none" stroke="#1a1512" stroke-width="0.59"/></g><g transform="translate(931.2 305.6) rotate(60)"><ellipse rx="4.0" ry="3.5" fill="url(#g203_1)"/><path d="M-3.2 0Q0 1.2 3.2 0" fill="none" stroke="#1a1512" stroke-width="0.59"/></g><g transform="translate(933.1 340.2) rotate(120)"><ellipse rx="4.9" ry="3.5" fill="url(#g203_2)"/><path d="M-3.9 0Q0 1.2 3.9 0" fill="none" stroke="#1a1512" stroke-width="0.59"/></g><g transform="translate(957.9 294.9) rotate(31)"><ellipse rx="4.8" ry="3.0" fill="url(#g203_3)"/><path d="M-3.8 0Q0 1.0 3.8 0" fill="none" stroke="#1a1512" stroke-width="0.59"/></g><g transform="translate(930.5 293.4) rotate(170)"><ellipse rx="4.1" ry="3.1" fill="url(#g203_1)"/><path d="M-3.3 0Q0 1.1 3.3 0" fill="none" stroke="#1a1512" stroke-width="0.59"/></g><g transform="translate(944.5 328.9) rotate(76)"><ellipse rx="4.5" ry="3.5" fill="url(#g203_2)"/><path d="M-3.6 0Q0 1.2 3.6 0" fill="none" stroke="#1a1512" stroke-width="0.59"/></g><g transform="translate(916.9 312.4) rotate(83)"><ellipse rx="4.8" ry="3.1" fill="url(#g203_2)"/><path d="M-3.8 0Q0 1.1 3.8 0" fill="none" stroke="#1a1512" stroke-width="0.59"/></g><g transform="translate(942.8 309.7) rotate(156)"><ellipse rx="4.4" ry="3.1" fill="url(#g203_0)"/><path d="M-3.5 0Q0 1.1 3.5 0" fill="none" stroke="#1a1512" stroke-width="0.59"/></g><g transform="translate(934.9 356.1) rotate(59)"><ellipse rx="3.9" ry="3.3" fill="url(#g203_1)"/><path d="M-3.1 0Q0 1.2 3.1 0" fill="none" stroke="#1a1512" stroke-width="0.59"/></g><g transform="translate(945.8 311.4) rotate(155)"><ellipse rx="4.7" ry="3.0" fill="url(#g203_0)"/><path d="M-3.8 0Q0 1.1 3.8 0" fill="none" stroke="#1a1512" stroke-width="0.59"/></g><g transform="translate(909.8 334.5) rotate(121)"><ellipse rx="3.9" ry="3.2" fill="url(#g203_3)"/><path d="M-3.2 0Q0 1.1 3.2 0" fill="none" stroke="#1a1512" stroke-width="0.59"/></g><g transform="translate(957.5 325.6) rotate(75)"><ellipse rx="3.8" ry="3.5" fill="url(#g203_1)"/><path d="M-3.0 0Q0 1.2 3.0 0" fill="none" stroke="#1a1512" stroke-width="0.59"/></g><g transform="translate(931.4 334.7) rotate(30)"><ellipse rx="4.0" ry="3.4" fill="url(#g203_2)"/><path d="M-3.2 0Q0 1.2 3.2 0" fill="none" stroke="#1a1512" stroke-width="0.59"/></g><g transform="translate(930.0 289.4) rotate(37)"><ellipse rx="3.7" ry="3.5" fill="url(#g203_0)"/><path d="M-3.0 0Q0 1.2 3.0 0" fill="none" stroke="#1a1512" stroke-width="0.59"/></g><g transform="translate(945.8 325.7) rotate(34)"><ellipse rx="4.5" ry="3.6" fill="url(#g203_2)"/><path d="M-3.6 0Q0 1.2 3.6 0" fill="none" stroke="#1a1512" stroke-width="0.59"/></g><g transform="translate(950.1 319.7) rotate(7)"><ellipse rx="3.8" ry="2.9" fill="url(#g203_1)"/><path d="M-3.0 0Q0 1.0 3.0 0" fill="none" stroke="#1a1512" stroke-width="0.59"/></g><g transform="translate(930.7 324.3) rotate(36)"><ellipse rx="4.7" ry="3.1" fill="url(#g203_2)"/><path d="M-3.8 0Q0 1.1 3.8 0" fill="none" stroke="#1a1512" stroke-width="0.59"/></g><g transform="translate(926.3 307.6) rotate(120)"><ellipse rx="4.3" ry="3.6" fill="url(#g203_0)"/><path d="M-3.4 0Q0 1.3 3.4 0" fill="none" stroke="#1a1512" stroke-width="0.59"/></g><g transform="translate(930.8 321.0) rotate(108)"><ellipse rx="4.3" ry="3.2" fill="url(#g203_0)"/><path d="M-3.4 0Q0 1.1 3.4 0" fill="none" stroke="#1a1512" stroke-width="0.59"/></g><g transform="translate(926.1 352.4) rotate(96)"><ellipse rx="3.8" ry="3.2" fill="url(#g203_0)"/><path d="M-3.1 0Q0 1.1 3.1 0" fill="none" stroke="#1a1512" stroke-width="0.59"/></g><g transform="translate(948.7 307.6) rotate(147)"><ellipse rx="4.4" ry="3.2" fill="url(#g203_1)"/><path d="M-3.5 0Q0 1.1 3.5 0" fill="none" stroke="#1a1512" stroke-width="0.59"/></g><g transform="translate(912.3 352.7) rotate(86)"><ellipse rx="4.2" ry="3.6" fill="url(#g203_0)"/><path d="M-3.3 0Q0 1.2 3.3 0" fill="none" stroke="#1a1512" stroke-width="0.59"/></g><g transform="translate(910.1 287.8) rotate(112)"><ellipse rx="4.5" ry="3.2" fill="url(#g203_1)"/><path d="M-3.6 0Q0 1.1 3.6 0" fill="none" stroke="#1a1512" stroke-width="0.59"/></g><g transform="translate(951.6 332.5) rotate(127)"><ellipse rx="4.7" ry="3.1" fill="url(#g203_1)"/><path d="M-3.8 0Q0 1.1 3.8 0" fill="none" stroke="#1a1512" stroke-width="0.59"/></g><g transform="translate(955.8 279.1) rotate(134)"><ellipse rx="3.7" ry="3.2" fill="url(#g203_0)"/><path d="M-2.9 0Q0 1.1 2.9 0" fill="none" stroke="#1a1512" stroke-width="0.59"/></g><g transform="translate(916.2 341.1) rotate(140)"><ellipse rx="4.5" ry="3.1" fill="url(#g203_0)"/><path d="M-3.6 0Q0 1.1 3.6 0" fill="none" stroke="#1a1512" stroke-width="0.59"/></g><g transform="translate(918.0 280.2) rotate(167)"><ellipse rx="4.1" ry="2.9" fill="url(#g203_1)"/><path d="M-3.3 0Q0 1.0 3.3 0" fill="none" stroke="#1a1512" stroke-width="0.59"/></g><g transform="translate(958.3 342.0) rotate(118)"><ellipse rx="4.6" ry="3.1" fill="url(#g203_1)"/><path d="M-3.6 0Q0 1.1 3.6 0" fill="none" stroke="#1a1512" stroke-width="0.59"/></g><g transform="translate(953.4 310.2) rotate(45)"><ellipse rx="3.6" ry="3.1" fill="url(#g203_1)"/><path d="M-2.9 0Q0 1.1 2.9 0" fill="none" stroke="#1a1512" stroke-width="0.59"/></g><g transform="translate(941.3 353.7) rotate(48)"><ellipse rx="4.1" ry="3.4" fill="url(#g203_2)"/><path d="M-3.3 0Q0 1.2 3.3 0" fill="none" stroke="#1a1512" stroke-width="0.59"/></g><g transform="translate(951.9 294.9) rotate(101)"><ellipse rx="4.9" ry="2.8" fill="url(#g203_2)"/><path d="M-3.9 0Q0 1.0 3.9 0" fill="none" stroke="#1a1512" stroke-width="0.59"/></g><g transform="translate(947.1 288.6) rotate(139)"><ellipse rx="4.1" ry="3.1" fill="url(#g203_1)"/><path d="M-3.3 0Q0 1.1 3.3 0" fill="none" stroke="#1a1512" stroke-width="0.59"/></g><g transform="translate(951.8 328.0) rotate(70)"><ellipse rx="4.1" ry="3.2" fill="url(#g203_1)"/><path d="M-3.3 0Q0 1.1 3.3 0" fill="none" stroke="#1a1512" stroke-width="0.59"/></g><g transform="translate(937.9 292.2) rotate(71)"><ellipse rx="4.2" ry="3.6" fill="url(#g203_1)"/><path d="M-3.4 0Q0 1.3 3.4 0" fill="none" stroke="#1a1512" stroke-width="0.59"/></g><g transform="translate(933.3 314.1) rotate(130)"><ellipse rx="4.9" ry="2.8" fill="url(#g203_1)"/><path d="M-3.9 0Q0 1.0 3.9 0" fill="none" stroke="#1a1512" stroke-width="0.59"/></g><g transform="translate(925.1 301.5) rotate(123)"><ellipse rx="4.4" ry="3.5" fill="url(#g203_3)"/><path d="M-3.5 0Q0 1.2 3.5 0" fill="none" stroke="#1a1512" stroke-width="0.59"/></g><g transform="translate(910.8 347.1) rotate(20)"><ellipse rx="4.1" ry="3.1" fill="url(#g203_1)"/><path d="M-3.3 0Q0 1.1 3.3 0" fill="none" stroke="#1a1512" stroke-width="0.59"/></g><g transform="translate(954.0 342.5) rotate(139)"><ellipse rx="4.2" ry="2.8" fill="url(#g203_2)"/><path d="M-3.3 0Q0 1.0 3.3 0" fill="none" stroke="#1a1512" stroke-width="0.59"/></g><g transform="translate(925.2 320.7) rotate(70)"><ellipse rx="4.0" ry="3.5" fill="url(#g203_3)"/><path d="M-3.2 0Q0 1.2 3.2 0" fill="none" stroke="#1a1512" stroke-width="0.59"/></g><g transform="translate(910.7 301.4) rotate(136)"><ellipse rx="4.5" ry="2.9" fill="url(#g203_0)"/><path d="M-3.6 0Q0 1.0 3.6 0" fill="none" stroke="#1a1512" stroke-width="0.59"/></g><g transform="translate(913.7 298.6) rotate(17)"><ellipse rx="4.9" ry="2.9" fill="url(#g203_3)"/><path d="M-3.9 0Q0 1.0 3.9 0" fill="none" stroke="#1a1512" stroke-width="0.59"/></g><g transform="translate(957.6 303.9) rotate(13)"><ellipse rx="4.4" ry="3.0" fill="url(#g203_2)"/><path d="M-3.5 0Q0 1.1 3.5 0" fill="none" stroke="#1a1512" stroke-width="0.59"/></g><g transform="translate(932.8 347.8) rotate(163)"><ellipse rx="3.9" ry="3.6" fill="url(#g203_0)"/><path d="M-3.1 0Q0 1.3 3.1 0" fill="none" stroke="#1a1512" stroke-width="0.59"/></g><g transform="translate(929.0 305.4) rotate(157)"><ellipse rx="4.4" ry="3.2" fill="url(#g203_2)"/><path d="M-3.5 0Q0 1.1 3.5 0" fill="none" stroke="#1a1512" stroke-width="0.59"/></g><g transform="translate(939.9 305.2) rotate(114)"><ellipse rx="3.6" ry="2.9" fill="url(#g203_0)"/><path d="M-2.9 0Q0 1.0 2.9 0" fill="none" stroke="#1a1512" stroke-width="0.59"/></g><g transform="translate(916.2 318.3) rotate(51)"><ellipse rx="4.7" ry="2.9" fill="url(#g203_1)"/><path d="M-3.7 0Q0 1.0 3.7 0" fill="none" stroke="#1a1512" stroke-width="0.59"/></g><g transform="translate(942.4 274.4) rotate(66)"><ellipse rx="4.5" ry="3.1" fill="url(#g203_2)"/><path d="M-3.6 0Q0 1.1 3.6 0" fill="none" stroke="#1a1512" stroke-width="0.59"/></g><g transform="translate(918.6 333.2) rotate(164)"><ellipse rx="4.4" ry="3.4" fill="url(#g203_0)"/><path d="M-3.5 0Q0 1.2 3.5 0" fill="none" stroke="#1a1512" stroke-width="0.59"/></g><g transform="translate(935.1 323.7) rotate(140)"><ellipse rx="3.8" ry="2.8" fill="url(#g203_3)"/><path d="M-3.0 0Q0 1.0 3.0 0" fill="none" stroke="#1a1512" stroke-width="0.59"/></g><g transform="translate(944.4 318.3) rotate(139)"><ellipse rx="4.6" ry="3.1" fill="url(#g203_0)"/><path d="M-3.7 0Q0 1.1 3.7 0" fill="none" stroke="#1a1512" stroke-width="0.59"/></g><g transform="translate(954.3 328.6) rotate(76)"><ellipse rx="3.9" ry="3.5" fill="url(#g203_2)"/><path d="M-3.1 0Q0 1.2 3.1 0" fill="none" stroke="#1a1512" stroke-width="0.59"/></g><g transform="translate(921.0 328.1) rotate(77)"><ellipse rx="4.1" ry="3.3" fill="url(#g203_2)"/><path d="M-3.3 0Q0 1.1 3.3 0" fill="none" stroke="#1a1512" stroke-width="0.59"/></g><g transform="translate(955.4 283.7) rotate(148)"><ellipse rx="4.8" ry="3.5" fill="url(#g203_2)"/><path d="M-3.8 0Q0 1.2 3.8 0" fill="none" stroke="#1a1512" stroke-width="0.59"/></g><g transform="translate(911.7 280.5) rotate(121)"><ellipse rx="4.8" ry="3.5" fill="url(#g203_0)"/><path d="M-3.8 0Q0 1.2 3.8 0" fill="none" stroke="#1a1512" stroke-width="0.59"/></g><g transform="translate(948.0 313.7) rotate(101)"><ellipse rx="4.8" ry="3.5" fill="url(#g203_2)"/><path d="M-3.8 0Q0 1.2 3.8 0" fill="none" stroke="#1a1512" stroke-width="0.59"/></g><g transform="translate(940.7 288.5) rotate(39)"><ellipse rx="4.1" ry="3.2" fill="url(#g203_3)"/><path d="M-3.3 0Q0 1.1 3.3 0" fill="none" stroke="#1a1512" stroke-width="0.59"/></g><g transform="translate(926.4 277.0) rotate(82)"><ellipse rx="4.1" ry="3.1" fill="url(#g203_1)"/><path d="M-3.3 0Q0 1.1 3.3 0" fill="none" stroke="#1a1512" stroke-width="0.59"/></g><g transform="translate(945.0 294.7) rotate(7)"><ellipse rx="4.8" ry="3.0" fill="url(#g203_2)"/><path d="M-3.8 0Q0 1.1 3.8 0" fill="none" stroke="#1a1512" stroke-width="0.59"/></g><g transform="translate(953.1 285.6) rotate(104)"><ellipse rx="3.7" ry="3.5" fill="url(#g203_2)"/><path d="M-3.0 0Q0 1.2 3.0 0" fill="none" stroke="#1a1512" stroke-width="0.59"/></g><g transform="translate(936.2 333.8) rotate(117)"><ellipse rx="3.8" ry="3.1" fill="url(#g203_0)"/><path d="M-3.0 0Q0 1.1 3.0 0" fill="none" stroke="#1a1512" stroke-width="0.59"/></g><g transform="translate(956.3 312.3) rotate(57)"><ellipse rx="3.7" ry="3.1" fill="url(#g203_3)"/><path d="M-3.0 0Q0 1.1 3.0 0" fill="none" stroke="#1a1512" stroke-width="0.59"/></g><g transform="translate(949.9 356.5) rotate(141)"><ellipse rx="4.3" ry="3.0" fill="url(#g203_3)"/><path d="M-3.5 0Q0 1.0 3.5 0" fill="none" stroke="#1a1512" stroke-width="0.59"/></g><g transform="translate(932.8 277.1) rotate(167)"><ellipse rx="4.8" ry="2.8" fill="url(#g203_2)"/><path d="M-3.8 0Q0 1.0 3.8 0" fill="none" stroke="#1a1512" stroke-width="0.59"/></g><g transform="translate(953.7 334.1) rotate(124)"><ellipse rx="3.7" ry="3.4" fill="url(#g203_1)"/><path d="M-3.0 0Q0 1.2 3.0 0" fill="none" stroke="#1a1512" stroke-width="0.59"/></g><g transform="translate(922.4 343.4) rotate(52)"><ellipse rx="4.9" ry="3.1" fill="url(#g203_2)"/><path d="M-3.9 0Q0 1.1 3.9 0" fill="none" stroke="#1a1512" stroke-width="0.59"/></g><g transform="translate(910.8 353.6) rotate(23)"><ellipse rx="4.4" ry="2.8" fill="url(#g203_1)"/><path d="M-3.5 0Q0 1.0 3.5 0" fill="none" stroke="#1a1512" stroke-width="0.59"/></g><g transform="translate(922.5 314.4) rotate(36)"><ellipse rx="4.1" ry="3.0" fill="url(#g203_0)"/><path d="M-3.2 0Q0 1.1 3.2 0" fill="none" stroke="#1a1512" stroke-width="0.59"/></g><g transform="translate(957.2 349.8) rotate(112)"><ellipse rx="3.9" ry="3.4" fill="url(#g203_3)"/><path d="M-3.1 0Q0 1.2 3.1 0" fill="none" stroke="#1a1512" stroke-width="0.59"/></g><g transform="translate(951.6 274.5) rotate(59)"><ellipse rx="4.2" ry="3.4" fill="url(#g203_3)"/><path d="M-3.4 0Q0 1.2 3.4 0" fill="none" stroke="#1a1512" stroke-width="0.59"/></g><g transform="translate(940.6 283.6) rotate(156)"><ellipse rx="4.3" ry="3.5" fill="url(#g203_2)"/><path d="M-3.4 0Q0 1.2 3.4 0" fill="none" stroke="#1a1512" stroke-width="0.59"/></g><g transform="translate(916.2 323.2) rotate(174)"><ellipse rx="3.8" ry="3.0" fill="url(#g203_0)"/><path d="M-3.0 0Q0 1.0 3.0 0" fill="none" stroke="#1a1512" stroke-width="0.59"/></g><g transform="translate(924.9 337.8) rotate(125)"><ellipse rx="4.0" ry="3.2" fill="url(#g203_3)"/><path d="M-3.2 0Q0 1.1 3.2 0" fill="none" stroke="#1a1512" stroke-width="0.59"/></g><g transform="translate(926.2 280.7) rotate(120)"><ellipse rx="4.2" ry="2.9" fill="url(#g203_1)"/><path d="M-3.4 0Q0 1.0 3.4 0" fill="none" stroke="#1a1512" stroke-width="0.59"/></g><g transform="translate(934.8 310.4) rotate(149)"><ellipse rx="4.2" ry="3.1" fill="url(#g203_3)"/><path d="M-3.4 0Q0 1.1 3.4 0" fill="none" stroke="#1a1512" stroke-width="0.59"/></g><g transform="translate(945.3 332.2) rotate(26)"><ellipse rx="4.5" ry="3.2" fill="url(#g203_3)"/><path d="M-3.6 0Q0 1.1 3.6 0" fill="none" stroke="#1a1512" stroke-width="0.59"/></g><g transform="translate(942.8 344.1) rotate(41)"><ellipse rx="4.5" ry="3.6" fill="url(#g203_3)"/><path d="M-3.6 0Q0 1.3 3.6 0" fill="none" stroke="#1a1512" stroke-width="0.59"/></g><g transform="translate(943.9 337.3) rotate(57)"><ellipse rx="4.4" ry="3.0" fill="url(#g203_1)"/><path d="M-3.6 0Q0 1.1 3.6 0" fill="none" stroke="#1a1512" stroke-width="0.59"/></g><g transform="translate(951.2 299.1) rotate(126)"><ellipse rx="4.1" ry="3.1" fill="url(#g203_2)"/><path d="M-3.3 0Q0 1.1 3.3 0" fill="none" stroke="#1a1512" stroke-width="0.59"/></g><g transform="translate(919.2 275.0) rotate(155)"><ellipse rx="4.2" ry="3.4" fill="url(#g203_0)"/><path d="M-3.4 0Q0 1.2 3.4 0" fill="none" stroke="#1a1512" stroke-width="0.59"/></g><g transform="translate(922.9 326.2) rotate(126)"><ellipse rx="4.8" ry="3.5" fill="url(#g203_1)"/><path d="M-3.9 0Q0 1.2 3.9 0" fill="none" stroke="#1a1512" stroke-width="0.59"/></g><g transform="translate(933.2 297.3) rotate(176)"><ellipse rx="4.3" ry="3.1" fill="url(#g203_0)"/><path d="M-3.4 0Q0 1.1 3.4 0" fill="none" stroke="#1a1512" stroke-width="0.59"/></g></g><text x="798.5" y="268" text-anchor="middle" font-family="Liberation Serif" font-size="4.7" fill="#1a1a1a" stroke="#1a1a1a" stroke-width="0.15">Light Roast</text><text x="843.5" y="268" text-anchor="middle" font-family="Liberation Serif" font-size="4.7" fill="#1a1a1a" stroke="#1a1a1a" stroke-width="0.15">Medium Roast</text><text x="888" y="268" text-anchor="middle" font-family="Liberation Serif" font-size="4.7" fill="#1a1a1a" stroke="#1a1a1a" stroke-width="0.15">Medium Dark Roast</text><text x="932.5" y="268" text-anchor="middle" font-family="Liberation Serif" font-size="4.7" fill="#1a1a1a" stroke="#1a1a1a" stroke-width="0.15">Dark Roast</text><text x="798.5" y="366.0" text-anchor="middle" font-family="Liberation Serif" font-size="5" fill="#222" stroke="#222" stroke-width="0.1">internal</text><text x="798.5" y="373.1" text-anchor="middle" font-family="Liberation Serif" font-size="5" fill="#222" stroke="#222" stroke-width="0.1">temperature</text><text x="798.5" y="380.2" text-anchor="middle" font-family="Liberation Serif" font-size="5" fill="#222" stroke="#222" stroke-width="0.1">of around 356°F</text><text x="798.5" y="387.3" text-anchor="middle" font-family="Liberation Serif" font-size="5" fill="#222" stroke="#222" stroke-width="0.1">(180°C)</text><text x="843.5" y="366.0" text-anchor="middle" font-family="Liberation Serif" font-size="5" fill="#222" stroke="#222" stroke-width="0.1">internal</text><text x="843.5" y="373.1" text-anchor="middle" font-family="Liberation Serif" font-size="5" fill="#222" stroke="#222" stroke-width="0.1">temperature of</text><text x="843.5" y="380.2" text-anchor="middle" font-family="Liberation Serif" font-size="5" fill="#222" stroke="#222" stroke-width="0.1">around 410°F</text><text x="843.5" y="387.3" text-anchor="middle" font-family="Liberation Serif" font-size="5" fill="#222" stroke="#222" stroke-width="0.1">(210°C)</text><text x="888" y="366.0" text-anchor="middle" font-family="Liberation Serif" font-size="5" fill="#222" stroke="#222" stroke-width="0.1">internal</text><text x="888" y="373.1" text-anchor="middle" font-family="Liberation Serif" font-size="5" fill="#222" stroke="#222" stroke-width="0.1">temperature of</text><text x="888" y="380.2" text-anchor="middle" font-family="Liberation Serif" font-size="5" fill="#222" stroke="#222" stroke-width="0.1">around 437°F</text><text x="888" y="387.3" text-anchor="middle" font-family="Liberation Serif" font-size="5" fill="#222" stroke="#222" stroke-width="0.1">(225°C)</text><text x="932.5" y="366.0" text-anchor="middle" font-family="Liberation Serif" font-size="5" fill="#222" stroke="#222" stroke-width="0.1">internal</text><text x="932.5" y="373.1" text-anchor="middle" font-family="Liberation Serif" font-size="5" fill="#222" stroke="#222" stroke-width="0.1">temperature of</text><text x="932.5" y="380.2" text-anchor="middle" font-family="Liberation Serif" font-size="5" fill="#222" stroke="#222" stroke-width="0.1">around 464°F</text><text x="932.5" y="387.3" text-anchor="middle" font-family="Liberation Serif" font-size="5" fill="#222" stroke="#222" stroke-width="0.1">(240°C)</text></svg>
<div class="t" style="left:768.5px;top:410.9px;font-size:8.3px;color:#4862ad;text-decoration:underline">Read Less</div>

<div class="a" style="left:751px;top:502px;width:259px;height:1px;background:#d3d7e2"></div>
<div class="t" style="left:764px;top:518.5px;font-size:8.85px;color:#777a84">Type message here and press return key</div>
<svg style="left:983px;top:516px" width="14" height="14" viewBox="0 0 14 14"><path d="M3.6 3.8A4.8 4.8 0 1 1 4.4 10.9" fill="none" stroke="#222" stroke-width="1.3"/><path d="M1.2 0.9L1.7 5.5L6 5.1Z" fill="#222"/></svg>

<!-- scrollbars -->
<div class="a" style="left:1017px;top:2px;width:7px;height:619px;background:#f1f1f1"></div>
<div class="a" style="left:1017px;top:8px;width:10px;height:362px;background:#888;border-radius:5px"></div>
<div class="a" style="left:0;top:621px;width:1017px;height:12px;background:#f1f1f1"></div>
<div class="a" style="left:0.5px;top:621px;width:1009.5px;height:14px;background:#888;border-radius:4px"></div>
</body></html>
